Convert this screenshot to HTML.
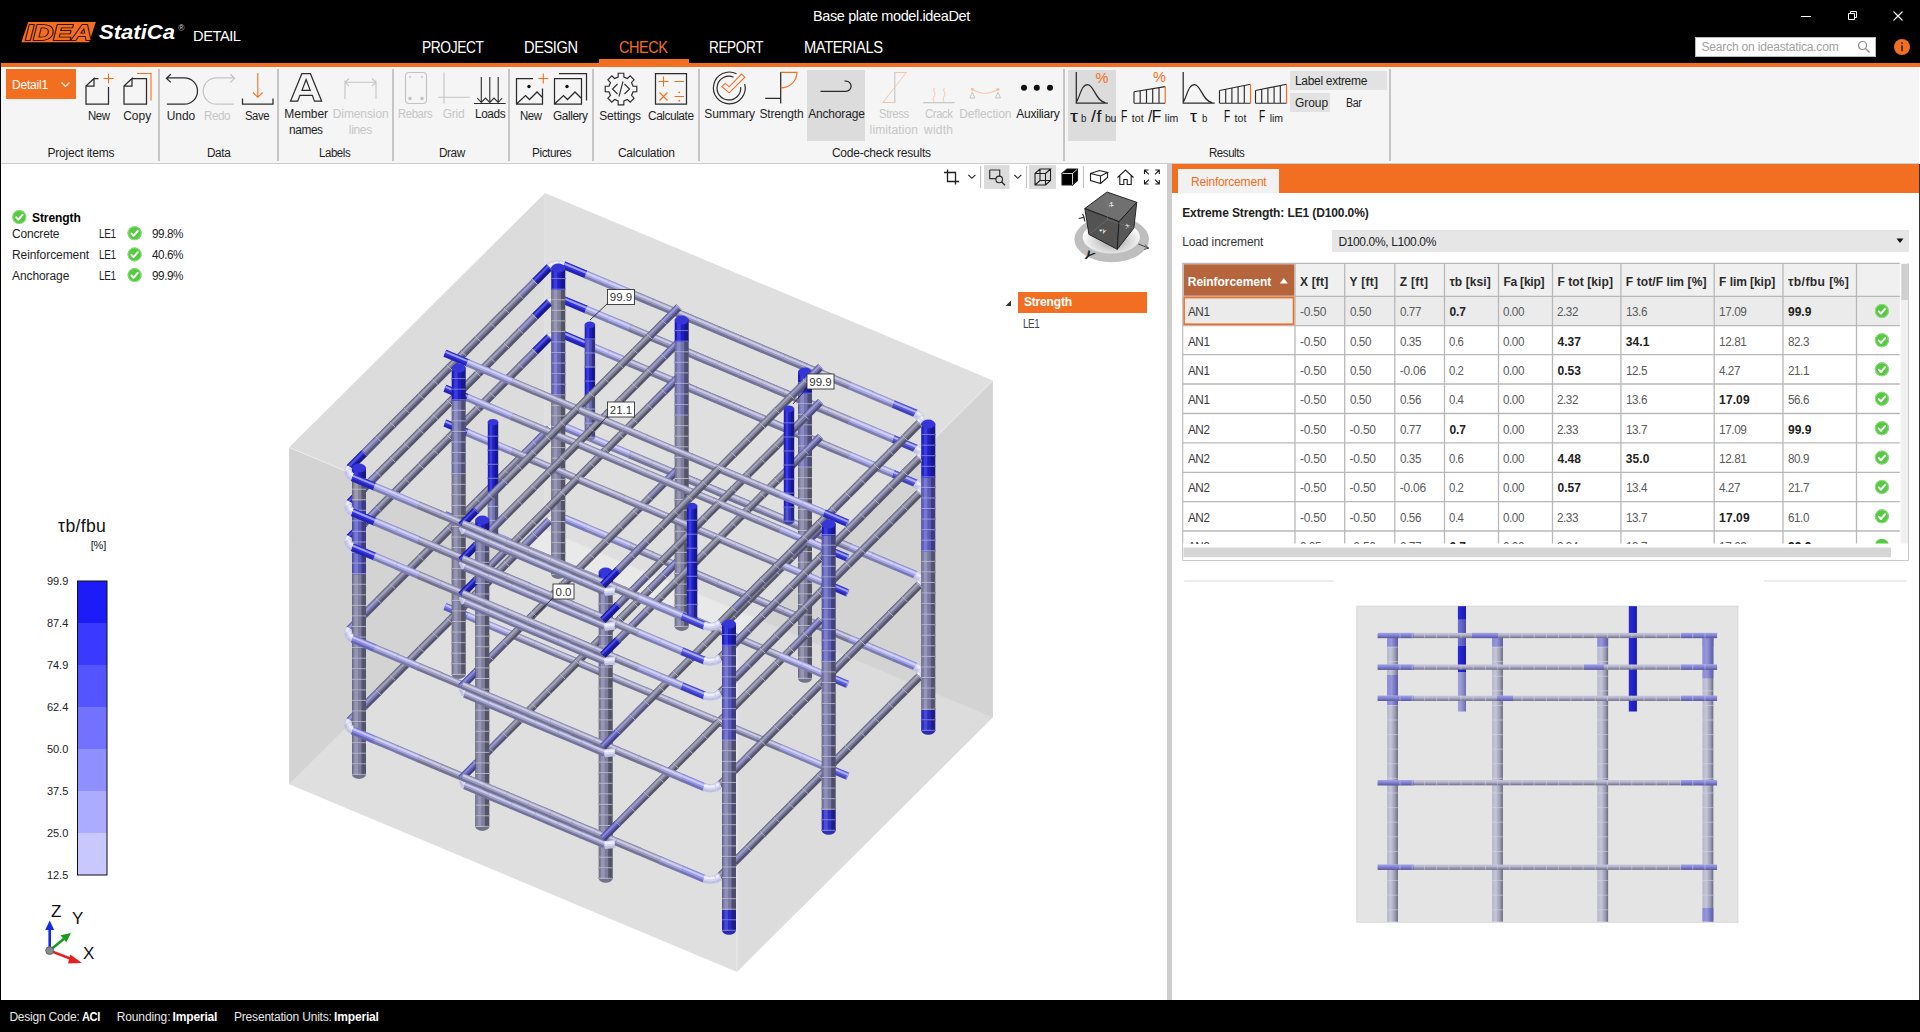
<!DOCTYPE html>
<html lang="en"><head><meta charset="utf-8"><title>Base plate model.ideaDet</title>
<style>
*{box-sizing:border-box;margin:0;padding:0}
html,body{width:1920px;height:1032px;overflow:hidden;background:#fff}
body{font-family:"Liberation Sans",sans-serif;font-size:13px;color:#1e1e1e;position:relative}
.abs{position:absolute}
#title{position:absolute;left:0;top:0;width:1920px;height:63px;background:#000}
#oline{position:absolute;left:0;top:63px;width:1920px;height:4px;background:#f26f21}
#ribbon{position:absolute;left:1px;top:67px;width:1918px;height:96px;background:#f5f5f5}
#ribline{position:absolute;left:1px;top:163px;width:1918px;height:1px;background:#cdcdcd}
#status{position:absolute;left:0;top:1000px;width:1920px;height:32px;background:#000;color:#fff}
.t{position:absolute;white-space:nowrap;line-height:1}
.c{transform:translateX(-50%);text-align:center}
.menu{position:absolute;top:39px;color:#fff;font-size:16px;white-space:nowrap;line-height:1;transform:translateX(-50%);letter-spacing:-0.3px}
.sep{position:absolute;top:69px;width:2px;height:92px;background:#c6c6c6}
.lbl{position:absolute;font-size:12.6px;color:#1e1e1e;white-space:nowrap;line-height:1;transform:translateX(-50%);text-align:center;letter-spacing:-0.2px}
.lbl.dis{color:#c9c9c9}
.grp{position:absolute;top:146px;font-size:12.6px;color:#1e1e1e;white-space:nowrap;line-height:1;transform:translateX(-50%);letter-spacing:-0.15px}
svg{position:absolute;overflow:visible}
</style></head><body>
<div id="title"></div>
<div id="oline"></div>
<div id="ribbon"></div>
<div id="ribline"></div>
<svg style="left:0;top:0" width="260" height="63" viewBox="0 0 260 63">
 <polygon points="28.2,21.9 95.8,21.9 89.2,42.3 21.4,42.3" fill="#f26f21"/>
 <text x="25.3" y="40" font-family="Liberation Sans,sans-serif" font-weight="bold" font-style="italic" font-size="22" fill="#f26f21" stroke="#000" stroke-width="1.5" paint-order="stroke" stroke-linejoin="miter" textLength="67" lengthAdjust="spacingAndGlyphs">IDEA</text>
 <text x="99" y="39.4" font-family="Liberation Sans,sans-serif" font-weight="bold" font-style="italic" font-size="21" fill="#fff" textLength="76" lengthAdjust="spacingAndGlyphs">StatiCa</text>
 <text x="178.2" y="31" font-family="Liberation Sans,sans-serif" font-size="8.5" fill="#ccc">®</text>
</svg>
<div class="abs" style="left:1695px;top:37px;width:181px;height:20px;background:#fff;border:1px solid #bbb"></div>
<!--TT0--><div class="t" style="left:193.00px;top:28.45px;font-size:15.30px;color:#fff;letter-spacing:-0.450px;transform:scaleX(0.9566);transform-origin:0 0;">DETAIL</div>
<div class="t" style="left:813.00px;top:8.95px;font-size:14.50px;color:#fff;letter-spacing:-0.385px;">Base plate model.ideaDet</div>
<div class="t" style="left:421.50px;top:39.60px;font-size:15.60px;color:#fff;letter-spacing:-0.450px;transform:scaleX(0.8844);transform-origin:0 0;">PROJECT</div>
<div class="t" style="left:524.00px;top:39.60px;font-size:15.60px;color:#fff;letter-spacing:-0.450px;transform:scaleX(0.9381);transform-origin:0 0;">DESIGN</div>
<div class="t" style="left:619.00px;top:39.60px;font-size:15.60px;color:#f26f21;letter-spacing:-0.450px;transform:scaleX(0.9279);transform-origin:0 0;">CHECK</div>
<div class="t" style="left:709.00px;top:39.60px;font-size:15.60px;color:#fff;letter-spacing:-0.450px;transform:scaleX(0.8724);transform-origin:0 0;">REPORT</div>
<div class="t" style="left:804.00px;top:39.60px;font-size:15.60px;color:#fff;letter-spacing:-0.450px;transform:scaleX(0.9443);transform-origin:0 0;">MATERIALS</div>
<div class="t" style="left:1701.50px;top:41.30px;font-size:12.00px;color:#a0a0a0;letter-spacing:-0.176px;">Search on ideastatica.com</div><!--TT1-->
<div class="abs" style="left:598.5px;top:59px;width:90px;height:4px;background:#f26f21"></div>
<svg style="left:1780px;top:0" width="140" height="32" viewBox="0 0 140 32">
 <path d="M21 16.500h10" stroke="#fff" stroke-width="1" fill="none"/>
 <path d="M68.500 13.500h6v6h-6z M70.500 13.500v-2h6v6h-2" stroke="#fff" stroke-width="1" fill="none"/>
 <path d="M113.500 11.500l9 9M122.500 11.500l-9 9" stroke="#fff" stroke-width="1.100" fill="none"/>
</svg>
<svg style="left:1856px;top:39px" width="16" height="16" viewBox="0 0 16 16"><circle cx="6.500" cy="6.500" r="4" fill="none" stroke="#8a8a8a" stroke-width="1.200"/><path d="M9.500 9.500l4 4" stroke="#8a8a8a" stroke-width="1.300"/></svg>
<svg style="left:1893px;top:38px" width="18" height="18" viewBox="0 0 18 18"><circle cx="9" cy="9" r="8" fill="#f26f21"/><rect x="8.300" y="7.300" width="1.500" height="6" fill="#222"/><rect x="8.300" y="4.300" width="1.500" height="1.600" fill="#222"/></svg>

<div class="abs" style="left:6px;top:69px;width:70px;height:30px;background:#f26f21"></div>
<div class="t" style="left:12.00px;top:78.50px;font-size:12.00px;color:#fff;letter-spacing:-0.193px;">Detail1</div>
<div class="abs" style="left:807px;top:70px;width:58px;height:71px;background:#dcdcdc"></div>
<div class="abs" style="left:1068px;top:70px;width:48px;height:71px;background:#dcdcdc"></div>
<div class="abs" style="left:1290px;top:71px;width:97px;height:19px;background:#e2e2e2"></div>
<div class="abs" style="left:1290px;top:93px;width:40px;height:19px;background:#e2e2e2"></div>
<div class="sep" style="left:158px"></div>
<div class="sep" style="left:277px"></div>
<div class="sep" style="left:392px"></div>
<div class="sep" style="left:508px"></div>
<div class="sep" style="left:592px"></div>
<div class="sep" style="left:698px"></div>
<div class="sep" style="left:1063px"></div>
<div class="sep" style="left:1389px"></div>
<div class="t" style="left:88.49px;top:109.50px;font-size:12.00px;color:#1e1e1e;letter-spacing:-0.450px;transform:scaleX(0.9521);transform-origin:0 0;">New</div>
<div class="t" style="left:123.20px;top:109.50px;font-size:12.00px;color:#1e1e1e;letter-spacing:-0.003px;">Copy</div>
<div class="t" style="left:166.76px;top:109.50px;font-size:12.00px;color:#1e1e1e;letter-spacing:-0.071px;">Undo</div>
<div class="t" style="left:204.49px;top:109.50px;font-size:12.00px;color:#c6c6c6;letter-spacing:-0.450px;transform:scaleX(0.9731);transform-origin:0 0;">Redo</div>
<div class="t" style="left:244.59px;top:109.50px;font-size:12.00px;color:#1e1e1e;letter-spacing:-0.450px;transform:scaleX(0.9384);transform-origin:0 0;">Save</div>
<div class="t" style="left:284.32px;top:107.60px;font-size:12.00px;color:#1e1e1e;letter-spacing:-0.051px;">Member</div>
<div class="t" style="left:289.00px;top:124.00px;font-size:12.00px;color:#1e1e1e;letter-spacing:-0.403px;transform:scaleX(0.9883);transform-origin:0 0;">names</div>
<div class="t" style="left:332.75px;top:107.60px;font-size:12.00px;color:#c6c6c6;letter-spacing:-0.099px;">Dimension</div>
<div class="t" style="left:348.83px;top:124.00px;font-size:12.00px;color:#c6c6c6;letter-spacing:-0.336px;">lines</div>
<div class="t" style="left:398.49px;top:107.60px;font-size:12.00px;color:#c6c6c6;letter-spacing:-0.450px;transform:scaleX(0.9497);transform-origin:0 0;">Rebars</div>
<div class="t" style="left:442.80px;top:107.60px;font-size:12.00px;color:#c6c6c6;letter-spacing:-0.292px;">Grid</div>
<div class="t" style="left:474.70px;top:107.60px;font-size:12.00px;color:#1e1e1e;letter-spacing:-0.419px;transform:scaleX(0.9865);transform-origin:0 0;">Loads</div>
<div class="t" style="left:520.19px;top:109.50px;font-size:12.00px;color:#1e1e1e;letter-spacing:-0.450px;transform:scaleX(0.9521);transform-origin:0 0;">New</div>
<div class="t" style="left:552.70px;top:109.50px;font-size:12.00px;color:#1e1e1e;letter-spacing:-0.430px;transform:scaleX(0.9879);transform-origin:0 0;">Gallery</div>
<div class="t" style="left:599.29px;top:109.50px;font-size:12.00px;color:#1e1e1e;letter-spacing:-0.220px;">Settings</div>
<div class="t" style="left:647.50px;top:109.50px;font-size:12.00px;color:#1e1e1e;letter-spacing:-0.447px;transform:scaleX(0.9904);transform-origin:0 0;">Calculate</div>
<div class="t" style="left:704.30px;top:107.60px;font-size:12.00px;color:#1e1e1e;letter-spacing:-0.091px;">Summary</div>
<div class="t" style="left:759.41px;top:107.60px;font-size:12.00px;color:#1e1e1e;letter-spacing:-0.170px;">Strength</div>
<div class="t" style="left:808.16px;top:107.60px;font-size:12.00px;color:#1e1e1e;letter-spacing:-0.171px;">Anchorage</div>
<div class="t" style="left:878.64px;top:107.60px;font-size:12.00px;color:#c6c6c6;letter-spacing:-0.450px;transform:scaleX(0.9541);transform-origin:0 0;">Stress</div>
<div class="t" style="left:869.61px;top:124.00px;font-size:12.00px;color:#c6c6c6;letter-spacing:0.115px;">limitation</div>
<div class="t" style="left:924.99px;top:107.60px;font-size:12.00px;color:#c6c6c6;letter-spacing:-0.450px;transform:scaleX(0.9480);transform-origin:0 0;">Crack</div>
<div class="t" style="left:924.02px;top:124.00px;font-size:12.00px;color:#c6c6c6;letter-spacing:0.237px;">width</div>
<div class="t" style="left:959.23px;top:107.60px;font-size:12.00px;color:#c6c6c6;letter-spacing:-0.136px;">Deflection</div>
<div class="t" style="left:1016.19px;top:107.60px;font-size:12.00px;color:#1e1e1e;letter-spacing:-0.216px;">Auxiliary</div>
<div class="t" style="left:47.41px;top:146.60px;font-size:12.00px;color:#1e1e1e;letter-spacing:-0.181px;">Project items</div>
<div class="t" style="left:206.65px;top:146.60px;font-size:12.00px;color:#1e1e1e;letter-spacing:-0.412px;transform:scaleX(0.9829);transform-origin:0 0;">Data</div>
<div class="t" style="left:319.19px;top:146.60px;font-size:12.00px;color:#1e1e1e;letter-spacing:-0.450px;transform:scaleX(0.9544);transform-origin:0 0;">Labels</div>
<div class="t" style="left:438.60px;top:146.60px;font-size:12.00px;color:#1e1e1e;letter-spacing:-0.450px;transform:scaleX(0.9831);transform-origin:0 0;">Draw</div>
<div class="t" style="left:532.20px;top:146.60px;font-size:12.00px;color:#1e1e1e;letter-spacing:-0.450px;transform:scaleX(0.9852);transform-origin:0 0;">Pictures</div>
<div class="t" style="left:617.88px;top:146.60px;font-size:12.00px;color:#1e1e1e;letter-spacing:-0.233px;">Calculation</div>
<div class="t" style="left:831.90px;top:146.60px;font-size:12.00px;color:#1e1e1e;letter-spacing:-0.206px;">Code-check results</div>
<div class="t" style="left:1209.14px;top:146.60px;font-size:12.00px;color:#1e1e1e;letter-spacing:-0.450px;transform:scaleX(0.9568);transform-origin:0 0;">Results</div>
<div class="t" style="left:1295.00px;top:74.80px;font-size:12.00px;color:#1e1e1e;letter-spacing:-0.311px;">Label extreme</div>
<div class="t" style="left:1295.00px;top:96.80px;font-size:12.00px;color:#1e1e1e;letter-spacing:-0.070px;">Group</div>
<div class="t" style="left:1346.40px;top:96.80px;font-size:12.00px;color:#1e1e1e;letter-spacing:-0.450px;transform:scaleX(0.8834);transform-origin:0 0;">Bar</div>
<div class="t" style="left:1069.70px;top:108.60px;font-size:16.00px;color:#111;letter-spacing:0.500px;transform:scaleX(1.2658);transform-origin:0 0;">τ</div>
<div class="t" style="left:1081.00px;top:113.05px;font-size:10.50px;color:#222;letter-spacing:-0.439px;transform:scaleX(0.9248);transform-origin:0 0;">b</div>
<div class="t" style="left:1090.50px;top:108.60px;font-size:16.00px;color:#111;letter-spacing:0.500px;transform:scaleX(1.1182);transform-origin:0 0;">/f</div>
<div class="t" style="left:1105.00px;top:113.05px;font-size:10.50px;color:#222;letter-spacing:-0.339px;">bu</div>
<div class="t" style="left:1121.00px;top:108.60px;font-size:16.00px;color:#111;letter-spacing:-0.450px;transform:scaleX(0.6447);transform-origin:0 0;">F</div>
<div class="t" style="left:1131.70px;top:113.05px;font-size:10.50px;color:#222;letter-spacing:0.142px;">tot</div>
<div class="t" style="left:1147.70px;top:108.60px;font-size:16.00px;color:#111;letter-spacing:-0.450px;transform:scaleX(0.9660);transform-origin:0 0;">/F</div>
<div class="t" style="left:1164.80px;top:113.05px;font-size:10.50px;color:#222;letter-spacing:0.029px;">lim</div>
<div class="t" style="left:1190.00px;top:108.60px;font-size:16.00px;color:#111;letter-spacing:0.500px;transform:scaleX(1.1076);transform-origin:0 0;">τ</div>
<div class="t" style="left:1201.70px;top:113.05px;font-size:10.50px;color:#222;letter-spacing:-0.450px;transform:scaleX(0.9077);transform-origin:0 0;">b</div>
<div class="t" style="left:1223.80px;top:108.60px;font-size:16.00px;color:#111;letter-spacing:-0.450px;transform:scaleX(0.6344);transform-origin:0 0;">F</div>
<div class="t" style="left:1234.40px;top:113.05px;font-size:10.50px;color:#222;letter-spacing:0.176px;">tot</div>
<div class="t" style="left:1259.20px;top:108.60px;font-size:16.00px;color:#111;letter-spacing:-0.450px;transform:scaleX(0.6344);transform-origin:0 0;">F</div>
<div class="t" style="left:1269.80px;top:113.05px;font-size:10.50px;color:#222;letter-spacing:-0.071px;">lim</div>
<svg style="left:0;top:0" width="1920" height="170" viewBox="0 0 1920 170"><path d="M61.5 82.5l4 4l4-4" stroke="#fff" stroke-width="1.1" fill="none" stroke-linejoin="miter" /><path d="M94 78.5h4.5M108.5 87v17h-22.5v-18l8-7.5v7.5h-8" stroke="#2b2b2b" stroke-width="1.25" fill="none" stroke-linejoin="miter" /><path d="M108.5 73.5v10M103.5 78.5h10" stroke="#f26f21" stroke-width="1.1" fill="none" stroke-linejoin="miter" /><path d="M132 78.5h14.5v25.5h-22.5v-18l8-7.5v7.5h-8" stroke="#2b2b2b" stroke-width="1.25" fill="none" stroke-linejoin="miter" /><path d="M137 73.5h14v27" stroke="#f26f21" stroke-width="1.1" fill="none" stroke-linejoin="miter" /><path d="M166.9 104.2h17.4a13.2 13.2 0 0 0 0-26.4h-17M170.8 74.2l-4.4 4.1l4.4 4.1" stroke="#2b2b2b" stroke-width="1.25" fill="none" stroke-linejoin="miter" /><path d="M233.8 104.2h-17.4a13.2 13.2 0 0 1 0-26.4h17M230.3 74.2l4.4 4.1l-4.4 4.1" stroke="#c4c4c4" stroke-width="1.25" fill="none" stroke-linejoin="miter" /><path d="M242.5 98.5v5.5h30.5v-5.5" stroke="#2b2b2b" stroke-width="1.25" fill="none" stroke-linejoin="miter" /><path d="M257.8 73v24M253 92.5l4.8 4.8l4.8-4.8" stroke="#f26f21" stroke-width="1.1" fill="none" stroke-linejoin="miter" /><path d="M290.5 101.2l11.3-27.5h8.6l11.3 27.5h-7.2l-2.2-5.8h-12.4l-2.2 5.8zM302 90.3h8.2l-4.1-10.8z" stroke="#2b2b2b" stroke-width="1.2" fill="none" stroke-linejoin="miter" /><path d="M345 80.5v18.5M376 80.5v18.5M345.5 82.3h30M349 78.5l-3.8 3.8l3.8 3.8M372 78.5l3.8 3.8l-3.8 3.8" stroke="#c4c4c4" stroke-width="1.1" fill="none" stroke-linejoin="miter" /><rect x="405.5" y="72.5" width="21" height="31" rx="3.5" fill="none" stroke="#c4c4c4" stroke-width="1.2"/><circle cx="410" cy="77" r="0.9" fill="#c4c4c4"/><circle cx="422" cy="77" r="0.9" fill="#c4c4c4"/><circle cx="410" cy="98.5" r="1.8" fill="#c4c4c4"/><circle cx="422" cy="98.5" r="1.8" fill="#c4c4c4"/><path d="M444 72.5v31M438 97.3h31.7" stroke="#c4c4c4" stroke-width="1.1" fill="none" stroke-linejoin="miter" /><path d="M474 103.5h31.7M481.3 77v25.5M489.8 77v25.5M498.2 77v25.5M477.3 98l4 4.5l4.2-4.5l4.3 4.5l4.2-4.5l4.2 4.5l4-4.5" stroke="#2b2b2b" stroke-width="1.1" fill="none" stroke-linejoin="miter" /><path d="M533 78.5h-16.5v25.5h26v-15.5M517 103.5l8.5-8l4 4l7.5-7.5l5.5 5.5" stroke="#2b2b2b" stroke-width="1.25" fill="none" stroke-linejoin="miter" /><circle cx="529" cy="86.5" r="1.7" fill="#111"/><path d="M543.3 73.5v10M538.3 78.5h10" stroke="#f26f21" stroke-width="1.1" fill="none" stroke-linejoin="miter" /><path d="M554.5 78.5h27v25.5h-27zM555 103.5l8.5-8l4 4l7.5-7.5l6 6M559 73.5h27.5v27" stroke="#2b2b2b" stroke-width="1.25" fill="none" stroke-linejoin="miter" /><circle cx="567" cy="86.5" r="1.7" fill="#111"/><path d="M618.2 73.2L623.8 73.2L623.9 77.0L627.4 78.5L630.2 75.9L634.1 79.8L631.5 82.6L633.0 86.1L636.8 86.2L636.8 91.8L633.0 91.9L631.5 95.4L634.1 98.2L630.2 102.1L627.4 99.5L623.9 101.0L623.8 104.8L618.2 104.8L618.1 101.0L614.6 99.5L611.8 102.1L607.9 98.2L610.5 95.4L609.0 91.9L605.2 91.8L605.2 86.2L609.0 86.1L610.5 82.6L607.9 79.8L611.8 75.9L614.6 78.5L618.1 77.0z" stroke="#2b2b2b" stroke-width="1.15" fill="none" stroke-linejoin="miter" stroke-linejoin="round"/><path d="M617.5 84l-5 5l5 5M624.5 84l5 5l-5 5M623 81.5l-4 15" stroke="#2b2b2b" stroke-width="1.1" fill="none" stroke-linejoin="miter" /><path d="M655.5 73.5h31v30.5h-31z" stroke="#2b2b2b" stroke-width="1.25" fill="none" stroke-linejoin="miter" /><path d="M658.5 81.5h10M663.5 76.5v10M674.5 81.5h9.5M659.5 92.5l8 8M667.5 92.5l-8 8M674.5 96.5h9.5" stroke="#f26f21" stroke-width="1.1" fill="none" stroke-linejoin="miter" /><circle cx="679.3" cy="92.3" r="0.9" fill="#f26f21"/><circle cx="679.3" cy="100.7" r="0.9" fill="#f26f21"/><path d="M736.5 73.8A15.9 15.9 0 1 0 744.7 84" stroke="#2b2b2b" stroke-width="1.2" fill="none" stroke-linejoin="miter" /><path d="M733.5 77.2A11.85 11.85 0 1 0 740.7 87.1" stroke="#2b2b2b" stroke-width="1.2" fill="none" stroke-linejoin="miter" /><path d="M721.9 86.6L725.1 83.4L729.2 86.8L741.5 74.1L744.8 77.2L729.2 92.8z" stroke="#f26f21" stroke-width="1.1" fill="none" stroke-linejoin="miter" /><path d="M780.7 72v31.5M765.2 98.3h15.5" stroke="#2b2b2b" stroke-width="1.25" fill="none" stroke-linejoin="miter" /><path d="M780.7 72.4h16.2A16.2 15.5 0 0 1 780.7 87.9" stroke="#f26f21" stroke-width="1.1" fill="none" stroke-linejoin="miter" /><path d="M820.5 91.3h25.5a5.1 5.1 0 0 0 0-10.2h-1.5" stroke="#2b2b2b" stroke-width="1.25" fill="none" stroke-linejoin="miter" /><path d="M894.8 72v31" stroke="#c4c4c4" stroke-width="1.1" fill="none" stroke-linejoin="miter" /><path d="M894.8 72.5h11.5l-23.5 30h12" stroke="#f8c4a6" stroke-width="1" fill="none" stroke-linejoin="miter" /><path d="M923 102.7h31.5" stroke="#c4c4c4" stroke-width="1.2" fill="none" stroke-linejoin="miter" /><path d="M934.5 88c-2.5 3 2 4.5 0 7.5s-1.5 4-0.5 6.5M944.5 88c-2.5 3 2 4.5 0 7.5s-1.5 4-0.5 6.5" stroke="#f8c4a6" stroke-width="1" fill="none" stroke-linejoin="miter" /><path d="M972.3 89.3q13 8 25.7 0" stroke="#f8c4a6" stroke-width="1.1" fill="none" stroke-linejoin="miter" /><circle cx="972.3" cy="89.3" r="1.6" fill="#f8c4a6"/><circle cx="998" cy="89.3" r="1.6" fill="#f8c4a6"/><path d="M972.3 92.5l-2.6 5.5h5.2zM998 92.5l-2.6 5.5h5.2z" stroke="#c4c4c4" stroke-width="1" fill="none" stroke-linejoin="miter" /><circle cx="1024" cy="87.8" r="3" fill="#111"/><circle cx="1036.8" cy="87.8" r="3" fill="#111"/><circle cx="1050" cy="87.8" r="3" fill="#111"/><path d="M1076.3 72v31h31.5M1076.8 101.5c4-8 5-17 11-17s8 17 17.5 18" stroke="#2b2b2b" stroke-width="1.25" fill="none" stroke-linejoin="miter" /><path d="M1183.2 72v31h31.5M1183.7 101.5c4-8 5-17 11-17s8 17 17.5 18" stroke="#2b2b2b" stroke-width="1.25" fill="none" stroke-linejoin="miter" /><path d="M1134.0 103.2h31.2M1134.0 91.8L1165.2 86.6M1134.0 91.8V103.2M1140.2 90.8V103.2M1146.5 89.7V103.2M1152.7 88.7V103.2M1159.0 87.6V103.2" stroke="#2b2b2b" stroke-width="1.15" fill="none" stroke-linejoin="miter" /><path d="M1165.2 86.6V103.2" stroke="#f26f21" stroke-width="1.2" fill="none" stroke-linejoin="miter" /><path d="M1219.5 103.2h31.0M1219.5 90.5L1250.5 84.3M1219.5 90.5V103.2M1225.7 89.3V103.2M1231.9 88.0V103.2M1238.1 86.8V103.2M1244.3 85.5V103.2" stroke="#2b2b2b" stroke-width="1.15" fill="none" stroke-linejoin="miter" /><path d="M1250.5 84.3V103.2" stroke="#f26f21" stroke-width="1.2" fill="none" stroke-linejoin="miter" /><path d="M1255.5 103.2h31.0M1255.5 90.5L1286.5 84.3M1255.5 90.5V103.2M1261.7 89.3V103.2M1267.9 88.0V103.2M1274.1 86.8V103.2M1280.3 85.5V103.2" stroke="#2b2b2b" stroke-width="1.15" fill="none" stroke-linejoin="miter" /><path d="M1286.5 84.3V103.2" stroke="#f26f21" stroke-width="1.2" fill="none" stroke-linejoin="miter" /><text x="1102" y="82.6" font-family="Liberation Sans,sans-serif" font-size="14.5" fill="#f26f21" text-anchor="middle">%</text><text x="1159.5" y="82.2" font-family="Liberation Sans,sans-serif" font-size="14.5" fill="#f26f21" text-anchor="middle">%</text></svg>
<div class="abs" style="left:1167px;top:164px;width:5px;height:836px;background:#cdcdcd"></div>
<div class="t" style="left:32.00px;top:211.70px;font-size:12.00px;color:#000;letter-spacing:-0.078px;font-weight:bold;">Strength</div>
<div class="t" style="left:12.00px;top:227.70px;font-size:12.00px;color:#1e1e1e;letter-spacing:-0.174px;">Concrete</div>
<div class="t" style="left:99.30px;top:227.70px;font-size:12.00px;color:#1e1e1e;letter-spacing:-0.450px;transform:scaleX(0.8313);transform-origin:0 0;">LE1</div>
<div class="t" style="left:152.30px;top:227.70px;font-size:12.00px;color:#1e1e1e;letter-spacing:-0.450px;transform:scaleX(0.9744);transform-origin:0 0;">99.8%</div>
<div class="t" style="left:12.00px;top:248.90px;font-size:12.00px;color:#1e1e1e;letter-spacing:-0.079px;">Reinforcement</div>
<div class="t" style="left:99.30px;top:248.90px;font-size:12.00px;color:#1e1e1e;letter-spacing:-0.450px;transform:scaleX(0.8313);transform-origin:0 0;">LE1</div>
<div class="t" style="left:152.30px;top:248.90px;font-size:12.00px;color:#1e1e1e;letter-spacing:-0.450px;transform:scaleX(0.9744);transform-origin:0 0;">40.6%</div>
<div class="t" style="left:12.00px;top:269.60px;font-size:12.00px;color:#1e1e1e;letter-spacing:-0.082px;">Anchorage</div>
<div class="t" style="left:99.30px;top:269.60px;font-size:12.00px;color:#1e1e1e;letter-spacing:-0.450px;transform:scaleX(0.8313);transform-origin:0 0;">LE1</div>
<div class="t" style="left:152.30px;top:269.60px;font-size:12.00px;color:#1e1e1e;letter-spacing:-0.450px;transform:scaleX(0.9744);transform-origin:0 0;">99.9%</div>
<div class="t" style="left:58.10px;top:518.20px;font-size:17.60px;color:#111;letter-spacing:0.335px;">τb/fbu</div>
<div class="t" style="left:90.70px;top:540.00px;font-size:11.00px;color:#111;letter-spacing:-0.131px;">[%]</div>
<div class="t" style="left:46.90px;top:575.80px;font-size:11.00px;color:#222;letter-spacing:-0.002px;">99.9</div>
<div class="t" style="left:46.90px;top:617.80px;font-size:11.00px;color:#222;letter-spacing:-0.002px;">87.4</div>
<div class="t" style="left:46.90px;top:659.80px;font-size:11.00px;color:#222;letter-spacing:-0.002px;">74.9</div>
<div class="t" style="left:46.90px;top:701.80px;font-size:11.00px;color:#222;letter-spacing:-0.002px;">62.4</div>
<div class="t" style="left:46.90px;top:743.80px;font-size:11.00px;color:#222;letter-spacing:-0.002px;">50.0</div>
<div class="t" style="left:46.90px;top:785.80px;font-size:11.00px;color:#222;letter-spacing:-0.002px;">37.5</div>
<div class="t" style="left:46.90px;top:827.80px;font-size:11.00px;color:#222;letter-spacing:-0.002px;">25.0</div>
<div class="t" style="left:46.90px;top:869.80px;font-size:11.00px;color:#222;letter-spacing:-0.002px;">12.5</div>
<div class="t" style="left:51.00px;top:902.50px;font-size:17.00px;color:#111;">Z</div>
<div class="t" style="left:72.00px;top:910.00px;font-size:17.00px;color:#111;">Y</div>
<div class="t" style="left:83.00px;top:944.50px;font-size:17.00px;color:#111;">X</div>
<div class="abs" style="left:1018px;top:292px;width:129px;height:21px;background:#f26f21"></div>
<div class="t" style="left:1023.90px;top:296.30px;font-size:12.00px;color:#fff;letter-spacing:-0.153px;font-weight:bold;">Strength</div>
<div class="t" style="left:1022.80px;top:318.00px;font-size:12.00px;color:#444;letter-spacing:-0.450px;transform:scaleX(0.8166);transform-origin:0 0;">LE1</div>
<svg style="left:0;top:0" width="1920" height="1032" viewBox="0 0 1920 1032"><circle cx="19.3" cy="217" r="7" fill="#56c943"/><circle cx="19.3" cy="217" r="6.5" fill="none" stroke="#8fe07f" stroke-width="1"/><path d="M16.2 217.3l2.1 2.3l4.2 -4.8" stroke="#fff" stroke-width="2" fill="none" stroke-linecap="round" stroke-linejoin="round"/><circle cx="134.6" cy="233.2" r="7" fill="#56c943"/><circle cx="134.6" cy="233.2" r="6.5" fill="none" stroke="#8fe07f" stroke-width="1"/><path d="M131.4 233.5l2.1 2.3l4.2 -4.8" stroke="#fff" stroke-width="2" fill="none" stroke-linecap="round" stroke-linejoin="round"/><circle cx="134.6" cy="254.4" r="7" fill="#56c943"/><circle cx="134.6" cy="254.4" r="6.5" fill="none" stroke="#8fe07f" stroke-width="1"/><path d="M131.4 254.8l2.1 2.3l4.2 -4.8" stroke="#fff" stroke-width="2" fill="none" stroke-linecap="round" stroke-linejoin="round"/><circle cx="134.6" cy="275.1" r="7" fill="#56c943"/><circle cx="134.6" cy="275.1" r="6.5" fill="none" stroke="#8fe07f" stroke-width="1"/><path d="M131.4 275.5l2.1 2.3l4.2 -4.8" stroke="#fff" stroke-width="2" fill="none" stroke-linecap="round" stroke-linejoin="round"/><rect x="77.5" y="581.0" width="29.5" height="42.2" fill="rgb(28,28,248)"/><rect x="77.5" y="623.0" width="29.5" height="42.2" fill="rgb(57,57,255)"/><rect x="77.5" y="665.0" width="29.5" height="42.2" fill="rgb(85,85,255)"/><rect x="77.5" y="707.0" width="29.5" height="42.2" fill="rgb(114,114,255)"/><rect x="77.5" y="749.0" width="29.5" height="42.2" fill="rgb(143,143,255)"/><rect x="77.5" y="791.0" width="29.5" height="42.2" fill="rgb(171,171,255)"/><rect x="77.5" y="833.0" width="29.5" height="42.2" fill="rgb(200,200,255)"/><rect x="77.5" y="581" width="29.5" height="294" fill="none" stroke="#111" stroke-width="1"/><path d="M49.7 950.6L49.7 928" stroke="#1428e6" stroke-width="2.6" fill="none" /><path d="M45.2 930L49.7 920.5L54.2 930z" stroke="#1428e6" stroke-width="0" fill="#1428e6" /><path d="M49.7 950.6L64 938.8" stroke="#1a9a1a" stroke-width="2.6" fill="none" /><path d="M60.5 935.3L71 933L66.3 942.2z" stroke="#1a9a1a" stroke-width="0" fill="#1a9a1a" /><path d="M49.7 950.6L72 959.3" stroke="#e62020" stroke-width="2.6" fill="none" /><path d="M70.3 954.6L82 963L68 963.6z" stroke="#e62020" stroke-width="0" fill="#e62020" /><circle cx="49.7" cy="950.6" r="4" fill="#8a8a8a" stroke="#555" stroke-width="0.8"/><rect x="984" y="165" width="25.5" height="24" fill="#dcdcdc"/><rect x="1029" y="165" width="27" height="24" fill="#dcdcdc"/><path d="M980.6 166v22" stroke="#c4c4c4" stroke-width="1.2" fill="none" /><path d="M1026.5 166v22" stroke="#c4c4c4" stroke-width="1.2" fill="none" /><path d="M1083.5 166v22" stroke="#c4c4c4" stroke-width="1.2" fill="none" /><path d="M947.5 169.5v12h11.5M944 172.5h11.5v12" stroke="#1e1e1e" stroke-width="1.3" fill="none" /><path d="M968.4 174.8l3.5 3.5l3.5-3.5" stroke="#1e1e1e" stroke-width="1.1" fill="none" /><path d="M989.7 170h10v8.6h-5.5M989.7 170v8.6h4.5" stroke="#333" stroke-width="1.2" fill="none" /><circle cx="999.2" cy="179.4" r="3.3" fill="#dcdcdc" stroke="#222" stroke-width="1.1"/><path d="M1001.7 181.9l3.3 3.3" stroke="#1e1e1e" stroke-width="1.3" fill="none" /><path d="M1014.3 174.8l3.5 3.5l3.5-3.5" stroke="#1e1e1e" stroke-width="1.1" fill="none" /><path d="M1035 173.5h10.5v11.5h-10.5zM1035 173.5l5-4.5h10.5l-5 4.5M1050.5 169v11.5l-5 4.5M1040 169v11.5h10.5M1040 180.5l-5 4.5" stroke="#1e1e1e" stroke-width="1.1" fill="none" /><path d="M1062 173.5h10.5v11.5h-10.5zM1062 173.5l5-4.5h10.5v11.5l-5 4.5v-11.5z" stroke="#1e1e1e" stroke-width="1.1" fill="#000" /><path d="M1062.5 173.5h10l4.5-4" stroke="#fff" stroke-width="0.8" fill="none" /><path d="M1072.5 173.5v11" stroke="#fff" stroke-width="0.8" fill="none" /><path d="M1090.5 173.5l10 2.5v7.5l-10-3zM1090.5 173.5l9-3l8 2l-7 3.5M1107.500 172.500v5l-7 6" stroke="#1e1e1e" stroke-width="1.1" fill="none" /><path d="M1117.5 177.5l8-7.5l8 7.5M1119.8 176v8.5h4v-5h3.400v5h4v-8.500" stroke="#1e1e1e" stroke-width="1.1" fill="none" /><path d="M1144.5 174v-4h4M1144.5 170l4.300 4.300M1159.300 174v-4h-4M1159.300 170l-4.300 4.300M1144.5 180v4h4M1144.5 184l4.300-4.300M1159.300 180v4h-4M1159.300 184l-4.300-4.300" stroke="#1e1e1e" stroke-width="1.1" fill="none" /><defs><radialGradient id="ncs" cx="0.52" cy="0.62" r="0.55"><stop offset="0" stop-color="#9a9a9a"/><stop offset="0.55" stop-color="#d8d8d8"/><stop offset="1" stop-color="#ffffff"/></radialGradient></defs><ellipse cx="1111.700" cy="239.300" rx="37.300" ry="23" fill="#bebebe"/><ellipse cx="1111.300" cy="237.200" rx="28.600" ry="16.300" fill="url(#ncs)"/><polygon points="1107,192 1136.800,202.300 1119,221.700 1084.800,208.500" fill="#707070" stroke="#1a1a1a" stroke-width="0.9" stroke-linejoin="round"/><polygon points="1084.800,208.500 1119,221.700 1117.300,249.300 1088.900,234.400" fill="#535353" stroke="#1a1a1a" stroke-width="0.9" stroke-linejoin="round"/><polygon points="1119,221.700 1136.800,202.300 1133.800,228.200 1117.300,249.300" fill="#585858" stroke="#1a1a1a" stroke-width="0.9" stroke-linejoin="round"/><path d="M1107 192l0.500 27.500l-18.600 15M1107.500 219.500l26.300 8.700" stroke="#7c7c7c" stroke-width="0.5" fill="none" /><text x="1098.500" y="231.500" font-family="Liberation Sans,sans-serif" font-size="5.500" font-weight="bold" fill="#fff" transform="rotate(22 1098.500 231.500)">+Y</text><text x="1109.500" y="207.500" font-family="Liberation Sans,sans-serif" font-size="5.500" font-weight="bold" fill="#fff" transform="rotate(-28 1109.500 207.500)">-Z</text><text x="1127" y="229.500" font-family="Liberation Sans,sans-serif" font-size="5" font-weight="bold" fill="#e8e8e8" transform="rotate(-58 1127 229.500)">-X</text><text x="0" y="0" font-family="Liberation Sans,sans-serif" font-size="13" font-weight="bold" fill="#222" transform="translate(1081.500 257) rotate(24) skewX(-20)">Y</text><path d="M1138.300 243.900l10.400 4.300M1148.700 248.200l-3.400-3.300M1148.700 248.200l-4.600 1.200" stroke="#333" stroke-width="0.9" fill="none" /><path d="M1078.600 218.500l5.500-1.200M1084.100 217.300l0.700 4.200M1084.100 217.300l-1.500-3.200" stroke="#333" stroke-width="1.2" fill="none" /><path d="M1011 300.500v5.500h-5.500z" stroke="#333" stroke-width="0" fill="#333" /></svg><svg style="left:0;top:0" width="1167" height="1000" viewBox="0 0 1167 1000"><polygon points="289.1,447.4 545.0,192.9 545.0,529.8 289.1,784.2" fill="#ebebeb" fill-opacity="1" /><polygon points="545.0,192.9 992.9,380.6 992.9,717.5 545.0,529.8" fill="#eeeeee" fill-opacity="1" /><polygon points="289.1,784.2 545.0,529.8 992.9,717.5 737.0,971.9" fill="#f9f9f9" fill-opacity="1" /><path d="M545.0 192.9L545.0 529.8M289.1 784.2L545.0 529.8M545.0 529.8L992.9 717.5" stroke="#f4f4f4" stroke-width="1" fill="none"/><polygon points="289.1,447.4 545.0,192.9 992.9,380.6 737.0,635.1" fill="#000" fill-opacity="0.064" /><polygon points="289.1,447.4 737.0,635.1 737.0,971.9 289.1,784.2" fill="#000" fill-opacity="0.1" /><polygon points="737.0,635.1 992.9,380.6 992.9,717.5 737.0,971.9" fill="#000" fill-opacity="0.115" /><path d="M289.1 447.4L737.0 635.1M737.0 635.1L992.9 380.6M737.0 635.1L737.0 971.9" stroke="#ececec" stroke-width="1" fill="none"/><style>.ka{stroke:#181884;stroke-width:14.0}.kb{stroke:#1e1ec6;stroke-width:9.0}.kc{stroke:#3c3cde;stroke-width:3.6}.kd{stroke:#9090ea;stroke-width:0.8}.ke{stroke:#545466;stroke-width:14.0}.kf{stroke:#7e7e96;stroke-width:9.0}.kg{stroke:#9c9cae;stroke-width:3.6}.kh{stroke:#c6c6d2;stroke-width:0.8}.ki{stroke:#3c3c7e;stroke-width:14.0}.kj{stroke:#5a5aba;stroke-width:9.0}.kk{stroke:#7878d2;stroke-width:3.6}.kl{stroke:#aeaee4;stroke-width:0.8}.km{stroke:#54546c;stroke-width:14.0}.kn{stroke:#7e7e9c;stroke-width:9.0}.ko{stroke:#9696b4;stroke-width:3.6}.kp{stroke:#c0c0d2;stroke-width:0.8}.kq{stroke:#4e4e72;stroke-width:14.0}.kr{stroke:#7272a8;stroke-width:9.0}.ks{stroke:#9090c0;stroke-width:3.6}.kt{stroke:#c0c0de;stroke-width:0.8}.ku{stroke:#424278;stroke-width:14.0}.kv{stroke:#6060b4;stroke-width:9.0}.kw{stroke:#7e7ecc;stroke-width:3.6}.kx{stroke:#b4b4e4;stroke-width:0.8}.ky{stroke:#4e4e6c;stroke-width:14.0}.kz{stroke:#7878a2;stroke-width:9.0}.kaa{stroke:#9090ba;stroke-width:3.6}.kab{stroke:#c0c0d8;stroke-width:0.8}.kac{stroke:#7272ae;stroke-width:9.0}.kad{stroke:#8a8ac6;stroke-width:3.6}.kae{stroke:#babade;stroke-width:0.8}.kaf{stroke:#9696ba;stroke-width:3.6}.kag{stroke:#1e1e84;stroke-width:14.0}.kah{stroke:#2a2ac0;stroke-width:9.0}.kai{stroke:#4848d8;stroke-width:3.6}.kaj{stroke:#9696ea;stroke-width:0.8}.kak{stroke:#3030c0;stroke-width:9.0}.kal{stroke:#4e4ed8;stroke-width:3.6}.kam{stroke:#9c9cea;stroke-width:0.8}.kan{stroke:#181884;stroke-width:10.4}.kao{stroke:#1e1ec6;stroke-width:6.7}.kap{stroke:#3c3cde;stroke-width:2.7}.kaq{stroke:#30307e;stroke-width:10.4}.kar{stroke:#4e4eba;stroke-width:6.7}.kas{stroke:#6666d2;stroke-width:2.7}.kat{stroke:#a8a8e4;stroke-width:0.8}.kau{stroke:#484878;stroke-width:10.4}.kav{stroke:#6c6cae;stroke-width:6.7}.kaw{stroke:#8a8ac6;stroke-width:2.7}.kax{stroke:#4e4e72;stroke-width:10.4}.kay{stroke:#7272ae;stroke-width:6.7}.kaz{stroke:#242484;stroke-width:10.4}.kba{stroke:#3636c0;stroke-width:6.7}.kbb{stroke:#5454d8;stroke-width:2.7}.kbc{stroke:#2424ae;stroke-width:8.0}.kbd{stroke:#3030ea;stroke-width:5.1}.kbe{stroke:#a2a2ea;stroke-width:2.1}.kbf{stroke:#7e7eae;stroke-width:8.0}.kbg{stroke:#a8a8ea;stroke-width:5.1}.kbh{stroke:#d2d2f0;stroke-width:2.1}.kbi{stroke:#ccccea;stroke-width:0.8}.kbj{stroke:#727290;stroke-width:8.0}.kbk{stroke:#9c9cc6;stroke-width:5.1}.kbl{stroke:#ccccde;stroke-width:2.1}.kbm{stroke:#c6c6d8;stroke-width:0.8}.kbn{stroke:#3c3cae;stroke-width:8.0}.kbo{stroke:#4e4eea;stroke-width:5.1}.kbp{stroke:#aeaef0;stroke-width:2.1}.kbq{stroke:#a2a2ea;stroke-width:0.8}.kbr{stroke:#727296;stroke-width:7.6}.kbs{stroke:#9c9ccc;stroke-width:4.9}.kbt{stroke:#cccce4;stroke-width:2.0}.kbu{stroke:#c6c6de;stroke-width:0.8}.kbv{stroke:#c0c0e4;stroke-width:8.0}.kbw{stroke:#d8d8f0;stroke-width:5.1}.kbx{stroke:#f0f0fc;stroke-width:2.1}.kby{stroke:#727296;stroke-width:8.0}.kbz{stroke:#4242ae;stroke-width:8.0}.kca{stroke:#5a5aea;stroke-width:5.1}.kcb{stroke:#b4b4f0;stroke-width:2.1}.kcc{stroke:#a8a8ea;stroke-width:0.8}.kcd{stroke:#181884;stroke-width:8.0}.kce{stroke:#2424c0;stroke-width:5.1}.kcf{stroke:#5454de;stroke-width:2.1}.kcg{stroke:#545478;stroke-width:8.0}.kch{stroke:#7878ae;stroke-width:5.1}.kci{stroke:#9c9ccc;stroke-width:2.1}.kcj{stroke:#54546c;stroke-width:8.0}.kck{stroke:#787896;stroke-width:5.1}.kcl{stroke:#a2a2ba;stroke-width:2.1}.kcm{stroke:#545466;stroke-width:8.0}.kcn{stroke:#7e7e96;stroke-width:5.1}.kco{stroke:#a2a2b4;stroke-width:2.1}.kcp{stroke:#545472;stroke-width:8.0}.kcq{stroke:#7878a8;stroke-width:5.1}.kcr{stroke:#9c9cc6;stroke-width:2.1}.kcs{stroke:#78789c;stroke-width:5.1}.kct{stroke:#181884;stroke-width:7.6}.kcu{stroke:#1e1ec0;stroke-width:4.9}.kcv{stroke:#4e4ede;stroke-width:2.0}.kcw{stroke:#545472;stroke-width:7.6}.kcx{stroke:#7878a8;stroke-width:4.9}.kcy{stroke:#9c9cc6;stroke-width:2.0}.kcz{stroke:#545466;stroke-width:7.6}.kda{stroke:#7e7e96;stroke-width:4.9}.kdb{stroke:#a2a2ba;stroke-width:2.0}.kdc{stroke:#7878a2;stroke-width:4.9}.kdd{stroke:#4e4e78;stroke-width:7.6}.kde{stroke:#7272b4;stroke-width:4.9}.kdf{stroke:#9c9cd2;stroke-width:2.0}.kdg{stroke:#c0c0e4;stroke-width:0.8}.kdh{stroke:#2424ae;stroke-width:7.6}.kdi{stroke:#3030ea;stroke-width:4.9}.kdj{stroke:#a2a2ea;stroke-width:2.0}.kdk{stroke:#7e7eae;stroke-width:7.6}.kdl{stroke:#a8a8ea;stroke-width:4.9}.kdm{stroke:#d2d2f0;stroke-width:2.0}.kdn{stroke:#727290;stroke-width:7.6}.kdo{stroke:#9c9cc6;stroke-width:4.9}.kdp{stroke:#ccccde;stroke-width:2.0}.kdq{stroke:#2a2aae;stroke-width:7.6}.kdr{stroke:#3c3cea;stroke-width:4.9}.kds{stroke:#a2a2f0;stroke-width:2.0}.kdt{stroke:#6666b4;stroke-width:8.0}.kdu{stroke:#8a8af0;stroke-width:5.1}.kdv{stroke:#c6c6f0;stroke-width:2.1}.kdw{stroke:#c0c0f0;stroke-width:0.8}.kdx{stroke:#7878a8;stroke-width:8.0}.kdy{stroke:#a2a2de;stroke-width:5.1}.kdz{stroke:#d2d2ea;stroke-width:2.1}.kea{stroke:#7272b4;stroke-width:8.0}.keb{stroke:#9696f0;stroke-width:5.1}.kec{stroke:#ccccf0;stroke-width:2.1}.ked{stroke:#c6c6f0;stroke-width:0.8}.kee{stroke:#7878b4;stroke-width:8.0}.kef{stroke:#a2a2f6;stroke-width:5.1}.keg{stroke:#ccccf0;stroke-width:0.8}.keh{stroke:#4e4e78;stroke-width:8.0}.kei{stroke:#7272b4;stroke-width:5.1}.kej{stroke:#9c9cd2;stroke-width:2.1}.kek{stroke:#42427e;stroke-width:7.6}.kel{stroke:#6060ba;stroke-width:4.9}.kem{stroke:#8a8ad8;stroke-width:2.0}.ken{stroke:#5a5ab4;stroke-width:7.6}.keo{stroke:#7878f0;stroke-width:4.9}.kep{stroke:#c0c0f0;stroke-width:2.0}.keq{stroke:#b4b4f0;stroke-width:0.8}.ker{stroke:#4848ae;stroke-width:7.6}.kes{stroke:#6060f0;stroke-width:4.9}.ket{stroke:#b4b4f0;stroke-width:2.0}.keu{stroke:#aeaef0;stroke-width:0.8}</style><g fill="none" stroke-linecap="butt"><ellipse cx="558.3" cy="574.4" rx="7.0" ry="4.5" fill="#72728a"/><path class="ke" d="M558.3 563.2l0 11.8"/><path class="kn" d="M556.4 563.2l0 11.8"/><path class="ko" d="M555.5 563.2l0 11.8"/><path class="kh" d="M565.3 574.4l-14 0"/><path class="ke" d="M558.3 552.6l0 11.8"/><path class="kn" d="M556.4 552.6l0 11.8"/><path class="ko" d="M555.5 552.6l0 11.8"/><path class="kh" d="M565.3 563.8l-14 0"/><path class="ke" d="M558.3 542.1l0 11.8"/><path class="kn" d="M556.4 542.1l0 11.8"/><path class="ko" d="M555.5 542.1l0 11.8"/><path class="kh" d="M565.3 553.2l-14 0"/><ellipse cx="681.7" cy="626.4" rx="7.0" ry="4.5" fill="#72728a"/><path class="ke" d="M558.3 531.5l0 11.8"/><path class="kn" d="M556.4 531.5l0 11.8"/><path class="ko" d="M555.5 531.5l0 11.8"/><path class="kh" d="M565.3 542.7l-14 0"/><path class="kbv" d="M559.5 517.3l-6.8 1"/><path class="kbw" d="M559.4 516.2l-6.8 1"/><path class="kbx" d="M559.3 515.8l-6.8 1"/><path class="kbi" d="M553.9 522.2l-1.1 -7.9"/><path class="kbv" d="M565 518.7l-6.6 -1.4"/><path class="kbw" d="M565.2 517.6l-6.6 -1.4"/><path class="kbx" d="M565.3 517.1l-6.6 -1.4"/><path class="kbi" d="M558.1 521.3l1.6 -7.8"/><path class="kbv" d="M553.9 517.9l-5.3 3.1"/><path class="kbw" d="M553.3 517l-5.3 3.1"/><path class="kbx" d="M553.1 516.5l-5.3 3.1"/><path class="kbi" d="M551.1 524.2l-4.1 -6.9"/><path class="ke" d="M558.3 520.9l0 11.8"/><path class="kn" d="M556.4 520.9l0 11.8"/><path class="ko" d="M555.5 520.9l0 11.8"/><path class="kh" d="M565.3 532.1l-14 0"/><path class="kee" d="M563.8 518.3l23.1 9.7"/><path class="kef" d="M564.3 517.3l23.1 9.7"/><path class="kbh" d="M564.4 516.8l23.1 9.7"/><path class="keg" d="M587.9 524.1l-3.1 7.4"/><path class="keh" d="M534.4 535.5l15.1 -15.1"/><path class="kei" d="M533.6 534.7l15.1 -15.1"/><path class="kej" d="M533.3 534.3l15.1 -15.1"/><path class="kdg" d="M546.3 517.9l5.7 5.6"/><path class="ke" d="M558.3 510.4l0 11.8"/><path class="kn" d="M556.4 510.4l0 11.8"/><path class="ko" d="M555.5 510.4l0 11.8"/><path class="kh" d="M565.3 521.5l-14 0"/><path class="kbf" d="M585.8 527.6l23.1 9.7"/><path class="kbg" d="M586.2 526.6l23.1 9.7"/><path class="kbh" d="M586.4 526.1l23.1 9.7"/><path class="kbi" d="M609.9 533.4l-3.1 7.4"/><path class="ke" d="M558.3 499.8l0 11.8"/><path class="kn" d="M556.4 499.8l0 11.8"/><path class="ko" d="M555.5 499.8l0 11.8"/><path class="kh" d="M565.3 511l-14 0"/><path class="kbf" d="M607.8 536.8l23.1 9.7"/><path class="kbg" d="M608.2 535.8l23.1 9.7"/><path class="kbh" d="M608.4 535.4l23.1 9.7"/><path class="kbi" d="M631.8 542.7l-3.1 7.4"/><path class="kcg" d="M520.2 549.7l15.1 -15.1"/><path class="kch" d="M519.4 548.9l15.1 -15.1"/><path class="kci" d="M519.1 548.6l15.1 -15.1"/><path class="kt" d="M532 532.2l5.7 5.6"/><path class="ke" d="M681.7 615.2l0 11.8"/><path class="kn" d="M679.7 615.2l0 11.8"/><path class="ko" d="M678.9 615.2l0 11.8"/><path class="kh" d="M688.7 626.4l-14 0"/><path class="ke" d="M558.3 489.3l0 11.8"/><path class="kn" d="M556.4 489.3l0 11.8"/><path class="ko" d="M555.5 489.3l0 11.8"/><path class="kh" d="M565.3 500.4l-14 0"/><path class="kby" d="M629.7 546.1l23.1 9.7"/><path class="kbk" d="M630.2 545.1l23.1 9.7"/><path class="kbl" d="M630.4 544.6l23.1 9.7"/><path class="kbu" d="M653.8 551.9l-3.1 7.4"/><path class="ke" d="M681.7 604.6l0 11.8"/><path class="kn" d="M679.7 604.6l0 11.8"/><path class="ko" d="M678.9 604.6l0 11.8"/><path class="kh" d="M688.7 615.8l-14 0"/><path class="ke" d="M558.3 478.7l0 11.8"/><path class="kn" d="M556.4 478.7l0 11.8"/><path class="ko" d="M555.5 478.7l0 11.8"/><path class="kh" d="M565.3 489.9l-14 0"/><path class="kcj" d="M506 564l15.1 -15.1"/><path class="kck" d="M505.2 563.2l15.1 -15.1"/><path class="kcl" d="M504.8 562.9l15.1 -15.1"/><path class="kh" d="M517.8 546.5l5.7 5.6"/><path class="ke" d="M681.7 594.1l0 11.8"/><path class="kn" d="M679.7 594.1l0 11.8"/><path class="ko" d="M678.9 594.1l0 11.8"/><path class="kh" d="M688.7 605.2l-14 0"/><path class="kby" d="M651.7 555.4l23.1 9.7"/><path class="kbk" d="M652.1 554.3l23.1 9.7"/><path class="kbl" d="M652.3 553.9l23.1 9.7"/><path class="kbu" d="M675.8 561.2l-3.1 7.4"/><path class="ke" d="M558.3 468.1l0 11.8"/><path class="kn" d="M556.4 468.1l0 11.8"/><path class="ko" d="M555.5 468.1l0 11.8"/><path class="kh" d="M565.3 479.3l-14 0"/><ellipse cx="458.7" cy="674.4" rx="7.0" ry="4.5" fill="#72728a"/><path class="kbr" d="M681.5 567.8l24.5 10.3"/><path class="kbs" d="M681.9 566.9l24.5 10.3"/><path class="kbt" d="M682.1 566.4l24.5 10.3"/><path class="kbu" d="M706.9 574.4l-3 7"/><ellipse cx="805.0" cy="678.3" rx="7.0" ry="4.5" fill="#72728a"/><path class="ke" d="M681.7 583.5l0 11.8"/><path class="kn" d="M679.7 583.5l0 11.8"/><path class="ko" d="M678.9 583.5l0 11.8"/><path class="kh" d="M688.7 594.7l-14 0"/><path class="ke" d="M558.3 457.6l0 11.8"/><path class="kn" d="M556.4 457.6l0 11.8"/><path class="ko" d="M555.5 457.6l0 11.8"/><path class="kh" d="M565.3 468.7l-14 0"/><path class="kby" d="M673.7 564.6l23.1 9.7"/><path class="kbk" d="M674.1 563.6l23.1 9.7"/><path class="kbl" d="M674.3 563.2l23.1 9.7"/><path class="kbu" d="M697.8 570.4l-3.1 7.4"/><path class="kcj" d="M491.7 578.3l15.1 -15.1"/><path class="kck" d="M490.9 577.5l15.1 -15.1"/><path class="kcl" d="M490.6 577.2l15.1 -15.1"/><path class="kh" d="M503.5 560.8l5.7 5.6"/><path class="ke" d="M681.7 572.9l0 11.8"/><path class="kn" d="M679.7 572.9l0 11.8"/><path class="ko" d="M678.9 572.9l0 11.8"/><path class="kh" d="M688.7 584.1l-14 0"/><path class="ke" d="M558.3 447l0 11.8"/><path class="kn" d="M556.4 447l0 11.8"/><path class="ko" d="M555.5 447l0 11.8"/><path class="kh" d="M565.3 458.2l-14 0"/><path class="kbr" d="M704.9 577.7l24.5 10.3"/><path class="kbs" d="M705.3 576.7l24.5 10.3"/><path class="kbt" d="M705.5 576.3l24.5 10.3"/><path class="kbu" d="M730.3 584.3l-3 7"/><path class="kdd" d="M663.6 575.5l15.3 -15.4"/><path class="kde" d="M662.8 574.7l15.3 -15.4"/><path class="kdf" d="M662.5 574.4l15.3 -15.4"/><path class="kdg" d="M675.8 557.9l5.4 5.4"/><path class="kby" d="M695.7 573.9l23.1 9.7"/><path class="kbk" d="M696.1 572.9l23.1 9.7"/><path class="kbl" d="M696.3 572.4l23.1 9.7"/><path class="kbu" d="M719.7 579.7l-3.1 7.4"/><path class="ke" d="M681.7 562.4l0 11.8"/><path class="kn" d="M679.7 562.4l0 11.8"/><path class="ko" d="M678.9 562.4l0 11.8"/><path class="kh" d="M688.7 573.5l-14 0"/><path class="kbv" d="M559.5 425.7l-6.8 1"/><path class="kbw" d="M559.4 424.6l-6.8 1"/><path class="kbx" d="M559.3 424.1l-6.8 1"/><path class="kbi" d="M553.9 430.5l-1.1 -7.9"/><path class="ke" d="M558.3 436.5l0 11.8"/><path class="kn" d="M556.4 436.5l0 11.8"/><path class="ko" d="M555.5 436.5l0 11.8"/><path class="kh" d="M565.3 447.6l-14 0"/><path class="kbv" d="M565 427l-6.6 -1.4"/><path class="kbw" d="M565.2 425.9l-6.6 -1.4"/><path class="kbx" d="M565.3 425.5l-6.6 -1.4"/><path class="kbi" d="M558.1 429.7l1.6 -7.8"/><path class="kcj" d="M477.5 592.6l15.1 -15.1"/><path class="kck" d="M476.7 591.8l15.1 -15.1"/><path class="kcl" d="M476.3 591.5l15.1 -15.1"/><path class="kh" d="M489.3 575.1l5.7 5.6"/><path class="kbv" d="M553.9 426.3l-5.3 3.1"/><path class="kbw" d="M553.3 425.3l-5.3 3.1"/><path class="kbx" d="M553.1 424.9l-5.3 3.1"/><path class="kbi" d="M551.1 432.5l-4.1 -6.9"/><path class="kbr" d="M728.2 587.5l24.5 10.3"/><path class="kbs" d="M728.6 586.5l24.5 10.3"/><path class="kbt" d="M728.8 586.1l24.5 10.3"/><path class="kbu" d="M753.6 594.1l-3 7"/><path class="kby" d="M717.6 583.2l23.1 9.7"/><path class="kbk" d="M718.1 582.1l23.1 9.7"/><path class="kbl" d="M718.2 581.7l23.1 9.7"/><path class="kbu" d="M741.7 589l-3.1 7.4"/><path class="kee" d="M563.8 426.7l23.1 9.7"/><path class="kef" d="M564.3 425.6l23.1 9.7"/><path class="kbh" d="M564.4 425.2l23.1 9.7"/><path class="keg" d="M587.9 432.5l-3.1 7.4"/><path class="ke" d="M681.7 551.8l0 11.8"/><path class="kn" d="M679.7 551.8l0 11.8"/><path class="ko" d="M678.9 551.8l0 11.8"/><path class="kh" d="M688.7 563l-14 0"/><path class="ke" d="M458.7 663.2l0 11.8"/><path class="kn" d="M456.7 663.2l0 11.8"/><path class="ko" d="M455.9 663.2l0 11.8"/><path class="kh" d="M465.7 674.4l-14 0"/><path class="ke" d="M558.3 425.9l0 11.8"/><path class="kn" d="M556.4 425.9l0 11.8"/><path class="ko" d="M555.5 425.9l0 11.8"/><path class="kh" d="M565.3 437.1l-14 0"/><path class="kcw" d="M649.1 590l15.3 -15.4"/><path class="kdc" d="M648.4 589.2l15.3 -15.4"/><path class="kcy" d="M648.1 588.9l15.3 -15.4"/><path class="kab" d="M661.3 572.4l5.4 5.4"/><path class="keh" d="M534.4 443.8l15.1 -15.1"/><path class="kei" d="M533.6 443l15.1 -15.1"/><path class="kej" d="M533.3 442.7l15.1 -15.1"/><path class="kdg" d="M546.3 426.3l5.7 5.6"/><path class="kbr" d="M751.6 597.4l24.5 10.3"/><path class="kbs" d="M752 596.4l24.5 10.3"/><path class="kbt" d="M752.2 596l24.5 10.3"/><path class="kbu" d="M777 603.9l-3 7"/><path class="ke" d="M805 667.2l0 11.8"/><path class="kn" d="M803 667.2l0 11.8"/><path class="ko" d="M802.2 667.2l0 11.8"/><path class="kh" d="M812 678.3l-14 0"/><path class="kby" d="M739.6 592.4l23.1 9.7"/><path class="kbk" d="M740 591.4l23.1 9.7"/><path class="kbl" d="M740.2 590.9l23.1 9.7"/><path class="kbu" d="M763.7 598.2l-3.1 7.4"/><path class="ke" d="M681.7 541.3l0 11.8"/><path class="kn" d="M679.7 541.3l0 11.8"/><path class="ko" d="M678.9 541.3l0 11.8"/><path class="kh" d="M688.7 552.4l-14 0"/><path class="kcj" d="M463.2 606.9l15.1 -15.1"/><path class="kck" d="M462.5 606.1l15.1 -15.1"/><path class="kcl" d="M462.1 605.8l15.1 -15.1"/><path class="kh" d="M475.1 589.3l5.7 5.6"/><path class="kbf" d="M585.8 435.9l23.1 9.7"/><path class="kbg" d="M586.2 434.9l23.1 9.7"/><path class="kbh" d="M586.4 434.5l23.1 9.7"/><path class="kbi" d="M609.9 441.7l-3.1 7.4"/><path class="ke" d="M458.7 652.6l0 11.8"/><path class="kn" d="M456.7 652.6l0 11.8"/><path class="ko" d="M455.9 652.6l0 11.8"/><path class="kh" d="M465.7 663.8l-14 0"/><path class="ke" d="M558.3 415.3l0 11.8"/><path class="kn" d="M556.4 415.3l0 11.8"/><path class="ko" d="M555.5 415.3l0 11.8"/><path class="kh" d="M565.3 426.5l-14 0"/><path class="ke" d="M805 656.6l0 11.8"/><path class="kn" d="M803 656.6l0 11.8"/><path class="ko" d="M802.2 656.6l0 11.8"/><path class="kh" d="M812 667.8l-14 0"/><path class="ke" d="M681.7 530.7l0 11.8"/><path class="kn" d="M679.7 530.7l0 11.8"/><path class="ko" d="M678.9 530.7l0 11.8"/><path class="kh" d="M688.7 541.9l-14 0"/><path class="kbr" d="M774.9 607.2l24.5 10.3"/><path class="kbs" d="M775.3 606.2l24.5 10.3"/><path class="kbt" d="M775.5 605.8l24.5 10.3"/><path class="kbu" d="M800.3 613.8l-3 7"/><path class="ke" d="M458.7 642.1l0 11.8"/><path class="kn" d="M456.7 642.1l0 11.8"/><path class="ko" d="M455.9 642.1l0 11.8"/><path class="kh" d="M465.7 653.2l-14 0"/><path class="ke" d="M558.3 404.8l0 11.8"/><path class="kn" d="M556.4 404.8l0 11.8"/><path class="ko" d="M555.5 404.8l0 11.8"/><path class="kh" d="M565.3 415.9l-14 0"/><path class="kby" d="M761.6 601.7l23.1 9.7"/><path class="kbk" d="M762 600.7l23.1 9.7"/><path class="kbl" d="M762.2 600.2l23.1 9.7"/><path class="kbu" d="M785.6 607.5l-3.1 7.4"/><path class="kcz" d="M634.7 604.5l15.3 -15.4"/><path class="kda" d="M633.9 603.8l15.3 -15.4"/><path class="kdb" d="M633.6 603.4l15.3 -15.4"/><path class="kh" d="M646.9 586.9l5.4 5.4"/><path class="kbf" d="M607.8 445.2l23.1 9.7"/><path class="kbg" d="M608.2 444.2l23.1 9.7"/><path class="kbh" d="M608.4 443.7l23.1 9.7"/><path class="kbi" d="M631.8 451l-3.1 7.4"/><path class="kcg" d="M520.2 458.1l15.1 -15.1"/><path class="kch" d="M519.4 457.3l15.1 -15.1"/><path class="kci" d="M519.1 457l15.1 -15.1"/><path class="kt" d="M532 440.5l5.7 5.6"/><path class="ke" d="M805 646.1l0 11.8"/><path class="kn" d="M803 646.1l0 11.8"/><path class="ko" d="M802.2 646.1l0 11.8"/><path class="kh" d="M812 657.2l-14 0"/><path class="kcj" d="M449 621.2l15.1 -15.1"/><path class="kck" d="M448.2 620.4l15.1 -15.1"/><path class="kcl" d="M447.9 620l15.1 -15.1"/><path class="kh" d="M460.8 603.6l5.7 5.6"/><path class="ke" d="M681.7 520.1l0 11.8"/><path class="kn" d="M679.7 520.1l0 11.8"/><path class="ko" d="M678.9 520.1l0 11.8"/><path class="kh" d="M688.7 531.3l-14 0"/><path class="ke" d="M458.7 631.5l0 11.8"/><path class="kn" d="M456.7 631.5l0 11.8"/><path class="ko" d="M455.9 631.5l0 11.8"/><path class="kh" d="M465.7 642.7l-14 0"/><path class="ke" d="M558.3 394.2l0 11.8"/><path class="kn" d="M556.4 394.2l0 11.8"/><path class="ko" d="M555.5 394.2l0 11.8"/><path class="kh" d="M565.3 405.4l-14 0"/><path class="kbr" d="M798.3 617.1l24.5 10.3"/><path class="kbs" d="M798.7 616.1l24.5 10.3"/><path class="kbt" d="M798.9 615.7l24.5 10.3"/><path class="kbu" d="M823.7 623.6l-3 7"/><path class="kby" d="M783.5 610.9l23.1 9.7"/><path class="kbk" d="M784 609.9l23.1 9.7"/><path class="kbl" d="M784.2 609.5l23.1 9.7"/><path class="kbu" d="M807.6 616.8l-3.1 7.4"/><path class="ken" d="M444.9 606.4l23.4 9.9"/><path class="keo" d="M445.3 605.4l23.4 9.9"/><path class="kep" d="M445.5 605l23.4 9.9"/><path class="keq" d="M469.2 612.5l-3 7"/><path class="kby" d="M629.7 454.5l23.1 9.7"/><path class="kbk" d="M630.2 453.4l23.1 9.7"/><path class="kbl" d="M630.4 453l23.1 9.7"/><path class="kbu" d="M653.8 460.3l-3.1 7.4"/><ellipse cx="928.3" cy="730.3" rx="7.0" ry="4.5" fill="#2a2aae"/><path class="ke" d="M805 635.5l0 11.8"/><path class="kn" d="M803 635.5l0 11.8"/><path class="ko" d="M802.2 635.5l0 11.8"/><path class="kh" d="M812 646.7l-14 0"/><path class="ke" d="M681.7 509.6l0 11.8"/><path class="kn" d="M679.7 509.6l0 11.8"/><path class="ko" d="M678.9 509.6l0 11.8"/><path class="kh" d="M688.7 520.7l-14 0"/><path class="kcz" d="M620.2 619l15.3 -15.4"/><path class="kda" d="M619.5 618.3l15.3 -15.4"/><path class="kdb" d="M619.1 617.9l15.3 -15.4"/><path class="kh" d="M632.4 601.4l5.4 5.4"/><path class="ke" d="M458.7 621l0 11.8"/><path class="kn" d="M456.7 621l0 11.8"/><path class="ko" d="M455.9 621l0 11.8"/><path class="kh" d="M465.7 632.1l-14 0"/><path class="ku" d="M558.3 383.6l0 11.8"/><path class="kv" d="M556.4 383.6l0 11.8"/><path class="kw" d="M555.5 383.6l0 11.8"/><path class="kx" d="M565.3 394.8l-14 0"/><path class="kcj" d="M506 472.4l15.1 -15.1"/><path class="kck" d="M505.2 471.6l15.1 -15.1"/><path class="kcl" d="M504.8 471.2l15.1 -15.1"/><path class="kh" d="M517.8 454.8l5.7 5.6"/><path class="kby" d="M805.5 620.2l23.1 9.7"/><path class="kbk" d="M805.9 619.2l23.1 9.7"/><path class="kbl" d="M806.1 618.7l23.1 9.7"/><path class="kbu" d="M829.6 626l-3.1 7.4"/><path class="kdk" d="M467.2 615.8l23.4 9.9"/><path class="kdl" d="M467.6 614.8l23.4 9.9"/><path class="kdm" d="M467.8 614.4l23.4 9.9"/><path class="kbi" d="M491.6 621.9l-3 7"/><path class="kby" d="M651.7 463.7l23.1 9.7"/><path class="kbk" d="M652.1 462.7l23.1 9.7"/><path class="kbl" d="M652.3 462.2l23.1 9.7"/><path class="kbu" d="M675.8 469.5l-3.1 7.4"/><path class="kcj" d="M434.8 635.5l15.1 -15.1"/><path class="kck" d="M434 634.7l15.1 -15.1"/><path class="kcl" d="M433.6 634.3l15.1 -15.1"/><path class="kh" d="M446.6 617.9l5.7 5.6"/><path class="ke" d="M805 624.9l0 11.8"/><path class="kn" d="M803 624.9l0 11.8"/><path class="ko" d="M802.2 624.9l0 11.8"/><path class="kh" d="M812 636.1l-14 0"/><path class="ke" d="M681.7 499l0 11.8"/><path class="kn" d="M679.7 499l0 11.8"/><path class="ko" d="M678.9 499l0 11.8"/><path class="kh" d="M688.7 510.2l-14 0"/><path class="ke" d="M458.7 610.4l0 11.8"/><path class="kn" d="M456.7 610.4l0 11.8"/><path class="ko" d="M455.9 610.4l0 11.8"/><path class="kh" d="M465.7 621.6l-14 0"/><path class="ku" d="M558.3 373.1l0 11.8"/><path class="kv" d="M556.4 373.1l0 11.8"/><path class="kw" d="M555.5 373.1l0 11.8"/><path class="kx" d="M565.3 384.2l-14 0"/><path class="kbr" d="M681.5 476.2l24.5 10.3"/><path class="kbs" d="M681.9 475.2l24.5 10.3"/><path class="kbt" d="M682.1 474.8l24.5 10.3"/><path class="kbu" d="M706.9 482.8l-3 7"/><path class="kby" d="M827.5 629.5l23.1 9.7"/><path class="kbk" d="M827.9 628.4l23.1 9.7"/><path class="kbl" d="M828.1 628l23.1 9.7"/><path class="kbu" d="M851.6 635.3l-3.1 7.4"/><path class="ke" d="M805 614.4l0 11.8"/><path class="kn" d="M803 614.4l0 11.8"/><path class="ko" d="M802.2 614.4l0 11.8"/><path class="kh" d="M812 625.5l-14 0"/><path class="kdk" d="M489.5 625.2l23.4 9.9"/><path class="kdl" d="M489.9 624.2l23.4 9.9"/><path class="kdm" d="M490.1 623.8l23.4 9.9"/><path class="kbi" d="M513.9 631.3l-3 7"/><path class="kby" d="M673.7 473l23.1 9.7"/><path class="kbk" d="M674.1 471.9l23.1 9.7"/><path class="kbl" d="M674.3 471.5l23.1 9.7"/><path class="kbu" d="M697.8 478.8l-3.1 7.4"/><path class="kcz" d="M605.7 633.5l15.3 -15.4"/><path class="kda" d="M605 632.8l15.3 -15.4"/><path class="kdb" d="M604.7 632.5l15.3 -15.4"/><path class="kh" d="M617.9 615.9l5.4 5.4"/><path class="ke" d="M681.7 488.5l0 11.8"/><path class="kn" d="M679.7 488.5l0 11.8"/><path class="ko" d="M678.9 488.5l0 11.8"/><path class="kh" d="M688.7 499.6l-14 0"/><path class="kcj" d="M491.7 486.7l15.1 -15.1"/><path class="kck" d="M490.9 485.9l15.1 -15.1"/><path class="kcl" d="M490.6 485.5l15.1 -15.1"/><path class="kh" d="M503.5 469.1l5.7 5.6"/><path class="ke" d="M458.7 599.8l0 11.8"/><path class="kn" d="M456.7 599.8l0 11.8"/><path class="ko" d="M455.9 599.8l0 11.8"/><path class="kh" d="M465.7 611l-14 0"/><path class="ku" d="M558.3 362.5l0 11.8"/><path class="kv" d="M556.4 362.5l0 11.8"/><path class="kw" d="M555.5 362.5l0 11.8"/><path class="kx" d="M565.3 373.7l-14 0"/><path class="kdd" d="M805.4 635.3l15.3 -15.4"/><path class="kde" d="M804.6 634.5l15.3 -15.4"/><path class="kdf" d="M804.3 634.2l15.3 -15.4"/><path class="kdg" d="M817.6 617.6l5.4 5.4"/><path class="kcj" d="M420.5 649.7l15.1 -15.1"/><path class="kck" d="M419.7 649l15.1 -15.1"/><path class="kcl" d="M419.4 648.6l15.1 -15.1"/><path class="kh" d="M432.4 632.2l5.7 5.6"/><path class="ke" d="M805 603.8l0 11.8"/><path class="kn" d="M803 603.8l0 11.8"/><path class="ko" d="M802.2 603.8l0 11.8"/><path class="kh" d="M812 615l-14 0"/><path class="kbr" d="M704.9 486l24.5 10.3"/><path class="kbs" d="M705.3 485l24.5 10.3"/><path class="kbt" d="M705.5 484.6l24.5 10.3"/><path class="kbu" d="M730.3 492.6l-3 7"/><path class="ke" d="M681.7 477.9l0 11.8"/><path class="kn" d="M679.7 477.9l0 11.8"/><path class="ko" d="M678.9 477.9l0 11.8"/><path class="kh" d="M688.7 489.1l-14 0"/><path class="kbf" d="M849.5 638.7l23.1 9.7"/><path class="kbg" d="M849.9 637.7l23.1 9.7"/><path class="kbh" d="M850.1 637.3l23.1 9.7"/><path class="kbi" d="M873.5 644.5l-3.1 7.4"/><path class="kdd" d="M663.6 483.8l15.3 -15.4"/><path class="kde" d="M662.8 483.1l15.3 -15.4"/><path class="kdf" d="M662.5 482.8l15.3 -15.4"/><path class="kdg" d="M675.8 466.2l5.4 5.4"/><path class="ke" d="M458.7 589.3l0 11.8"/><path class="kn" d="M456.7 589.3l0 11.8"/><path class="ko" d="M455.9 589.3l0 11.8"/><path class="kh" d="M465.7 600.4l-14 0"/><path class="ku" d="M558.3 352l0 11.8"/><path class="kv" d="M556.4 352l0 11.8"/><path class="kw" d="M555.5 352l0 11.8"/><path class="kx" d="M565.3 363.1l-14 0"/><path class="kby" d="M695.7 482.2l23.1 9.7"/><path class="kbk" d="M696.1 481.2l23.1 9.7"/><path class="kbl" d="M696.3 480.8l23.1 9.7"/><path class="kbu" d="M719.7 488.1l-3.1 7.4"/><path class="kdn" d="M511.8 634.6l23.4 9.9"/><path class="kdo" d="M512.3 633.6l23.4 9.9"/><path class="kdp" d="M512.4 633.2l23.4 9.9"/><path class="kbm" d="M536.2 640.8l-3 7"/><path class="kag" d="M928.3 719.2l0 11.8"/><path class="kah" d="M926.4 719.2l0 11.8"/><path class="kai" d="M925.5 719.2l0 11.8"/><path class="kaj" d="M935.3 730.3l-14 0"/><path class="kbv" d="M559.5 334l-6.8 1"/><path class="kbw" d="M559.4 332.9l-6.8 1"/><path class="kbx" d="M559.3 332.4l-6.8 1"/><path class="kbi" d="M553.9 338.9l-1.1 -7.9"/><path class="kbv" d="M565 335.4l-6.6 -1.4"/><path class="kbw" d="M565.2 334.3l-6.6 -1.4"/><path class="kbx" d="M565.3 333.8l-6.6 -1.4"/><path class="kbi" d="M558.1 338l1.6 -7.8"/><path class="ke" d="M805 593.3l0 11.8"/><path class="kn" d="M803 593.3l0 11.8"/><path class="ko" d="M802.2 593.3l0 11.8"/><path class="kh" d="M812 604.4l-14 0"/><path class="kcz" d="M591.3 648l15.3 -15.4"/><path class="kda" d="M590.5 647.3l15.3 -15.4"/><path class="kdb" d="M590.2 647l15.3 -15.4"/><path class="kh" d="M603.5 630.4l5.4 5.4"/><path class="kcj" d="M477.5 500.9l15.1 -15.1"/><path class="kck" d="M476.7 500.2l15.1 -15.1"/><path class="kcl" d="M476.3 499.8l15.1 -15.1"/><path class="kh" d="M489.3 483.4l5.7 5.6"/><path class="ke" d="M681.7 467.3l0 11.8"/><path class="kn" d="M679.7 467.3l0 11.8"/><path class="ko" d="M678.9 467.3l0 11.8"/><path class="kh" d="M688.7 478.5l-14 0"/><path class="kbv" d="M553.9 334.6l-5.3 3.1"/><path class="kbw" d="M553.3 333.6l-5.3 3.1"/><path class="kbx" d="M553.1 333.2l-5.3 3.1"/><path class="kbi" d="M551.1 340.9l-4.1 -6.9"/><path class="ke" d="M458.7 578.7l0 11.8"/><path class="kn" d="M456.7 578.7l0 11.8"/><path class="ko" d="M455.9 578.7l0 11.8"/><path class="kh" d="M465.7 589.9l-14 0"/><path class="ku" d="M558.3 341.4l0 11.8"/><path class="kv" d="M556.4 341.4l0 11.8"/><path class="kw" d="M555.5 341.4l0 11.8"/><path class="kx" d="M565.3 352.6l-14 0"/><path class="kbr" d="M728.2 495.9l24.5 10.3"/><path class="kbs" d="M728.6 494.9l24.5 10.3"/><path class="kbt" d="M728.8 494.5l24.5 10.3"/><path class="kbu" d="M753.6 502.4l-3 7"/><path class="kcw" d="M790.9 649.8l15.3 -15.4"/><path class="kdc" d="M790.2 649l15.3 -15.4"/><path class="kcy" d="M789.8 648.7l15.3 -15.4"/><path class="kab" d="M803.1 632.2l5.4 5.4"/><path class="kbf" d="M871.4 648l23.1 9.7"/><path class="kbg" d="M871.9 647l23.1 9.7"/><path class="kbh" d="M872 646.5l23.1 9.7"/><path class="kbi" d="M895.5 653.8l-3.1 7.4"/><path class="kby" d="M717.6 491.5l23.1 9.7"/><path class="kbk" d="M718.1 490.5l23.1 9.7"/><path class="kbl" d="M718.2 490l23.1 9.7"/><path class="kbu" d="M741.7 497.3l-3.1 7.4"/><path class="kdn" d="M534.2 644l23.4 9.9"/><path class="kdo" d="M534.6 643l23.4 9.9"/><path class="kdp" d="M534.8 642.6l23.4 9.9"/><path class="kbm" d="M558.5 650.2l-3 7"/><path class="kcj" d="M406.3 664l15.1 -15.1"/><path class="kck" d="M405.5 663.2l15.1 -15.1"/><path class="kcl" d="M405.2 662.9l15.1 -15.1"/><path class="kh" d="M418.1 646.5l5.7 5.6"/><path class="kbc" d="M563.8 335l23.1 9.7"/><path class="kbd" d="M564.3 334l23.1 9.7"/><path class="kbe" d="M564.4 333.5l23.1 9.7"/><path class="kaj" d="M587.9 340.8l-3.1 7.4"/><path class="kag" d="M928.3 708.6l0 11.8"/><path class="kah" d="M926.4 708.6l0 11.8"/><path class="kai" d="M925.5 708.6l0 11.8"/><path class="kaj" d="M935.3 719.8l-14 0"/><path class="ke" d="M805 582.7l0 11.8"/><path class="kn" d="M803 582.7l0 11.8"/><path class="ko" d="M802.2 582.7l0 11.8"/><path class="kh" d="M812 593.9l-14 0"/><path class="kcw" d="M649.1 498.3l15.3 -15.4"/><path class="kdc" d="M648.4 497.6l15.3 -15.4"/><path class="kcy" d="M648.1 497.3l15.3 -15.4"/><path class="kab" d="M661.3 480.7l5.4 5.4"/><path class="ke" d="M681.7 456.8l0 11.8"/><path class="kn" d="M679.7 456.8l0 11.8"/><path class="ko" d="M678.9 456.8l0 11.8"/><path class="kh" d="M688.7 467.9l-14 0"/><path class="kcd" d="M534.4 352.1l15.1 -15.1"/><path class="kce" d="M533.6 351.4l15.1 -15.1"/><path class="kcf" d="M533.3 351l15.1 -15.1"/><path class="kaj" d="M546.3 334.6l5.7 5.6"/><path class="ke" d="M458.7 568.1l0 11.8"/><path class="kn" d="M456.7 568.1l0 11.8"/><path class="ko" d="M455.9 568.1l0 11.8"/><path class="kh" d="M465.7 579.3l-14 0"/><path class="ku" d="M558.3 330.8l0 11.8"/><path class="kv" d="M556.4 330.8l0 11.8"/><path class="kw" d="M555.5 330.8l0 11.8"/><path class="kx" d="M565.3 342l-14 0"/><ellipse cx="359.0" cy="774.4" rx="7.0" ry="4.5" fill="#72728a"/><path class="kbr" d="M751.6 505.7l24.5 10.3"/><path class="kbs" d="M752 504.7l24.5 10.3"/><path class="kbt" d="M752.2 504.3l24.5 10.3"/><path class="kbu" d="M777 512.3l-3 7"/><path class="kee" d="M893.4 657.3l23.1 9.7"/><path class="kef" d="M893.8 656.2l23.1 9.7"/><path class="kbh" d="M894 655.8l23.1 9.7"/><path class="keg" d="M917.5 663.1l-3.1 7.4"/><path class="kby" d="M739.6 500.8l23.1 9.7"/><path class="kbk" d="M740 499.7l23.1 9.7"/><path class="kbl" d="M740.2 499.3l23.1 9.7"/><path class="kbu" d="M763.7 506.6l-3.1 7.4"/><path class="kdn" d="M556.5 653.4l23.4 9.9"/><path class="kdo" d="M556.9 652.5l23.4 9.9"/><path class="kdp" d="M557.1 652l23.4 9.9"/><path class="kbm" d="M580.9 659.6l-3 7"/><path class="km" d="M928.3 698.1l0 11.8"/><path class="kz" d="M926.4 698.1l0 11.8"/><path class="kaf" d="M925.5 698.1l0 11.8"/><path class="kab" d="M935.3 709.2l-14 0"/><path class="kcj" d="M463.2 515.2l15.1 -15.1"/><path class="kck" d="M462.5 514.4l15.1 -15.1"/><path class="kcl" d="M462.1 514.1l15.1 -15.1"/><path class="kh" d="M475.1 497.7l5.7 5.6"/><path class="kcz" d="M576.8 662.6l15.3 -15.4"/><path class="kda" d="M576.1 661.8l15.3 -15.4"/><path class="kdb" d="M575.7 661.5l15.3 -15.4"/><path class="kh" d="M589 644.9l5.4 5.4"/><path class="kbf" d="M585.8 344.3l23.1 9.7"/><path class="kbg" d="M586.2 343.2l23.1 9.7"/><path class="kbh" d="M586.4 342.8l23.1 9.7"/><path class="kbi" d="M609.9 350.1l-3.1 7.4"/><path class="ke" d="M805 572.1l0 11.8"/><path class="kn" d="M803 572.1l0 11.8"/><path class="ko" d="M802.2 572.1l0 11.8"/><path class="kh" d="M812 583.3l-14 0"/><path class="ke" d="M681.7 446.2l0 11.8"/><path class="kn" d="M679.7 446.2l0 11.8"/><path class="ko" d="M678.9 446.2l0 11.8"/><path class="kh" d="M688.7 457.4l-14 0"/><path class="kcz" d="M776.5 664.3l15.3 -15.4"/><path class="kda" d="M775.7 663.5l15.3 -15.4"/><path class="kdb" d="M775.4 663.2l15.3 -15.4"/><path class="kh" d="M788.7 646.7l5.4 5.4"/><path class="ke" d="M458.7 557.6l0 11.8"/><path class="kn" d="M456.7 557.6l0 11.8"/><path class="ko" d="M455.9 557.6l0 11.8"/><path class="kh" d="M465.7 568.7l-14 0"/><path class="ke" d="M558.3 320.3l0 11.8"/><path class="kf" d="M556.4 320.3l0 11.8"/><path class="ko" d="M555.5 320.3l0 11.8"/><path class="kh" d="M565.3 331.4l-14 0"/><path class="kbv" d="M920.2 669.9l-4.8 -3.5"/><path class="kbw" d="M920.9 669l-4.8 -3.5"/><path class="kbx" d="M921.1 668.6l-4.8 -3.5"/><path class="kbi" d="M913.6 670l4.7 -6.5"/><path class="kcj" d="M392.1 678.3l15.1 -15.1"/><path class="kck" d="M391.3 677.5l15.1 -15.1"/><path class="kcl" d="M390.9 677.2l15.1 -15.1"/><path class="kh" d="M403.9 660.8l5.7 5.6"/><path class="kbv" d="M921.1 673.7l-1.5 -4.8"/><path class="kbw" d="M922.1 673.4l-1.5 -4.8"/><path class="kbx" d="M922.6 673.3l-1.5 -4.8"/><path class="kbi" d="M915.9 670.7l7.6 -2.4"/><path class="km" d="M928.3 687.5l0 11.8"/><path class="kz" d="M926.4 687.5l0 11.8"/><path class="kaf" d="M925.5 687.5l0 11.8"/><path class="kab" d="M935.3 698.7l-14 0"/><path class="kbr" d="M774.9 515.6l24.5 10.3"/><path class="kbs" d="M775.3 514.6l24.5 10.3"/><path class="kbt" d="M775.5 514.2l24.5 10.3"/><path class="kbu" d="M800.3 522.1l-3 7"/><path class="kby" d="M761.6 510l23.1 9.7"/><path class="kbk" d="M762 509l23.1 9.7"/><path class="kbl" d="M762.2 508.6l23.1 9.7"/><path class="kbu" d="M785.6 515.8l-3.1 7.4"/><path class="ke" d="M805 561.6l0 11.8"/><path class="kn" d="M803 561.6l0 11.8"/><path class="ko" d="M802.2 561.6l0 11.8"/><path class="kh" d="M812 572.7l-14 0"/><path class="kcz" d="M634.7 512.9l15.3 -15.4"/><path class="kda" d="M633.9 512.1l15.3 -15.4"/><path class="kdb" d="M633.6 511.8l15.3 -15.4"/><path class="kh" d="M646.9 495.2l5.4 5.4"/><path class="kdn" d="M578.8 662.8l23.4 9.9"/><path class="kdo" d="M579.2 661.9l23.4 9.9"/><path class="kdp" d="M579.4 661.4l23.4 9.9"/><path class="kbm" d="M603.2 669l-3 7"/><path class="kbf" d="M607.8 353.5l23.1 9.7"/><path class="kbg" d="M608.2 352.5l23.1 9.7"/><path class="kbh" d="M608.4 352.1l23.1 9.7"/><path class="kbi" d="M631.8 359.3l-3.1 7.4"/><path class="kcg" d="M520.2 366.4l15.1 -15.1"/><path class="kch" d="M519.4 365.6l15.1 -15.1"/><path class="kci" d="M519.1 365.3l15.1 -15.1"/><path class="kt" d="M532 348.9l5.7 5.6"/><path class="ke" d="M681.7 435.6l0 11.8"/><path class="kn" d="M679.7 435.6l0 11.8"/><path class="ko" d="M678.9 435.6l0 11.8"/><path class="kh" d="M688.7 446.8l-14 0"/><path class="kbv" d="M559.5 299.1l-6.8 1"/><path class="kbw" d="M559.4 298l-6.8 1"/><path class="kbx" d="M559.3 297.5l-6.8 1"/><path class="kbi" d="M553.9 304l-1.1 -7.9"/><path class="ke" d="M458.7 547l0 11.8"/><path class="kn" d="M456.7 547l0 11.8"/><path class="ko" d="M455.9 547l0 11.8"/><path class="kh" d="M465.7 558.2l-14 0"/><path class="ke" d="M558.3 309.7l0 11.8"/><path class="kf" d="M556.4 309.7l0 11.8"/><path class="ko" d="M555.5 309.7l0 11.8"/><path class="kh" d="M565.3 320.9l-14 0"/><path class="kbv" d="M565 300.5l-6.6 -1.4"/><path class="kbw" d="M565.2 299.4l-6.6 -1.4"/><path class="kbx" d="M565.3 298.9l-6.6 -1.4"/><path class="kbi" d="M558.1 303.1l1.6 -7.8"/><path class="kbv" d="M918.8 677.3l2.3 -4.6"/><path class="kbw" d="M917.8 676.8l2.3 -4.6"/><path class="kbx" d="M917.4 676.5l2.3 -4.6"/><path class="kbi" d="M917.3 671.4l7.1 3.6"/><path class="kbv" d="M553.9 299.7l-5.3 3.1"/><path class="kbw" d="M553.3 298.7l-5.3 3.1"/><path class="kbx" d="M553.1 298.3l-5.3 3.1"/><path class="kbi" d="M551.1 306l-4.1 -6.9"/><path class="kcj" d="M449 529.5l15.1 -15.1"/><path class="kck" d="M448.2 528.7l15.1 -15.1"/><path class="kcl" d="M447.9 528.4l15.1 -15.1"/><path class="kh" d="M460.8 512l5.7 5.6"/><path class="kcz" d="M562.4 677.1l15.3 -15.4"/><path class="kda" d="M561.6 676.3l15.3 -15.4"/><path class="kdb" d="M561.3 676l15.3 -15.4"/><path class="kh" d="M574.6 659.5l5.4 5.4"/><path class="km" d="M928.3 676.9l0 11.8"/><path class="kz" d="M926.4 676.9l0 11.8"/><path class="kaf" d="M925.5 676.9l0 11.8"/><path class="kab" d="M935.3 688.1l-14 0"/><path class="kbc" d="M563.8 300.1l23.1 9.7"/><path class="kbd" d="M564.3 299.1l23.1 9.7"/><path class="kbe" d="M564.4 298.6l23.1 9.7"/><path class="kaj" d="M587.9 305.9l-3.1 7.4"/><path class="ke" d="M805 551l0 11.8"/><path class="kn" d="M803 551l0 11.8"/><path class="ko" d="M802.2 551l0 11.8"/><path class="kh" d="M812 562.2l-14 0"/><path class="kcz" d="M762 678.8l15.3 -15.4"/><path class="kda" d="M761.2 678l15.3 -15.4"/><path class="kdb" d="M760.9 677.7l15.3 -15.4"/><path class="kh" d="M774.2 661.2l5.4 5.4"/><path class="ke" d="M681.7 425.1l0 11.8"/><path class="kn" d="M679.7 425.1l0 11.8"/><path class="ko" d="M678.9 425.1l0 11.8"/><path class="kh" d="M688.7 436.2l-14 0"/><path class="kbr" d="M798.3 525.4l24.5 10.3"/><path class="kbs" d="M798.7 524.4l24.5 10.3"/><path class="kbt" d="M798.9 524l24.5 10.3"/><path class="kbu" d="M823.7 532l-3 7"/><path class="kby" d="M783.5 519.3l23.1 9.7"/><path class="kbk" d="M784 518.3l23.1 9.7"/><path class="kbl" d="M784.2 517.8l23.1 9.7"/><path class="kbu" d="M807.6 525.1l-3.1 7.4"/><path class="ke" d="M458.7 536.5l0 11.8"/><path class="kn" d="M456.7 536.5l0 11.8"/><path class="ko" d="M455.9 536.5l0 11.8"/><path class="kh" d="M465.7 547.6l-14 0"/><path class="ken" d="M444.9 514.7l23.4 9.9"/><path class="keo" d="M445.3 513.7l23.4 9.9"/><path class="kep" d="M445.5 513.3l23.4 9.9"/><path class="keq" d="M469.2 520.9l-3 7"/><path class="kdn" d="M601.2 672.3l23.4 9.9"/><path class="kdo" d="M601.6 671.3l23.4 9.9"/><path class="kdp" d="M601.7 670.9l23.4 9.9"/><path class="kbm" d="M625.5 678.4l-3 7"/><path class="ke" d="M558.3 299.2l0 11.8"/><path class="kf" d="M556.4 299.2l0 11.8"/><path class="ko" d="M555.5 299.2l0 11.8"/><path class="kh" d="M565.3 310.3l-14 0"/><path class="kcj" d="M377.8 692.6l15.1 -15.1"/><path class="kck" d="M377 691.8l15.1 -15.1"/><path class="kcl" d="M376.7 691.5l15.1 -15.1"/><path class="kh" d="M389.7 675.1l5.7 5.6"/><path class="kby" d="M629.7 362.8l23.1 9.7"/><path class="kbk" d="M630.2 361.8l23.1 9.7"/><path class="kbl" d="M630.4 361.3l23.1 9.7"/><path class="kbu" d="M653.8 368.6l-3.1 7.4"/><path class="kcm" d="M904.4 691.4l15.1 -15.1"/><path class="kcn" d="M903.6 690.6l15.1 -15.1"/><path class="kco" d="M903.3 690.3l15.1 -15.1"/><path class="kh" d="M916.3 673.9l5.7 5.6"/><path class="kcd" d="M534.4 317.2l15.1 -15.1"/><path class="kce" d="M533.6 316.4l15.1 -15.1"/><path class="kcf" d="M533.3 316.1l15.1 -15.1"/><path class="kaj" d="M546.3 299.7l5.7 5.6"/><path class="km" d="M928.3 666.4l0 11.8"/><path class="kz" d="M926.4 666.4l0 11.8"/><path class="kaf" d="M925.5 666.4l0 11.8"/><path class="kab" d="M935.3 677.5l-14 0"/><path class="kcz" d="M620.2 527.4l15.3 -15.4"/><path class="kda" d="M619.5 526.6l15.3 -15.4"/><path class="kdb" d="M619.1 526.3l15.3 -15.4"/><path class="kh" d="M632.4 509.7l5.4 5.4"/><path class="kcj" d="M506 380.7l15.1 -15.1"/><path class="kck" d="M505.2 379.9l15.1 -15.1"/><path class="kcl" d="M504.8 379.6l15.1 -15.1"/><path class="kh" d="M517.8 363.2l5.7 5.6"/><path class="ke" d="M805 540.4l0 11.8"/><path class="kn" d="M803 540.4l0 11.8"/><path class="ko" d="M802.2 540.4l0 11.8"/><path class="kh" d="M812 551.6l-14 0"/><path class="ke" d="M681.7 414.5l0 11.8"/><path class="kn" d="M679.7 414.5l0 11.8"/><path class="ko" d="M678.9 414.5l0 11.8"/><path class="kh" d="M688.7 425.7l-14 0"/><path class="kbf" d="M585.8 309.4l23.1 9.7"/><path class="kbg" d="M586.2 308.3l23.1 9.7"/><path class="kbh" d="M586.4 307.9l23.1 9.7"/><path class="kbi" d="M609.9 315.2l-3.1 7.4"/><path class="km" d="M359 763.2l0 11.8"/><path class="kn" d="M357 763.2l0 11.8"/><path class="ko" d="M356.2 763.2l0 11.8"/><path class="kp" d="M366 774.4l-14 0"/><path class="ke" d="M458.7 525.9l0 11.8"/><path class="kn" d="M456.7 525.9l0 11.8"/><path class="ko" d="M455.9 525.9l0 11.8"/><path class="kh" d="M465.7 537.1l-14 0"/><path class="ke" d="M558.3 288.6l0 11.8"/><path class="kf" d="M556.4 288.6l0 11.8"/><path class="ko" d="M555.5 288.6l0 11.8"/><path class="kh" d="M565.3 299.8l-14 0"/><path class="kby" d="M805.5 528.6l23.1 9.7"/><path class="kbk" d="M805.9 527.5l23.1 9.7"/><path class="kbl" d="M806.1 527.1l23.1 9.7"/><path class="kbu" d="M829.6 534.4l-3.1 7.4"/><path class="kdk" d="M467.2 524.1l23.4 9.9"/><path class="kdl" d="M467.6 523.1l23.4 9.9"/><path class="kdm" d="M467.8 522.7l23.4 9.9"/><path class="kbi" d="M491.6 530.3l-3 7"/><path class="kdn" d="M623.5 681.7l23.4 9.9"/><path class="kdo" d="M623.9 680.7l23.4 9.9"/><path class="kdp" d="M624.1 680.3l23.4 9.9"/><path class="kbm" d="M647.8 687.8l-3 7"/><path class="kby" d="M651.7 372.1l23.1 9.7"/><path class="kbk" d="M652.1 371l23.1 9.7"/><path class="kbl" d="M652.3 370.6l23.1 9.7"/><path class="kbu" d="M675.8 377.9l-3.1 7.4"/><path class="kcj" d="M434.8 543.8l15.1 -15.1"/><path class="kck" d="M434 543l15.1 -15.1"/><path class="kcl" d="M433.6 542.7l15.1 -15.1"/><path class="kh" d="M446.6 526.3l5.7 5.6"/><path class="kcz" d="M547.9 691.6l15.3 -15.4"/><path class="kda" d="M547.1 690.8l15.3 -15.4"/><path class="kdb" d="M546.8 690.5l15.3 -15.4"/><path class="kh" d="M560.1 674l5.4 5.4"/><path class="km" d="M928.3 655.8l0 11.8"/><path class="kz" d="M926.4 655.8l0 11.8"/><path class="kaf" d="M925.5 655.8l0 11.8"/><path class="kab" d="M935.3 667l-14 0"/><path class="kcz" d="M747.5 693.3l15.3 -15.4"/><path class="kda" d="M746.8 692.6l15.3 -15.4"/><path class="kdb" d="M746.5 692.2l15.3 -15.4"/><path class="kh" d="M759.7 675.7l5.4 5.4"/><path class="ke" d="M805 529.9l0 11.8"/><path class="kn" d="M803 529.9l0 11.8"/><path class="ko" d="M802.2 529.9l0 11.8"/><path class="kh" d="M812 541l-14 0"/><path class="kq" d="M681.7 404l0 11.8"/><path class="kac" d="M679.7 404l0 11.8"/><path class="kad" d="M678.9 404l0 11.8"/><path class="kae" d="M688.7 415.1l-14 0"/><path class="kcg" d="M363.6 706.9l15.1 -15.1"/><path class="kch" d="M362.8 706.1l15.1 -15.1"/><path class="kci" d="M362.5 705.8l15.1 -15.1"/><path class="kt" d="M375.4 689.4l5.7 5.6"/><path class="km" d="M359 752.6l0 11.8"/><path class="kn" d="M357 752.6l0 11.8"/><path class="ko" d="M356.2 752.6l0 11.8"/><path class="kp" d="M366 763.8l-14 0"/><path class="ke" d="M458.7 515.3l0 11.8"/><path class="kn" d="M456.7 515.3l0 11.8"/><path class="ko" d="M455.9 515.3l0 11.8"/><path class="kh" d="M465.7 526.5l-14 0"/><path class="ka" d="M558.3 278l0 11.8"/><path class="kb" d="M556.4 278l0 11.8"/><path class="kc" d="M555.5 278l0 11.8"/><path class="kd" d="M565.3 289.2l-14 0"/><path class="kcj" d="M890.2 705.7l15.1 -15.1"/><path class="kcs" d="M889.4 704.9l15.1 -15.1"/><path class="kcl" d="M889.1 704.6l15.1 -15.1"/><path class="kh" d="M902 688.2l5.7 5.6"/><path class="kbr" d="M681.5 384.5l24.5 10.3"/><path class="kbs" d="M681.9 383.5l24.5 10.3"/><path class="kbt" d="M682.1 383.1l24.5 10.3"/><path class="kbu" d="M706.9 391.1l-3 7"/><path class="kbf" d="M607.8 318.6l23.1 9.7"/><path class="kbg" d="M608.2 317.6l23.1 9.7"/><path class="kbh" d="M608.4 317.2l23.1 9.7"/><path class="kbi" d="M631.8 324.4l-3.1 7.4"/><path class="kcg" d="M520.2 331.5l15.1 -15.1"/><path class="kch" d="M519.4 330.7l15.1 -15.1"/><path class="kci" d="M519.1 330.4l15.1 -15.1"/><path class="kt" d="M532 314l5.7 5.6"/><path class="kbv" d="M559.5 264.2l-6.8 1"/><path class="kbw" d="M559.4 263.1l-6.8 1"/><path class="kbx" d="M559.3 262.6l-6.8 1"/><path class="kbi" d="M553.9 269.1l-1.1 -7.9"/><path class="kbv" d="M565 265.6l-6.6 -1.4"/><path class="kbw" d="M565.2 264.5l-6.6 -1.4"/><path class="kbx" d="M565.3 264l-6.6 -1.4"/><path class="kbi" d="M558.1 268.2l1.6 -7.8"/><path class="kby" d="M827.5 537.8l23.1 9.7"/><path class="kbk" d="M827.9 536.8l23.1 9.7"/><path class="kbl" d="M828.1 536.3l23.1 9.7"/><path class="kbu" d="M851.6 543.6l-3.1 7.4"/><path class="kdk" d="M489.5 533.5l23.4 9.9"/><path class="kdl" d="M489.9 532.6l23.4 9.9"/><path class="kdm" d="M490.1 532.1l23.4 9.9"/><path class="kbi" d="M513.9 539.7l-3 7"/><path class="kdn" d="M645.8 691.1l23.4 9.9"/><path class="kdo" d="M646.2 690.1l23.4 9.9"/><path class="kdp" d="M646.4 689.7l23.4 9.9"/><path class="kbm" d="M670.2 697.2l-3 7"/><path class="kby" d="M673.7 381.3l23.1 9.7"/><path class="kbk" d="M674.1 380.3l23.1 9.7"/><path class="kbl" d="M674.3 379.8l23.1 9.7"/><path class="kbu" d="M697.8 387.1l-3.1 7.4"/><path class="kcz" d="M605.7 541.9l15.3 -15.4"/><path class="kda" d="M605 541.1l15.3 -15.4"/><path class="kdb" d="M604.7 540.8l15.3 -15.4"/><path class="kh" d="M617.9 524.3l5.4 5.4"/><path class="kbv" d="M553.9 264.8l-5.3 3.1"/><path class="kbw" d="M553.3 263.8l-5.3 3.1"/><path class="kbx" d="M553.1 263.4l-5.3 3.1"/><path class="kbi" d="M551.1 271.1l-4.1 -6.9"/><path class="kcj" d="M491.7 395l15.1 -15.1"/><path class="kck" d="M490.9 394.2l15.1 -15.1"/><path class="kcl" d="M490.6 393.9l15.1 -15.1"/><path class="kh" d="M503.5 377.5l5.7 5.6"/><path class="km" d="M928.3 645.2l0 11.8"/><path class="kz" d="M926.4 645.2l0 11.8"/><path class="kaf" d="M925.5 645.2l0 11.8"/><path class="kab" d="M935.3 656.4l-14 0"/><path class="ke" d="M805 519.3l0 11.8"/><path class="kn" d="M803 519.3l0 11.8"/><path class="ko" d="M802.2 519.3l0 11.8"/><path class="kh" d="M812 530.5l-14 0"/><path class="kdd" d="M805.4 543.6l15.3 -15.4"/><path class="kde" d="M804.6 542.9l15.3 -15.4"/><path class="kdf" d="M804.3 542.5l15.3 -15.4"/><path class="kdg" d="M817.6 526l5.4 5.4"/><path class="kq" d="M681.7 393.4l0 11.8"/><path class="kac" d="M679.7 393.4l0 11.8"/><path class="kad" d="M678.9 393.4l0 11.8"/><path class="kae" d="M688.7 404.6l-14 0"/><path class="km" d="M359 742.1l0 11.8"/><path class="kn" d="M357 742.1l0 11.8"/><path class="ko" d="M356.2 742.1l0 11.8"/><path class="kp" d="M366 753.2l-14 0"/><path class="ke" d="M458.7 504.8l0 11.8"/><path class="kn" d="M456.7 504.8l0 11.8"/><path class="ko" d="M455.9 504.8l0 11.8"/><path class="kh" d="M465.7 515.9l-14 0"/><path class="kbc" d="M563.8 265.2l23.1 9.7"/><path class="kbd" d="M564.3 264.2l23.1 9.7"/><path class="kbe" d="M564.4 263.7l23.1 9.7"/><path class="kaj" d="M587.9 271l-3.1 7.4"/><path class="ka" d="M558.3 267.5l0 11.8"/><path class="kb" d="M556.4 267.5l0 11.8"/><path class="kc" d="M555.5 267.5l0 11.8"/><path class="kd" d="M565.3 278.6l-14 0"/><path class="kcj" d="M420.5 558.1l15.1 -15.1"/><path class="kck" d="M419.7 557.3l15.1 -15.1"/><path class="kcl" d="M419.4 557l15.1 -15.1"/><path class="kh" d="M432.4 540.6l5.7 5.6"/><path class="kcz" d="M533.4 706.1l15.3 -15.4"/><path class="kda" d="M532.7 705.3l15.3 -15.4"/><path class="kdb" d="M532.4 705l15.3 -15.4"/><path class="kh" d="M545.6 688.5l5.4 5.4"/><path class="kby" d="M629.7 327.9l23.1 9.7"/><path class="kbk" d="M630.2 326.9l23.1 9.7"/><path class="kbl" d="M630.4 326.4l23.1 9.7"/><path class="kbu" d="M653.8 333.7l-3.1 7.4"/><path class="kbr" d="M704.9 394.4l24.5 10.3"/><path class="kbs" d="M705.3 393.4l24.5 10.3"/><path class="kbt" d="M705.5 393l24.5 10.3"/><path class="kbu" d="M730.3 400.9l-3 7"/><ellipse cx="589.9" cy="437.2" rx="5.2" ry="3.3" fill="#7e7ea8"/><path class="km" d="M928.3 634.7l0 11.8"/><path class="kz" d="M926.4 634.7l0 11.8"/><path class="kaf" d="M925.5 634.7l0 11.8"/><path class="kab" d="M935.3 645.8l-14 0"/><path class="kbf" d="M849.5 547.1l23.1 9.7"/><path class="kbg" d="M849.9 546l23.1 9.7"/><path class="kbh" d="M850.1 545.6l23.1 9.7"/><path class="kbi" d="M873.5 552.9l-3.1 7.4"/><path class="kcz" d="M733.1 707.8l15.3 -15.4"/><path class="kda" d="M732.3 707.1l15.3 -15.4"/><path class="kdb" d="M732 706.7l15.3 -15.4"/><path class="kh" d="M745.3 690.2l5.4 5.4"/><path class="kcd" d="M534.4 282.3l15.1 -15.1"/><path class="kce" d="M533.6 281.5l15.1 -15.1"/><path class="kcf" d="M533.3 281.2l15.1 -15.1"/><path class="kaj" d="M546.3 264.8l5.7 5.6"/><path class="kdd" d="M663.6 392.2l15.3 -15.4"/><path class="kde" d="M662.8 391.4l15.3 -15.4"/><path class="kdf" d="M662.5 391.1l15.3 -15.4"/><path class="kdg" d="M675.8 374.6l5.4 5.4"/><path class="ke" d="M805 508.8l0 11.8"/><path class="kn" d="M803 508.8l0 11.8"/><path class="ko" d="M802.2 508.8l0 11.8"/><path class="kh" d="M812 519.9l-14 0"/><path class="kby" d="M695.7 390.6l23.1 9.7"/><path class="kbk" d="M696.1 389.6l23.1 9.7"/><path class="kbl" d="M696.3 389.1l23.1 9.7"/><path class="kbu" d="M719.7 396.4l-3.1 7.4"/><path class="kdn" d="M511.8 543l23.4 9.9"/><path class="kdo" d="M512.3 542l23.4 9.9"/><path class="kdp" d="M512.4 541.6l23.4 9.9"/><path class="kbm" d="M536.2 549.1l-3 7"/><path class="kdn" d="M668.1 700.5l23.4 9.9"/><path class="kdo" d="M668.5 699.5l23.4 9.9"/><path class="kdp" d="M668.7 699.1l23.4 9.9"/><path class="kbm" d="M692.5 706.6l-3 7"/><path class="keh" d="M349.4 721.2l15.1 -15.1"/><path class="kei" d="M348.6 720.4l15.1 -15.1"/><path class="kej" d="M348.2 720l15.1 -15.1"/><path class="kdg" d="M361.2 703.6l5.7 5.6"/><path class="kq" d="M681.7 382.8l0 11.8"/><path class="kac" d="M679.7 382.8l0 11.8"/><path class="kad" d="M678.9 382.8l0 11.8"/><path class="kae" d="M688.7 394l-14 0"/><path class="kcj" d="M876 720l15.1 -15.1"/><path class="kcs" d="M875.2 719.2l15.1 -15.1"/><path class="kcl" d="M874.8 718.9l15.1 -15.1"/><path class="kh" d="M887.8 702.5l5.7 5.6"/><ellipse cx="558.3" cy="268.1" rx="7.0" ry="4.5" fill="#3636d8"/><ellipse cx="482.3" cy="826.4" rx="7.0" ry="4.5" fill="#72728a"/><path class="km" d="M359 731.5l0 11.8"/><path class="kn" d="M357 731.5l0 11.8"/><path class="ko" d="M356.2 731.5l0 11.8"/><path class="kp" d="M366 742.7l-14 0"/><path class="ke" d="M458.7 494.2l0 11.8"/><path class="kn" d="M456.7 494.2l0 11.8"/><path class="ko" d="M455.9 494.2l0 11.8"/><path class="kh" d="M465.7 505.4l-14 0"/><path class="kcj" d="M506 345.8l15.1 -15.1"/><path class="kck" d="M505.2 345l15.1 -15.1"/><path class="kcl" d="M504.8 344.7l15.1 -15.1"/><path class="kh" d="M517.8 328.3l5.7 5.6"/><path class="kbf" d="M585.8 274.5l23.1 9.7"/><path class="kbg" d="M586.2 273.4l23.1 9.7"/><path class="kbh" d="M586.4 273l23.1 9.7"/><path class="kbi" d="M609.9 280.3l-3.1 7.4"/><path class="kcz" d="M591.3 556.4l15.3 -15.4"/><path class="kda" d="M590.5 555.6l15.3 -15.4"/><path class="kdb" d="M590.2 555.3l15.3 -15.4"/><path class="kh" d="M603.5 538.8l5.4 5.4"/><path class="kcj" d="M477.5 409.3l15.1 -15.1"/><path class="kck" d="M476.7 408.5l15.1 -15.1"/><path class="kcl" d="M476.3 408.2l15.1 -15.1"/><path class="kh" d="M489.3 391.8l5.7 5.6"/><path class="km" d="M928.3 624.1l0 11.8"/><path class="kz" d="M926.4 624.1l0 11.8"/><path class="kaf" d="M925.5 624.1l0 11.8"/><path class="kab" d="M935.3 635.3l-14 0"/><path class="kby" d="M651.7 337.2l23.1 9.7"/><path class="kbk" d="M652.1 336.1l23.1 9.7"/><path class="kbl" d="M652.3 335.7l23.1 9.7"/><path class="kbu" d="M675.8 343l-3.1 7.4"/><ellipse cx="828.7" cy="830.3" rx="7.0" ry="4.5" fill="#3030ae"/><path class="kbr" d="M728.2 404.2l24.5 10.3"/><path class="kbs" d="M728.6 403.2l24.5 10.3"/><path class="kbt" d="M728.8 402.8l24.5 10.3"/><path class="kbu" d="M753.6 410.8l-3 7"/><path class="ke" d="M805 498.2l0 11.8"/><path class="kn" d="M803 498.2l0 11.8"/><path class="ko" d="M802.2 498.2l0 11.8"/><path class="kh" d="M812 509.4l-14 0"/><path class="kcw" d="M790.9 558.1l15.3 -15.4"/><path class="kdc" d="M790.2 557.4l15.3 -15.4"/><path class="kcy" d="M789.8 557l15.3 -15.4"/><path class="kab" d="M803.1 540.5l5.4 5.4"/><path class="kbf" d="M871.4 556.3l23.1 9.7"/><path class="kbg" d="M871.9 555.3l23.1 9.7"/><path class="kbh" d="M872 554.9l23.1 9.7"/><path class="kbi" d="M895.5 562.2l-3.1 7.4"/><path class="kq" d="M681.7 372.3l0 11.8"/><path class="kac" d="M679.7 372.3l0 11.8"/><path class="kad" d="M678.9 372.3l0 11.8"/><path class="kae" d="M688.7 383.4l-14 0"/><path class="kbv" d="M350 720.2l-2.3 4.6"/><path class="kbw" d="M349 719.7l-2.3 4.6"/><path class="kbx" d="M348.6 719.5l-2.3 4.6"/><path class="kbi" d="M351.6 726.1l-7.1 -3.6"/><path class="kby" d="M717.6 399.8l23.1 9.7"/><path class="kbk" d="M718.1 398.8l23.1 9.7"/><path class="kbl" d="M718.2 398.4l23.1 9.7"/><path class="kbu" d="M741.7 405.7l-3.1 7.4"/><path class="kdn" d="M534.2 552.4l23.4 9.9"/><path class="kdo" d="M534.6 551.4l23.4 9.9"/><path class="kdp" d="M534.8 551l23.4 9.9"/><path class="kbm" d="M558.5 558.5l-3 7"/><path class="kdn" d="M690.5 709.9l23.4 9.9"/><path class="kdo" d="M690.9 708.9l23.4 9.9"/><path class="kdp" d="M691.1 708.5l23.4 9.9"/><path class="kbm" d="M714.8 716.1l-3 7"/><path class="km" d="M359 721l0 11.8"/><path class="kn" d="M357 721l0 11.8"/><path class="ko" d="M356.2 721l0 11.8"/><path class="kp" d="M366 732.1l-14 0"/><path class="ke" d="M458.7 483.7l0 11.8"/><path class="kn" d="M456.7 483.7l0 11.8"/><path class="ko" d="M455.9 483.7l0 11.8"/><path class="kh" d="M465.7 494.8l-14 0"/><path class="kcj" d="M406.3 572.4l15.1 -15.1"/><path class="kck" d="M405.5 571.6l15.1 -15.1"/><path class="kcl" d="M405.2 571.2l15.1 -15.1"/><path class="kh" d="M418.1 554.8l5.7 5.6"/><path class="kcz" d="M519 720.6l15.3 -15.4"/><path class="kda" d="M518.2 719.9l15.3 -15.4"/><path class="kdb" d="M517.9 719.5l15.3 -15.4"/><path class="kh" d="M531.2 703l5.4 5.4"/><path class="kbv" d="M347.8 723.7l1.5 4.8"/><path class="kbw" d="M348.9 723.4l1.5 4.8"/><path class="kbx" d="M349.3 723.3l1.5 4.8"/><path class="kbi" d="M353 726.7l-7.6 2.4"/><path class="kbr" d="M681.5 349.6l24.5 10.3"/><path class="kbs" d="M681.9 348.6l24.5 10.3"/><path class="kbt" d="M682.1 348.2l24.5 10.3"/><path class="kbu" d="M706.9 356.2l-3 7"/><path class="kbf" d="M607.8 283.7l23.1 9.7"/><path class="kbg" d="M608.2 282.7l23.1 9.7"/><path class="kbh" d="M608.4 282.3l23.1 9.7"/><path class="kbi" d="M631.8 289.5l-3.1 7.4"/><path class="kcg" d="M520.2 296.6l15.1 -15.1"/><path class="kch" d="M519.4 295.8l15.1 -15.1"/><path class="kci" d="M519.1 295.5l15.1 -15.1"/><path class="kt" d="M532 279.1l5.7 5.6"/><path class="kcz" d="M718.6 722.3l15.3 -15.4"/><path class="kda" d="M717.9 721.6l15.3 -15.4"/><path class="kdb" d="M717.5 721.3l15.3 -15.4"/><path class="kh" d="M730.8 704.7l5.4 5.4"/><path class="kcw" d="M649.1 406.7l15.3 -15.4"/><path class="kdc" d="M648.4 405.9l15.3 -15.4"/><path class="kcy" d="M648.1 405.6l15.3 -15.4"/><path class="kab" d="M661.3 389.1l5.4 5.4"/><path class="km" d="M928.3 613.6l0 11.8"/><path class="kz" d="M926.4 613.6l0 11.8"/><path class="kaf" d="M925.5 613.6l0 11.8"/><path class="kab" d="M935.3 624.7l-14 0"/><path class="ke" d="M805 487.6l0 11.8"/><path class="kn" d="M803 487.6l0 11.8"/><path class="ko" d="M802.2 487.6l0 11.8"/><path class="kh" d="M812 498.8l-14 0"/><path class="kcj" d="M861.7 734.3l15.1 -15.1"/><path class="kcs" d="M860.9 733.5l15.1 -15.1"/><path class="kcl" d="M860.6 733.2l15.1 -15.1"/><path class="kh" d="M873.5 716.8l5.7 5.6"/><path class="kby" d="M673.7 346.4l23.1 9.7"/><path class="kbk" d="M674.1 345.4l23.1 9.7"/><path class="kbl" d="M674.3 344.9l23.1 9.7"/><path class="kbu" d="M697.8 352.2l-3.1 7.4"/><path class="kbv" d="M348.7 727.6l4.8 3.5"/><path class="kbw" d="M349.3 726.7l4.8 3.5"/><path class="kbx" d="M349.6 726.3l4.8 3.5"/><path class="kbi" d="M355.3 727.5l-4.7 6.5"/><path class="kq" d="M681.7 361.7l0 11.8"/><path class="kac" d="M679.7 361.7l0 11.8"/><path class="kad" d="M678.9 361.7l0 11.8"/><path class="kae" d="M688.7 372.9l-14 0"/><path class="kcj" d="M491.7 360.1l15.1 -15.1"/><path class="kck" d="M490.9 359.3l15.1 -15.1"/><path class="kcl" d="M490.6 359l15.1 -15.1"/><path class="kh" d="M503.5 342.6l5.7 5.6"/><path class="kbr" d="M751.6 414.1l24.5 10.3"/><path class="kbs" d="M752 413.1l24.5 10.3"/><path class="kbt" d="M752.2 412.7l24.5 10.3"/><path class="kbu" d="M777 420.6l-3 7"/><path class="km" d="M359 710.4l0 11.8"/><path class="kn" d="M357 710.4l0 11.8"/><path class="ko" d="M356.2 710.4l0 11.8"/><path class="kp" d="M366 721.6l-14 0"/><path class="ke" d="M458.7 473.1l0 11.8"/><path class="kn" d="M456.7 473.1l0 11.8"/><path class="ko" d="M455.9 473.1l0 11.8"/><path class="kh" d="M465.7 484.3l-14 0"/><path class="kee" d="M893.4 565.6l23.1 9.7"/><path class="kef" d="M893.8 564.6l23.1 9.7"/><path class="kbh" d="M894 564.1l23.1 9.7"/><path class="keg" d="M917.5 571.4l-3.1 7.4"/><path class="kby" d="M739.6 409.1l23.1 9.7"/><path class="kbk" d="M740 408.1l23.1 9.7"/><path class="kbl" d="M740.2 407.6l23.1 9.7"/><path class="kbu" d="M763.7 414.9l-3.1 7.4"/><path class="kdn" d="M556.5 561.8l23.4 9.9"/><path class="kdo" d="M556.9 560.8l23.4 9.9"/><path class="kdp" d="M557.1 560.4l23.4 9.9"/><path class="kbm" d="M580.9 567.9l-3 7"/><path class="kdn" d="M712.8 719.3l23.4 9.9"/><path class="kdo" d="M713.2 718.3l23.4 9.9"/><path class="kdp" d="M713.4 717.9l23.4 9.9"/><path class="kbm" d="M737.1 725.5l-3 7"/><path class="kcj" d="M463.2 423.6l15.1 -15.1"/><path class="kck" d="M462.5 422.8l15.1 -15.1"/><path class="kcl" d="M462.1 422.4l15.1 -15.1"/><path class="kh" d="M475.1 406l5.7 5.6"/><path class="kcz" d="M576.8 570.9l15.3 -15.4"/><path class="kda" d="M576.1 570.2l15.3 -15.4"/><path class="kdb" d="M575.7 569.8l15.3 -15.4"/><path class="kh" d="M589 553.3l5.4 5.4"/><path class="km" d="M928.3 603l0 11.8"/><path class="kz" d="M926.4 603l0 11.8"/><path class="kaf" d="M925.5 603l0 11.8"/><path class="kab" d="M935.3 614.2l-14 0"/><path class="kdt" d="M352.4 730.5l23.1 9.7"/><path class="kdu" d="M352.8 729.5l23.1 9.7"/><path class="kdv" d="M353 729l23.1 9.7"/><path class="kdw" d="M376.5 736.3l-3.1 7.4"/><path class="kcz" d="M776.5 572.6l15.3 -15.4"/><path class="kda" d="M775.7 571.9l15.3 -15.4"/><path class="kdb" d="M775.4 571.6l15.3 -15.4"/><path class="kh" d="M788.7 555l5.4 5.4"/><path class="kby" d="M629.7 293l23.1 9.7"/><path class="kbk" d="M630.2 292l23.1 9.7"/><path class="kbl" d="M630.4 291.5l23.1 9.7"/><path class="kbu" d="M653.8 298.8l-3.1 7.4"/><path class="kbr" d="M704.9 359.5l24.5 10.3"/><path class="kbs" d="M705.3 358.5l24.5 10.3"/><path class="kbt" d="M705.5 358.1l24.5 10.3"/><path class="kbu" d="M730.3 366l-3 7"/><path class="ke" d="M805 477.1l0 11.8"/><path class="kn" d="M803 477.1l0 11.8"/><path class="ko" d="M802.2 477.1l0 11.8"/><path class="kh" d="M812 488.2l-14 0"/><path class="kbv" d="M920.2 578.2l-4.8 -3.5"/><path class="kbw" d="M920.9 577.3l-4.8 -3.5"/><path class="kbx" d="M921.1 576.9l-4.8 -3.5"/><path class="kbi" d="M913.6 578.3l4.7 -6.5"/><path class="kq" d="M681.7 351.2l0 11.8"/><path class="kac" d="M679.7 351.2l0 11.8"/><path class="kad" d="M678.9 351.2l0 11.8"/><path class="kae" d="M688.7 362.3l-14 0"/><path class="kcj" d="M392.1 586.7l15.1 -15.1"/><path class="kck" d="M391.3 585.9l15.1 -15.1"/><path class="kcl" d="M390.9 585.5l15.1 -15.1"/><path class="kh" d="M403.9 569.1l5.7 5.6"/><path class="kdd" d="M663.6 357.3l15.3 -15.4"/><path class="kde" d="M662.8 356.5l15.3 -15.4"/><path class="kdf" d="M662.5 356.2l15.3 -15.4"/><path class="kdg" d="M675.8 339.6l5.4 5.4"/><path class="km" d="M359 699.8l0 11.8"/><path class="kn" d="M357 699.8l0 11.8"/><path class="ko" d="M356.2 699.8l0 11.8"/><path class="kp" d="M366 711l-14 0"/><path class="kq" d="M458.7 462.5l0 11.8"/><path class="kr" d="M456.7 462.5l0 11.8"/><path class="ks" d="M455.9 462.5l0 11.8"/><path class="kt" d="M465.7 473.7l-14 0"/><path class="kby" d="M695.7 355.7l23.1 9.7"/><path class="kbk" d="M696.1 354.6l23.1 9.7"/><path class="kbl" d="M696.3 354.2l23.1 9.7"/><path class="kbu" d="M719.7 361.5l-3.1 7.4"/><path class="kcz" d="M504.5 735.1l15.3 -15.4"/><path class="kda" d="M503.8 734.4l15.3 -15.4"/><path class="kdb" d="M503.4 734l15.3 -15.4"/><path class="kh" d="M516.7 717.5l5.4 5.4"/><path class="kbv" d="M921.1 582.1l-1.5 -4.8"/><path class="kbw" d="M922.1 581.7l-1.5 -4.8"/><path class="kbx" d="M922.6 581.6l-1.5 -4.8"/><path class="kbi" d="M915.9 579.1l7.6 -2.4"/><path class="kbr" d="M774.9 423.9l24.5 10.3"/><path class="kbs" d="M775.3 422.9l24.5 10.3"/><path class="kbt" d="M775.5 422.5l24.5 10.3"/><path class="kbu" d="M800.3 430.5l-3 7"/><path class="kcj" d="M506 310.9l15.1 -15.1"/><path class="kck" d="M505.2 310.1l15.1 -15.1"/><path class="kcl" d="M504.8 309.8l15.1 -15.1"/><path class="kh" d="M517.8 293.4l5.7 5.6"/><path class="kcz" d="M704.1 736.8l15.3 -15.4"/><path class="kda" d="M703.4 736.1l15.3 -15.4"/><path class="kdb" d="M703.1 735.8l15.3 -15.4"/><path class="kh" d="M716.3 719.2l5.4 5.4"/><path class="kby" d="M761.6 418.4l23.1 9.7"/><path class="kbk" d="M762 417.3l23.1 9.7"/><path class="kbl" d="M762.2 416.9l23.1 9.7"/><path class="kbu" d="M785.6 424.2l-3.1 7.4"/><path class="kcz" d="M634.7 421.2l15.3 -15.4"/><path class="kda" d="M633.9 420.4l15.3 -15.4"/><path class="kdb" d="M633.6 420.1l15.3 -15.4"/><path class="kh" d="M646.9 403.6l5.4 5.4"/><path class="kdn" d="M578.8 571.2l23.4 9.9"/><path class="kdo" d="M579.2 570.2l23.4 9.9"/><path class="kdp" d="M579.4 569.8l23.4 9.9"/><path class="kbm" d="M603.2 577.3l-3 7"/><path class="kdn" d="M735.1 728.7l23.4 9.9"/><path class="kdo" d="M735.5 727.8l23.4 9.9"/><path class="kdp" d="M735.7 727.3l23.4 9.9"/><path class="kbm" d="M759.5 734.9l-3 7"/><path class="kau" d="M589.9 422.6l0 15.2"/><path class="kav" d="M588.4 422.6l0 15.2"/><path class="kaw" d="M587.8 422.6l0 15.2"/><path class="kae" d="M595.1 437.2l-10.4 0"/><path class="km" d="M928.3 592.4l0 11.8"/><path class="kz" d="M926.4 592.4l0 11.8"/><path class="kaf" d="M925.5 592.4l0 11.8"/><path class="kab" d="M935.3 603.6l-14 0"/><path class="kcj" d="M847.5 748.6l15.1 -15.1"/><path class="kcs" d="M846.7 747.8l15.1 -15.1"/><path class="kcl" d="M846.3 747.5l15.1 -15.1"/><path class="kh" d="M859.3 731l5.7 5.6"/><path class="kbv" d="M918.8 585.6l2.3 -4.6"/><path class="kbw" d="M917.8 585.1l2.3 -4.6"/><path class="kbx" d="M917.4 584.9l2.3 -4.6"/><path class="kbi" d="M917.3 579.7l7.1 3.6"/><path class="ke" d="M805 466.5l0 11.8"/><path class="kn" d="M803 466.5l0 11.8"/><path class="ko" d="M802.2 466.5l0 11.8"/><path class="kh" d="M812 477.7l-14 0"/><path class="kcj" d="M477.5 374.4l15.1 -15.1"/><path class="kck" d="M476.7 373.6l15.1 -15.1"/><path class="kcl" d="M476.3 373.3l15.1 -15.1"/><path class="kh" d="M489.3 356.8l5.7 5.6"/><path class="kdx" d="M374.4 739.7l23.1 9.7"/><path class="kdy" d="M374.8 738.7l23.1 9.7"/><path class="kdz" d="M375 738.3l23.1 9.7"/><path class="kbi" d="M398.4 745.6l-3.1 7.4"/><path class="ke" d="M482.3 815.2l0 11.8"/><path class="kn" d="M480.4 815.2l0 11.8"/><path class="ko" d="M479.5 815.2l0 11.8"/><path class="kh" d="M489.3 826.4l-14 0"/><path class="kq" d="M681.7 340.6l0 11.8"/><path class="kac" d="M679.7 340.6l0 11.8"/><path class="kad" d="M678.9 340.6l0 11.8"/><path class="kae" d="M688.7 351.8l-14 0"/><path class="kby" d="M651.7 302.2l23.1 9.7"/><path class="kbk" d="M652.1 301.2l23.1 9.7"/><path class="kbl" d="M652.3 300.8l23.1 9.7"/><path class="kbu" d="M675.8 308.1l-3.1 7.4"/><path class="km" d="M359 689.3l0 11.8"/><path class="kn" d="M357 689.3l0 11.8"/><path class="ko" d="M356.2 689.3l0 11.8"/><path class="kp" d="M366 700.4l-14 0"/><path class="kbr" d="M728.2 369.3l24.5 10.3"/><path class="kbs" d="M728.6 368.3l24.5 10.3"/><path class="kbt" d="M728.8 367.9l24.5 10.3"/><path class="kbu" d="M753.6 375.9l-3 7"/><path class="kq" d="M458.7 452l0 11.8"/><path class="kr" d="M456.7 452l0 11.8"/><path class="ks" d="M455.9 452l0 11.8"/><path class="kt" d="M465.7 463.1l-14 0"/><path class="kcj" d="M449 437.9l15.1 -15.1"/><path class="kck" d="M448.2 437.1l15.1 -15.1"/><path class="kcl" d="M447.9 436.7l15.1 -15.1"/><path class="kh" d="M460.8 420.3l5.7 5.6"/><path class="kcz" d="M562.4 585.4l15.3 -15.4"/><path class="kda" d="M561.6 584.7l15.3 -15.4"/><path class="kdb" d="M561.3 584.3l15.3 -15.4"/><path class="kh" d="M574.6 567.8l5.4 5.4"/><path class="kby" d="M717.6 364.9l23.1 9.7"/><path class="kbk" d="M718.1 363.9l23.1 9.7"/><path class="kbl" d="M718.2 363.5l23.1 9.7"/><path class="kbu" d="M741.7 370.8l-3.1 7.4"/><path class="kcz" d="M762 587.1l15.3 -15.4"/><path class="kda" d="M761.2 586.4l15.3 -15.4"/><path class="kdb" d="M760.9 586.1l15.3 -15.4"/><path class="kh" d="M774.2 569.5l5.4 5.4"/><path class="kag" d="M828.7 819.2l0 11.8"/><path class="kak" d="M826.7 819.2l0 11.8"/><path class="kal" d="M825.9 819.2l0 11.8"/><path class="kam" d="M835.7 830.3l-14 0"/><path class="km" d="M928.3 581.9l0 11.8"/><path class="kz" d="M926.4 581.9l0 11.8"/><path class="kaf" d="M925.5 581.9l0 11.8"/><path class="kab" d="M935.3 593l-14 0"/><path class="kbr" d="M798.3 433.7l24.5 10.3"/><path class="kbs" d="M798.7 432.8l24.5 10.3"/><path class="kbt" d="M798.9 432.3l24.5 10.3"/><path class="kbu" d="M823.7 440.3l-3 7"/><path class="kby" d="M783.5 427.6l23.1 9.7"/><path class="kbk" d="M784 426.6l23.1 9.7"/><path class="kbl" d="M784.2 426.2l23.1 9.7"/><path class="kbu" d="M807.6 433.4l-3.1 7.4"/><path class="kdh" d="M444.9 423.1l23.4 9.9"/><path class="kdi" d="M445.3 422.1l23.4 9.9"/><path class="kdj" d="M445.5 421.7l23.4 9.9"/><path class="kaj" d="M469.2 429.2l-3 7"/><path class="kdn" d="M601.2 580.6l23.4 9.9"/><path class="kdo" d="M601.6 579.6l23.4 9.9"/><path class="kdp" d="M601.7 579.2l23.4 9.9"/><path class="kbm" d="M625.5 586.7l-3 7"/><path class="kdn" d="M757.4 738.1l23.4 9.9"/><path class="kdo" d="M757.9 737.2l23.4 9.9"/><path class="kdp" d="M758 736.7l23.4 9.9"/><path class="kbm" d="M781.8 744.3l-3 7"/><path class="kbr" d="M681.5 314.7l24.5 10.3"/><path class="kbs" d="M681.9 313.7l24.5 10.3"/><path class="kbt" d="M682.1 313.3l24.5 10.3"/><path class="kbu" d="M706.9 321.3l-3 7"/><path class="kq" d="M805 456l0 11.8"/><path class="kac" d="M803 456l0 11.8"/><path class="kad" d="M802.2 456l0 11.8"/><path class="kae" d="M812 467.1l-14 0"/><path class="kcj" d="M377.8 600.9l15.1 -15.1"/><path class="kck" d="M377 600.2l15.1 -15.1"/><path class="kcl" d="M376.7 599.8l15.1 -15.1"/><path class="kh" d="M389.7 583.4l5.7 5.6"/><path class="kcw" d="M649.1 371.8l15.3 -15.4"/><path class="kdc" d="M648.4 371l15.3 -15.4"/><path class="kcy" d="M648.1 370.7l15.3 -15.4"/><path class="kab" d="M661.3 354.2l5.4 5.4"/><path class="kau" d="M589.9 408.5l0 15.2"/><path class="kav" d="M588.4 408.5l0 15.2"/><path class="kaw" d="M587.8 408.5l0 15.2"/><path class="kae" d="M595.1 423.2l-10.4 0"/><path class="ke" d="M482.3 804.6l0 11.8"/><path class="kn" d="M480.4 804.6l0 11.8"/><path class="ko" d="M479.5 804.6l0 11.8"/><path class="kh" d="M489.3 815.8l-14 0"/><path class="ka" d="M681.7 330l0 11.8"/><path class="kb" d="M679.7 330l0 11.8"/><path class="kc" d="M678.9 330l0 11.8"/><path class="kd" d="M688.7 341.2l-14 0"/><path class="kcm" d="M904.4 599.8l15.1 -15.1"/><path class="kcn" d="M903.6 599l15.1 -15.1"/><path class="kco" d="M903.3 598.6l15.1 -15.1"/><path class="kh" d="M916.3 582.2l5.7 5.6"/><path class="kcw" d="M490 749.6l15.3 -15.4"/><path class="kcx" d="M489.3 748.9l15.3 -15.4"/><path class="kcy" d="M489 748.6l15.3 -15.4"/><path class="kt" d="M502.2 732l5.4 5.4"/><path class="km" d="M359 678.7l0 11.8"/><path class="kn" d="M357 678.7l0 11.8"/><path class="ko" d="M356.2 678.7l0 11.8"/><path class="kp" d="M366 689.9l-14 0"/><path class="kq" d="M458.7 441.4l0 11.8"/><path class="kr" d="M456.7 441.4l0 11.8"/><path class="ks" d="M455.9 441.4l0 11.8"/><path class="kt" d="M465.7 452.6l-14 0"/><path class="kdx" d="M396.3 749l23.1 9.7"/><path class="kdy" d="M396.8 748l23.1 9.7"/><path class="kdz" d="M397 747.5l23.1 9.7"/><path class="kbi" d="M420.4 754.8l-3.1 7.4"/><path class="kby" d="M673.7 311.5l23.1 9.7"/><path class="kbk" d="M674.1 310.5l23.1 9.7"/><path class="kbl" d="M674.3 310l23.1 9.7"/><path class="kbu" d="M697.8 317.3l-3.1 7.4"/><path class="kcj" d="M491.7 325.2l15.1 -15.1"/><path class="kck" d="M490.9 324.4l15.1 -15.1"/><path class="kcl" d="M490.6 324.1l15.1 -15.1"/><path class="kh" d="M503.5 307.7l5.7 5.6"/><path class="kcz" d="M689.7 751.4l15.3 -15.4"/><path class="kda" d="M688.9 750.6l15.3 -15.4"/><path class="kdb" d="M688.6 750.3l15.3 -15.4"/><path class="kh" d="M701.9 733.7l5.4 5.4"/><path class="kbr" d="M751.6 379.2l24.5 10.3"/><path class="kbs" d="M752 378.2l24.5 10.3"/><path class="kbt" d="M752.2 377.8l24.5 10.3"/><path class="kbu" d="M777 385.7l-3 7"/><path class="kcz" d="M620.2 435.7l15.3 -15.4"/><path class="kda" d="M619.5 435l15.3 -15.4"/><path class="kdb" d="M619.1 434.6l15.3 -15.4"/><path class="kh" d="M632.4 418.1l5.4 5.4"/><path class="kby" d="M739.6 374.2l23.1 9.7"/><path class="kbk" d="M740 373.2l23.1 9.7"/><path class="kbl" d="M740.2 372.7l23.1 9.7"/><path class="kbu" d="M763.7 380l-3.1 7.4"/><path class="kcj" d="M833.2 762.9l15.1 -15.1"/><path class="kcs" d="M832.5 762.1l15.1 -15.1"/><path class="kcl" d="M832.1 761.7l15.1 -15.1"/><path class="kh" d="M845.1 745.3l5.7 5.6"/><path class="kag" d="M828.7 808.6l0 11.8"/><path class="kak" d="M826.7 808.6l0 11.8"/><path class="kal" d="M825.9 808.6l0 11.8"/><path class="kam" d="M835.7 819.8l-14 0"/><path class="km" d="M928.3 571.3l0 11.8"/><path class="kz" d="M926.4 571.3l0 11.8"/><path class="kaf" d="M925.5 571.3l0 11.8"/><path class="kab" d="M935.3 582.5l-14 0"/><path class="kcj" d="M463.2 388.7l15.1 -15.1"/><path class="kck" d="M462.5 387.9l15.1 -15.1"/><path class="kcl" d="M462.1 387.5l15.1 -15.1"/><path class="kh" d="M475.1 371.1l5.7 5.6"/><path class="kq" d="M805 445.4l0 11.8"/><path class="kac" d="M803 445.4l0 11.8"/><path class="kad" d="M802.2 445.4l0 11.8"/><path class="kae" d="M812 456.6l-14 0"/><path class="kby" d="M805.5 436.9l23.1 9.7"/><path class="kbk" d="M805.9 435.9l23.1 9.7"/><path class="kbl" d="M806.1 435.4l23.1 9.7"/><path class="kbu" d="M829.6 442.7l-3.1 7.4"/><path class="ke" d="M482.3 794.1l0 11.8"/><path class="kn" d="M480.4 794.1l0 11.8"/><path class="ko" d="M479.5 794.1l0 11.8"/><path class="kh" d="M489.3 805.2l-14 0"/><path class="ka" d="M681.7 319.5l0 11.8"/><path class="kb" d="M679.7 319.5l0 11.8"/><path class="kc" d="M678.9 319.5l0 11.8"/><path class="kd" d="M688.7 330.6l-14 0"/><path class="kdk" d="M467.2 432.5l23.4 9.9"/><path class="kdl" d="M467.6 431.5l23.4 9.9"/><path class="kdm" d="M467.8 431.1l23.4 9.9"/><path class="kbi" d="M491.6 438.6l-3 7"/><path class="kdn" d="M623.5 590l23.4 9.9"/><path class="kdo" d="M623.9 589l23.4 9.9"/><path class="kdp" d="M624.1 588.6l23.4 9.9"/><path class="kbm" d="M647.8 596.2l-3 7"/><path class="kdk" d="M779.8 747.6l23.4 9.9"/><path class="kdl" d="M780.2 746.6l23.4 9.9"/><path class="kdm" d="M780.4 746.2l23.4 9.9"/><path class="kbi" d="M804.1 753.7l-3 7"/><path class="kcj" d="M434.8 452.1l15.1 -15.1"/><path class="kck" d="M434 451.4l15.1 -15.1"/><path class="kcl" d="M433.6 451l15.1 -15.1"/><path class="kh" d="M446.6 434.6l5.7 5.6"/><path class="km" d="M359 668.1l0 11.8"/><path class="kn" d="M357 668.1l0 11.8"/><path class="ko" d="M356.2 668.1l0 11.8"/><path class="kp" d="M366 679.3l-14 0"/><path class="kq" d="M458.7 430.8l0 11.8"/><path class="kr" d="M456.7 430.8l0 11.8"/><path class="ks" d="M455.9 430.8l0 11.8"/><path class="kt" d="M465.7 442l-14 0"/><path class="kbr" d="M704.9 324.6l24.5 10.3"/><path class="kbs" d="M705.3 323.6l24.5 10.3"/><path class="kbt" d="M705.5 323.2l24.5 10.3"/><path class="kbu" d="M730.3 331.1l-3 7"/><path class="kcz" d="M547.9 599.9l15.3 -15.4"/><path class="kda" d="M547.1 599.2l15.3 -15.4"/><path class="kdb" d="M546.8 598.9l15.3 -15.4"/><path class="kh" d="M560.1 582.3l5.4 5.4"/><path class="kau" d="M589.9 394.5l0 15.2"/><path class="kav" d="M588.4 394.5l0 15.2"/><path class="kaw" d="M587.8 394.5l0 15.2"/><path class="kae" d="M595.1 409.1l-10.4 0"/><path class="kdd" d="M663.6 322.4l15.3 -15.4"/><path class="kde" d="M662.8 321.6l15.3 -15.4"/><path class="kdf" d="M662.5 321.3l15.3 -15.4"/><path class="kdg" d="M675.8 304.7l5.4 5.4"/><path class="kbj" d="M418.3 758.3l23.1 9.7"/><path class="kbk" d="M418.7 757.2l23.1 9.7"/><path class="kbl" d="M418.9 756.8l23.1 9.7"/><path class="kbm" d="M442.4 764.1l-3.1 7.4"/><path class="kby" d="M695.7 320.8l23.1 9.7"/><path class="kbk" d="M696.1 319.7l23.1 9.7"/><path class="kbl" d="M696.3 319.3l23.1 9.7"/><path class="kbu" d="M719.7 326.6l-3.1 7.4"/><path class="kcz" d="M747.5 601.7l15.3 -15.4"/><path class="kda" d="M746.8 600.9l15.3 -15.4"/><path class="kdb" d="M746.5 600.6l15.3 -15.4"/><path class="kh" d="M759.7 584l5.4 5.4"/><path class="ky" d="M828.7 798.1l0 11.8"/><path class="kz" d="M826.7 798.1l0 11.8"/><path class="kaa" d="M825.9 798.1l0 11.8"/><path class="kab" d="M835.7 809.2l-14 0"/><path class="km" d="M928.3 560.8l0 11.8"/><path class="kz" d="M926.4 560.8l0 11.8"/><path class="kaf" d="M925.5 560.8l0 11.8"/><path class="kab" d="M935.3 571.9l-14 0"/><path class="kcg" d="M363.6 615.2l15.1 -15.1"/><path class="kch" d="M362.8 614.4l15.1 -15.1"/><path class="kci" d="M362.5 614.1l15.1 -15.1"/><path class="kt" d="M375.4 597.7l5.7 5.6"/><path class="kbr" d="M774.9 389l24.5 10.3"/><path class="kbs" d="M775.3 388l24.5 10.3"/><path class="kbt" d="M775.5 387.6l24.5 10.3"/><path class="kbu" d="M800.3 395.6l-3 7"/><path class="kby" d="M761.6 383.5l23.1 9.7"/><path class="kbk" d="M762 382.4l23.1 9.7"/><path class="kbl" d="M762.2 382l23.1 9.7"/><path class="kbu" d="M785.6 389.3l-3.1 7.4"/><path class="kq" d="M805 434.8l0 11.8"/><path class="kac" d="M803 434.8l0 11.8"/><path class="kad" d="M802.2 434.8l0 11.8"/><path class="kae" d="M812 446l-14 0"/><path class="kcj" d="M890.2 614.1l15.1 -15.1"/><path class="kcs" d="M889.4 613.3l15.1 -15.1"/><path class="kcl" d="M889.1 612.9l15.1 -15.1"/><path class="kh" d="M902 596.5l5.7 5.6"/><path class="kcz" d="M634.7 386.3l15.3 -15.4"/><path class="kda" d="M633.9 385.5l15.3 -15.4"/><path class="kdb" d="M633.6 385.2l15.3 -15.4"/><path class="kh" d="M646.9 368.7l5.4 5.4"/><path class="kcw" d="M475.6 764.1l15.3 -15.4"/><path class="kcx" d="M474.8 763.4l15.3 -15.4"/><path class="kcy" d="M474.5 763.1l15.3 -15.4"/><path class="kt" d="M487.8 746.5l5.4 5.4"/><ellipse cx="681.7" cy="320.1" rx="7.0" ry="4.5" fill="#3636d8"/><ellipse cx="605.7" cy="878.3" rx="7.0" ry="4.5" fill="#72728a"/><path class="ke" d="M482.3 783.5l0 11.8"/><path class="kn" d="M480.4 783.5l0 11.8"/><path class="ko" d="M479.5 783.5l0 11.8"/><path class="kh" d="M489.3 794.7l-14 0"/><path class="km" d="M359 657.6l0 11.8"/><path class="kn" d="M357 657.6l0 11.8"/><path class="ko" d="M356.2 657.6l0 11.8"/><path class="kp" d="M366 668.7l-14 0"/><path class="kq" d="M458.7 420.3l0 11.8"/><path class="kr" d="M456.7 420.3l0 11.8"/><path class="ks" d="M455.9 420.3l0 11.8"/><path class="kt" d="M465.7 431.4l-14 0"/><path class="kcj" d="M477.5 339.5l15.1 -15.1"/><path class="kck" d="M476.7 338.7l15.1 -15.1"/><path class="kcl" d="M476.3 338.3l15.1 -15.1"/><path class="kh" d="M489.3 321.9l5.7 5.6"/><path class="kby" d="M827.5 446.2l23.1 9.7"/><path class="kbk" d="M827.9 445.1l23.1 9.7"/><path class="kbl" d="M828.1 444.7l23.1 9.7"/><path class="kbu" d="M851.6 452l-3.1 7.4"/><path class="kcz" d="M675.2 765.9l15.3 -15.4"/><path class="kda" d="M674.5 765.1l15.3 -15.4"/><path class="kdb" d="M674.1 764.8l15.3 -15.4"/><path class="kh" d="M687.4 748.3l5.4 5.4"/><path class="kdk" d="M489.5 441.9l23.4 9.9"/><path class="kdl" d="M489.9 440.9l23.4 9.9"/><path class="kdm" d="M490.1 440.5l23.4 9.9"/><path class="kbi" d="M513.9 448l-3 7"/><path class="kdn" d="M645.8 599.4l23.4 9.9"/><path class="kdo" d="M646.2 598.4l23.4 9.9"/><path class="kdp" d="M646.4 598l23.4 9.9"/><path class="kbm" d="M670.2 605.6l-3 7"/><path class="kdk" d="M802.1 757l23.4 9.9"/><path class="kdl" d="M802.5 756l23.4 9.9"/><path class="kdm" d="M802.7 755.6l23.4 9.9"/><path class="kbi" d="M826.5 763.1l-3 7"/><path class="kcz" d="M605.7 450.2l15.3 -15.4"/><path class="kda" d="M605 449.5l15.3 -15.4"/><path class="kdb" d="M604.7 449.2l15.3 -15.4"/><path class="kh" d="M617.9 432.6l5.4 5.4"/><path class="kbr" d="M728.2 334.4l24.5 10.3"/><path class="kbs" d="M728.6 333.4l24.5 10.3"/><path class="kbt" d="M728.8 333l24.5 10.3"/><path class="kbu" d="M753.6 341l-3 7"/><path class="kcj" d="M819 777.2l15.1 -15.1"/><path class="kcs" d="M818.2 776.4l15.1 -15.1"/><path class="kcl" d="M817.9 776l15.1 -15.1"/><path class="kh" d="M830.8 759.6l5.7 5.6"/><path class="kcj" d="M449 403l15.1 -15.1"/><path class="kck" d="M448.2 402.2l15.1 -15.1"/><path class="kcl" d="M447.9 401.8l15.1 -15.1"/><path class="kh" d="M460.8 385.4l5.7 5.6"/><path class="kbj" d="M440.3 767.5l23.1 9.7"/><path class="kbk" d="M440.7 766.5l23.1 9.7"/><path class="kbl" d="M440.9 766.1l23.1 9.7"/><path class="kbm" d="M464.4 773.3l-3.1 7.4"/><path class="kan" d="M589.9 380.5l0 15.2"/><path class="kao" d="M588.4 380.5l0 15.2"/><path class="kap" d="M587.8 380.5l0 15.2"/><path class="kd" d="M595.1 395.1l-10.4 0"/><path class="kdd" d="M805.4 451.9l15.3 -15.4"/><path class="kde" d="M804.6 451.2l15.3 -15.4"/><path class="kdf" d="M804.3 450.9l15.3 -15.4"/><path class="kdg" d="M817.6 434.3l5.4 5.4"/><path class="kby" d="M717.6 330l23.1 9.7"/><path class="kbk" d="M718.1 329l23.1 9.7"/><path class="kbl" d="M718.2 328.6l23.1 9.7"/><path class="kbu" d="M741.7 335.8l-3.1 7.4"/><path class="ky" d="M828.7 787.5l0 11.8"/><path class="kz" d="M826.7 787.5l0 11.8"/><path class="kaa" d="M825.9 787.5l0 11.8"/><path class="kab" d="M835.7 798.7l-14 0"/><path class="km" d="M928.3 550.2l0 11.8"/><path class="kz" d="M926.4 550.2l0 11.8"/><path class="kaf" d="M925.5 550.2l0 11.8"/><path class="kab" d="M935.3 561.4l-14 0"/><path class="kq" d="M805 424.3l0 11.8"/><path class="kac" d="M803 424.3l0 11.8"/><path class="kad" d="M802.2 424.3l0 11.8"/><path class="kae" d="M812 435.4l-14 0"/><path class="kcj" d="M420.5 466.4l15.1 -15.1"/><path class="kck" d="M419.7 465.6l15.1 -15.1"/><path class="kcl" d="M419.4 465.3l15.1 -15.1"/><path class="kh" d="M432.4 448.9l5.7 5.6"/><path class="ke" d="M482.3 772.9l0 11.8"/><path class="kn" d="M480.4 772.9l0 11.8"/><path class="ko" d="M479.5 772.9l0 11.8"/><path class="kh" d="M489.3 784.1l-14 0"/><path class="kbr" d="M798.3 398.8l24.5 10.3"/><path class="kbs" d="M798.7 397.9l24.5 10.3"/><path class="kbt" d="M798.9 397.4l24.5 10.3"/><path class="kbu" d="M823.7 405.4l-3 7"/><path class="kby" d="M783.5 392.7l23.1 9.7"/><path class="kbk" d="M784 391.7l23.1 9.7"/><path class="kbl" d="M784.2 391.3l23.1 9.7"/><path class="kbu" d="M807.6 398.5l-3.1 7.4"/><path class="kcz" d="M533.4 614.4l15.3 -15.4"/><path class="kda" d="M532.7 613.7l15.3 -15.4"/><path class="kdb" d="M532.4 613.4l15.3 -15.4"/><path class="kh" d="M545.6 596.8l5.4 5.4"/><path class="kdh" d="M444.9 388.2l23.4 9.9"/><path class="kdi" d="M445.3 387.2l23.4 9.9"/><path class="kdj" d="M445.5 386.8l23.4 9.9"/><path class="kaj" d="M469.2 394.3l-3 7"/><path class="km" d="M359 647l0 11.8"/><path class="kn" d="M357 647l0 11.8"/><path class="ko" d="M356.2 647l0 11.8"/><path class="kp" d="M366 658.2l-14 0"/><path class="kbv" d="M465.4 786.3l-3.1 -6.9"/><path class="kbw" d="M466.4 785.8l-3.1 -6.9"/><path class="kbx" d="M466.8 785.7l-3.1 -6.9"/><path class="kbi" d="M458.9 781.6l7.3 -3.2"/><path class="kq" d="M458.7 409.7l0 11.8"/><path class="kr" d="M456.7 409.7l0 11.8"/><path class="ks" d="M455.9 409.7l0 11.8"/><path class="kt" d="M465.7 420.9l-14 0"/><path class="kcw" d="M649.1 336.9l15.3 -15.4"/><path class="kdc" d="M648.4 336.1l15.3 -15.4"/><path class="kcy" d="M648.1 335.8l15.3 -15.4"/><path class="kab" d="M661.3 319.3l5.4 5.4"/><path class="kbf" d="M849.5 455.4l23.1 9.7"/><path class="kbg" d="M849.9 454.4l23.1 9.7"/><path class="kbh" d="M850.1 453.9l23.1 9.7"/><path class="kbi" d="M873.5 461.2l-3.1 7.4"/><path class="kcz" d="M733.1 616.2l15.3 -15.4"/><path class="kda" d="M732.3 615.4l15.3 -15.4"/><path class="kdb" d="M732 615.1l15.3 -15.4"/><path class="kh" d="M745.3 598.5l5.4 5.4"/><path class="kdn" d="M511.8 451.3l23.4 9.9"/><path class="kdo" d="M512.3 450.3l23.4 9.9"/><path class="kdp" d="M512.4 449.9l23.4 9.9"/><path class="kbm" d="M536.2 457.4l-3 7"/><path class="kdn" d="M668.1 608.8l23.4 9.9"/><path class="kdo" d="M668.5 607.9l23.4 9.9"/><path class="kdp" d="M668.7 607.4l23.4 9.9"/><path class="kbm" d="M692.5 615l-3 7"/><path class="ker" d="M824.4 766.4l23.4 9.9"/><path class="kes" d="M824.8 765.4l23.4 9.9"/><path class="ket" d="M825 765l23.4 9.9"/><path class="keu" d="M848.8 772.5l-3 7"/><path class="keh" d="M349.4 629.5l15.1 -15.1"/><path class="kei" d="M348.6 628.7l15.1 -15.1"/><path class="kej" d="M348.2 628.4l15.1 -15.1"/><path class="kdg" d="M361.2 612l5.7 5.6"/><path class="ky" d="M828.7 776.9l0 11.8"/><path class="kz" d="M826.7 776.9l0 11.8"/><path class="kaa" d="M825.9 776.9l0 11.8"/><path class="kab" d="M835.7 788.1l-14 0"/><path class="ki" d="M928.3 539.6l0 11.8"/><path class="kj" d="M926.4 539.6l0 11.8"/><path class="kk" d="M925.5 539.6l0 11.8"/><path class="kl" d="M935.3 550.8l-14 0"/><path class="kcj" d="M876 628.4l15.1 -15.1"/><path class="kcs" d="M875.2 627.6l15.1 -15.1"/><path class="kcl" d="M874.8 627.2l15.1 -15.1"/><path class="kh" d="M887.8 610.8l5.7 5.6"/><path class="kbr" d="M751.6 344.2l24.5 10.3"/><path class="kbs" d="M752 343.3l24.5 10.3"/><path class="kbt" d="M752.2 342.8l24.5 10.3"/><path class="kbu" d="M777 350.8l-3 7"/><path class="kcz" d="M620.2 400.8l15.3 -15.4"/><path class="kda" d="M619.5 400.1l15.3 -15.4"/><path class="kdb" d="M619.1 399.7l15.3 -15.4"/><path class="kh" d="M632.4 383.2l5.4 5.4"/><path class="kek" d="M461.1 778.7l15.3 -15.4"/><path class="kel" d="M460.4 777.9l15.3 -15.4"/><path class="kem" d="M460 777.6l15.3 -15.4"/><path class="kx" d="M473.3 761l5.4 5.4"/><path class="kbj" d="M462.3 776.8l23.1 9.7"/><path class="kbk" d="M462.7 775.8l23.1 9.7"/><path class="kbl" d="M462.9 775.3l23.1 9.7"/><path class="kbm" d="M486.3 782.6l-3.1 7.4"/><path class="kq" d="M805 413.7l0 11.8"/><path class="kac" d="M803 413.7l0 11.8"/><path class="kad" d="M802.2 413.7l0 11.8"/><path class="kae" d="M812 424.9l-14 0"/><path class="kby" d="M739.6 339.3l23.1 9.7"/><path class="kbk" d="M740 338.3l23.1 9.7"/><path class="kbl" d="M740.2 337.8l23.1 9.7"/><path class="kbu" d="M763.7 345.1l-3.1 7.4"/><path class="kan" d="M589.9 366.4l0 15.2"/><path class="kao" d="M588.4 366.4l0 15.2"/><path class="kap" d="M587.8 366.4l0 15.2"/><path class="kd" d="M595.1 381.1l-10.4 0"/><path class="ke" d="M482.3 762.4l0 11.8"/><path class="kn" d="M480.4 762.4l0 11.8"/><path class="ko" d="M479.5 762.4l0 11.8"/><path class="kh" d="M489.3 773.5l-14 0"/><path class="kcj" d="M463.2 353.8l15.1 -15.1"/><path class="kck" d="M462.5 353l15.1 -15.1"/><path class="kcl" d="M462.1 352.6l15.1 -15.1"/><path class="kh" d="M475.1 336.2l5.7 5.6"/><path class="km" d="M359 636.5l0 11.8"/><path class="kn" d="M357 636.5l0 11.8"/><path class="ko" d="M356.2 636.5l0 11.8"/><path class="kp" d="M366 647.6l-14 0"/><path class="kq" d="M458.7 399.2l0 11.8"/><path class="kr" d="M456.7 399.2l0 11.8"/><path class="ks" d="M455.9 399.2l0 11.8"/><path class="kt" d="M465.7 410.3l-14 0"/><path class="kcz" d="M660.8 780.4l15.3 -15.4"/><path class="kda" d="M660 779.6l15.3 -15.4"/><path class="kdb" d="M659.7 779.3l15.3 -15.4"/><path class="kh" d="M673 762.8l5.4 5.4"/><path class="kbr" d="M464.6 785.5l24.5 10.3"/><path class="kbs" d="M465 784.5l24.5 10.3"/><path class="kbt" d="M465.2 784.1l24.5 10.3"/><path class="kbu" d="M490 792.1l-3 7"/><path class="kcz" d="M591.3 464.7l15.3 -15.4"/><path class="kda" d="M590.5 464l15.3 -15.4"/><path class="kdb" d="M590.2 463.7l15.3 -15.4"/><path class="kh" d="M603.5 447.1l5.4 5.4"/><path class="kby" d="M805.5 402l23.1 9.7"/><path class="kbk" d="M805.9 401l23.1 9.7"/><path class="kbl" d="M806.1 400.5l23.1 9.7"/><path class="kbu" d="M829.6 407.8l-3.1 7.4"/><path class="kcj" d="M804.8 791.4l15.1 -15.1"/><path class="kcs" d="M804 790.6l15.1 -15.1"/><path class="kcl" d="M803.6 790.3l15.1 -15.1"/><path class="kh" d="M816.6 773.9l5.7 5.6"/><path class="kdk" d="M467.2 397.6l23.4 9.9"/><path class="kdl" d="M467.6 396.6l23.4 9.9"/><path class="kdm" d="M467.8 396.2l23.4 9.9"/><path class="kbi" d="M491.6 403.7l-3 7"/><path class="kcj" d="M434.8 417.2l15.1 -15.1"/><path class="kck" d="M434 416.4l15.1 -15.1"/><path class="kcl" d="M433.6 416.1l15.1 -15.1"/><path class="kh" d="M446.6 399.7l5.7 5.6"/><path class="kcw" d="M790.9 466.5l15.3 -15.4"/><path class="kdc" d="M790.2 465.7l15.3 -15.4"/><path class="kcy" d="M789.8 465.4l15.3 -15.4"/><path class="kab" d="M803.1 448.8l5.4 5.4"/><path class="kbf" d="M871.4 464.7l23.1 9.7"/><path class="kbg" d="M871.9 463.7l23.1 9.7"/><path class="kbh" d="M872 463.2l23.1 9.7"/><path class="kbi" d="M895.5 470.5l-3.1 7.4"/><path class="ky" d="M828.7 766.4l0 11.8"/><path class="kz" d="M826.7 766.4l0 11.8"/><path class="kaa" d="M825.9 766.4l0 11.8"/><path class="kab" d="M835.7 777.5l-14 0"/><path class="ki" d="M928.3 529.1l0 11.8"/><path class="kj" d="M926.4 529.1l0 11.8"/><path class="kk" d="M925.5 529.1l0 11.8"/><path class="kl" d="M935.3 540.2l-14 0"/><path class="kbv" d="M350 628.6l-2.3 4.6"/><path class="kbw" d="M349 628.1l-2.3 4.6"/><path class="kbx" d="M348.6 627.8l-2.3 4.6"/><path class="kbi" d="M351.6 634.4l-7.1 -3.6"/><path class="kdn" d="M534.2 460.7l23.4 9.9"/><path class="kdo" d="M534.6 459.7l23.4 9.9"/><path class="kdp" d="M534.8 459.3l23.4 9.9"/><path class="kbm" d="M558.5 466.9l-3 7"/><path class="kdn" d="M690.5 618.3l23.4 9.9"/><path class="kdo" d="M690.9 617.3l23.4 9.9"/><path class="kdp" d="M691.1 616.9l23.4 9.9"/><path class="kbm" d="M714.8 624.4l-3 7"/><path class="kcj" d="M406.3 480.7l15.1 -15.1"/><path class="kck" d="M405.5 479.9l15.1 -15.1"/><path class="kcl" d="M405.2 479.6l15.1 -15.1"/><path class="kh" d="M418.1 463.2l5.7 5.6"/><path class="kq" d="M805 403.1l0 11.8"/><path class="kac" d="M803 403.1l0 11.8"/><path class="kad" d="M802.2 403.1l0 11.8"/><path class="kae" d="M812 414.3l-14 0"/><path class="kcz" d="M519 629l15.3 -15.4"/><path class="kda" d="M518.2 628.2l15.3 -15.4"/><path class="kdb" d="M517.9 627.9l15.3 -15.4"/><path class="kh" d="M531.2 611.3l5.4 5.4"/><path class="ke" d="M482.3 751.8l0 11.8"/><path class="kn" d="M480.4 751.8l0 11.8"/><path class="ko" d="M479.5 751.8l0 11.8"/><path class="kh" d="M489.3 763l-14 0"/><path class="kbr" d="M774.9 354.1l24.5 10.3"/><path class="kbs" d="M775.3 353.1l24.5 10.3"/><path class="kbt" d="M775.5 352.7l24.5 10.3"/><path class="kbu" d="M800.3 360.7l-3 7"/><path class="kbj" d="M484.2 786.1l23.1 9.7"/><path class="kbk" d="M484.7 785l23.1 9.7"/><path class="kbl" d="M484.8 784.6l23.1 9.7"/><path class="kbm" d="M508.3 791.9l-3.1 7.4"/><path class="kby" d="M761.6 348.6l23.1 9.7"/><path class="kbk" d="M762 347.5l23.1 9.7"/><path class="kbl" d="M762.2 347.1l23.1 9.7"/><path class="kbu" d="M785.6 354.4l-3.1 7.4"/><path class="km" d="M359 625.9l0 11.8"/><path class="kn" d="M357 625.9l0 11.8"/><path class="ko" d="M356.2 625.9l0 11.8"/><path class="kp" d="M366 637.1l-14 0"/><path class="ka" d="M458.7 388.6l0 11.8"/><path class="kb" d="M456.7 388.6l0 11.8"/><path class="kc" d="M455.9 388.6l0 11.8"/><path class="kd" d="M465.7 399.8l-14 0"/><path class="kcz" d="M634.7 351.4l15.3 -15.4"/><path class="kda" d="M633.9 350.6l15.3 -15.4"/><path class="kdb" d="M633.6 350.3l15.3 -15.4"/><path class="kh" d="M646.9 333.8l5.4 5.4"/><path class="kbv" d="M347.8 632.1l1.5 4.8"/><path class="kbw" d="M348.9 631.7l1.5 4.8"/><path class="kbx" d="M349.3 631.6l1.5 4.8"/><path class="kbi" d="M353 635.1l-7.6 2.4"/><path class="kcz" d="M718.6 630.7l15.3 -15.4"/><path class="kda" d="M717.9 629.9l15.3 -15.4"/><path class="kdb" d="M717.5 629.6l15.3 -15.4"/><path class="kh" d="M730.8 613.1l5.4 5.4"/><path class="kaq" d="M589.9 352.4l0 15.2"/><path class="kar" d="M588.4 352.4l0 15.2"/><path class="kas" d="M587.8 352.4l0 15.2"/><path class="kat" d="M595.1 367l-10.4 0"/><path class="kbr" d="M487.9 795.4l24.5 10.3"/><path class="kbs" d="M488.3 794.4l24.5 10.3"/><path class="kbt" d="M488.5 794l24.5 10.3"/><path class="kbu" d="M513.3 801.9l-3 7"/><path class="kby" d="M827.5 411.3l23.1 9.7"/><path class="kbk" d="M827.9 410.2l23.1 9.7"/><path class="kbl" d="M828.1 409.8l23.1 9.7"/><path class="kbu" d="M851.6 417.1l-3.1 7.4"/><path class="kcj" d="M861.7 642.6l15.1 -15.1"/><path class="kcs" d="M860.9 641.8l15.1 -15.1"/><path class="kcl" d="M860.6 641.5l15.1 -15.1"/><path class="kh" d="M873.5 625.1l5.7 5.6"/><path class="kdk" d="M489.5 407l23.4 9.9"/><path class="kdl" d="M489.9 406l23.4 9.9"/><path class="kdm" d="M490.1 405.6l23.4 9.9"/><path class="kbi" d="M513.9 413.1l-3 7"/><path class="kbv" d="M348.7 635.9l4.8 3.5"/><path class="kbw" d="M349.3 635l4.8 3.5"/><path class="kbx" d="M349.6 634.7l4.8 3.5"/><path class="kbi" d="M355.3 635.8l-4.7 6.5"/><path class="kcz" d="M605.7 415.3l15.3 -15.4"/><path class="kda" d="M605 414.6l15.3 -15.4"/><path class="kdb" d="M604.7 414.2l15.3 -15.4"/><path class="kh" d="M617.9 397.7l5.4 5.4"/><ellipse cx="789.0" cy="521.2" rx="5.2" ry="3.3" fill="#3c3cae"/><path class="ky" d="M828.7 755.8l0 11.8"/><path class="kz" d="M826.7 755.8l0 11.8"/><path class="kaa" d="M825.9 755.8l0 11.8"/><path class="kab" d="M835.7 767l-14 0"/><path class="ki" d="M928.3 518.5l0 11.8"/><path class="kj" d="M926.4 518.5l0 11.8"/><path class="kk" d="M925.5 518.5l0 11.8"/><path class="kl" d="M935.3 529.7l-14 0"/><path class="ke" d="M605.7 867.2l0 11.8"/><path class="kn" d="M603.7 867.2l0 11.8"/><path class="ko" d="M602.9 867.2l0 11.8"/><path class="kh" d="M612.7 878.3l-14 0"/><path class="kbz" d="M893.4 473.9l23.1 9.7"/><path class="kca" d="M893.8 472.9l23.1 9.7"/><path class="kcb" d="M894 472.5l23.1 9.7"/><path class="kcc" d="M917.5 479.8l-3.1 7.4"/><path class="kq" d="M805 392.6l0 11.8"/><path class="kac" d="M803 392.6l0 11.8"/><path class="kad" d="M802.2 392.6l0 11.8"/><path class="kae" d="M812 403.7l-14 0"/><path class="kcj" d="M449 368l15.1 -15.1"/><path class="kck" d="M448.2 367.3l15.1 -15.1"/><path class="kcl" d="M447.9 366.9l15.1 -15.1"/><path class="kh" d="M460.8 350.5l5.7 5.6"/><path class="kdd" d="M805.4 417l15.3 -15.4"/><path class="kde" d="M804.6 416.3l15.3 -15.4"/><path class="kdf" d="M804.3 416l15.3 -15.4"/><path class="kdg" d="M817.6 399.4l5.4 5.4"/><path class="ke" d="M482.3 741.3l0 11.8"/><path class="kn" d="M480.4 741.3l0 11.8"/><path class="ko" d="M479.5 741.3l0 11.8"/><path class="kh" d="M489.3 752.4l-14 0"/><path class="kdn" d="M556.5 470.1l23.4 9.9"/><path class="kdo" d="M556.9 469.1l23.4 9.9"/><path class="kdp" d="M557.1 468.7l23.4 9.9"/><path class="kbm" d="M580.9 476.3l-3 7"/><path class="kdn" d="M712.8 627.7l23.4 9.9"/><path class="kdo" d="M713.2 626.7l23.4 9.9"/><path class="kdp" d="M713.4 626.3l23.4 9.9"/><path class="kbm" d="M737.1 633.8l-3 7"/><path class="kcz" d="M646.3 794.9l15.3 -15.4"/><path class="kda" d="M645.5 794.1l15.3 -15.4"/><path class="kdb" d="M645.2 793.8l15.3 -15.4"/><path class="kh" d="M658.5 777.3l5.4 5.4"/><path class="kcz" d="M576.8 479.2l15.3 -15.4"/><path class="kda" d="M576.1 478.5l15.3 -15.4"/><path class="kdb" d="M575.7 478.2l15.3 -15.4"/><path class="kh" d="M589 461.6l5.4 5.4"/><path class="km" d="M359 615.3l0 11.8"/><path class="kn" d="M357 615.3l0 11.8"/><path class="ko" d="M356.2 615.3l0 11.8"/><path class="kp" d="M366 626.5l-14 0"/><path class="ka" d="M458.7 378l0 11.8"/><path class="kb" d="M456.7 378l0 11.8"/><path class="kc" d="M455.9 378l0 11.8"/><path class="kd" d="M465.7 389.2l-14 0"/><path class="kcj" d="M790.5 805.7l15.1 -15.1"/><path class="kcs" d="M789.7 804.9l15.1 -15.1"/><path class="kcl" d="M789.4 804.6l15.1 -15.1"/><path class="kh" d="M802.4 788.2l5.7 5.6"/><path class="kcj" d="M420.5 431.5l15.1 -15.1"/><path class="kck" d="M419.7 430.7l15.1 -15.1"/><path class="kcl" d="M419.4 430.4l15.1 -15.1"/><path class="kh" d="M432.4 414l5.7 5.6"/><path class="kbj" d="M506.2 795.3l23.1 9.7"/><path class="kbk" d="M506.6 794.3l23.1 9.7"/><path class="kbl" d="M506.8 793.8l23.1 9.7"/><path class="kbm" d="M530.3 801.1l-3.1 7.4"/><path class="kbr" d="M798.3 363.9l24.5 10.3"/><path class="kbs" d="M798.7 363l24.5 10.3"/><path class="kbt" d="M798.9 362.5l24.5 10.3"/><path class="kbu" d="M823.7 370.5l-3 7"/><path class="kby" d="M783.5 357.8l23.1 9.7"/><path class="kbk" d="M784 356.8l23.1 9.7"/><path class="kbl" d="M784.2 356.4l23.1 9.7"/><path class="kbu" d="M807.6 363.6l-3.1 7.4"/><path class="kdt" d="M352.4 638.8l23.1 9.7"/><path class="kdu" d="M352.8 637.8l23.1 9.7"/><path class="kdv" d="M353 637.4l23.1 9.7"/><path class="kdw" d="M376.5 644.6l-3.1 7.4"/><path class="kcz" d="M776.5 481l15.3 -15.4"/><path class="kda" d="M775.7 480.2l15.3 -15.4"/><path class="kdb" d="M775.4 479.9l15.3 -15.4"/><path class="kh" d="M788.7 463.4l5.4 5.4"/><path class="kdh" d="M444.9 353.2l23.4 9.9"/><path class="kdi" d="M445.3 352.3l23.4 9.9"/><path class="kdj" d="M445.5 351.8l23.4 9.9"/><path class="kaj" d="M469.2 359.4l-3 7"/><path class="kaq" d="M589.9 338.4l0 15.2"/><path class="kar" d="M588.4 338.4l0 15.2"/><path class="kas" d="M587.8 338.4l0 15.2"/><path class="kat" d="M595.1 353l-10.4 0"/><path class="kbv" d="M920.2 486.6l-4.8 -3.5"/><path class="kbw" d="M920.9 485.6l-4.8 -3.5"/><path class="kbx" d="M921.1 485.3l-4.8 -3.5"/><path class="kbi" d="M913.6 486.7l4.7 -6.5"/><path class="kcj" d="M392.1 495l15.1 -15.1"/><path class="kck" d="M391.3 494.2l15.1 -15.1"/><path class="kcl" d="M390.9 493.9l15.1 -15.1"/><path class="kh" d="M403.9 477.5l5.7 5.6"/><path class="ky" d="M828.7 745.2l0 11.8"/><path class="kz" d="M826.7 745.2l0 11.8"/><path class="kaa" d="M825.9 745.2l0 11.8"/><path class="kab" d="M835.7 756.4l-14 0"/><path class="ki" d="M928.3 507.9l0 11.8"/><path class="kj" d="M926.4 507.9l0 11.8"/><path class="kk" d="M925.5 507.9l0 11.8"/><path class="kl" d="M935.3 519.1l-14 0"/><path class="kbf" d="M849.5 420.5l23.1 9.7"/><path class="kbg" d="M849.9 419.5l23.1 9.7"/><path class="kbh" d="M850.1 419l23.1 9.7"/><path class="kbi" d="M873.5 426.3l-3.1 7.4"/><path class="kbr" d="M511.3 805.2l24.5 10.3"/><path class="kbs" d="M511.7 804.2l24.5 10.3"/><path class="kbt" d="M511.9 803.8l24.5 10.3"/><path class="kbu" d="M536.7 811.8l-3 7"/><path class="ke" d="M605.7 856.6l0 11.8"/><path class="kn" d="M603.7 856.6l0 11.8"/><path class="ko" d="M602.9 856.6l0 11.8"/><path class="kh" d="M612.7 867.8l-14 0"/><path class="kcz" d="M504.5 643.5l15.3 -15.4"/><path class="kda" d="M503.8 642.7l15.3 -15.4"/><path class="kdb" d="M503.4 642.4l15.3 -15.4"/><path class="kh" d="M516.7 625.8l5.4 5.4"/><path class="kdn" d="M511.8 416.4l23.4 9.9"/><path class="kdo" d="M512.3 415.4l23.4 9.9"/><path class="kdp" d="M512.4 415l23.4 9.9"/><path class="kbm" d="M536.2 422.5l-3 7"/><path class="ka" d="M805 382l0 11.8"/><path class="kb" d="M803 382l0 11.8"/><path class="kc" d="M802.2 382l0 11.8"/><path class="kd" d="M812 393.2l-14 0"/><path class="ke" d="M482.3 730.7l0 11.8"/><path class="kn" d="M480.4 730.7l0 11.8"/><path class="ko" d="M479.5 730.7l0 11.8"/><path class="kh" d="M489.3 741.9l-14 0"/><path class="kcz" d="M620.2 365.9l15.3 -15.4"/><path class="kda" d="M619.5 365.1l15.3 -15.4"/><path class="kdb" d="M619.1 364.8l15.3 -15.4"/><path class="kh" d="M632.4 348.3l5.4 5.4"/><path class="kbv" d="M921.1 490.4l-1.5 -4.8"/><path class="kbw" d="M922.1 490.1l-1.5 -4.8"/><path class="kbx" d="M922.6 489.9l-1.5 -4.8"/><path class="kbi" d="M915.9 487.4l7.6 -2.4"/><path class="km" d="M359 604.8l0 11.8"/><path class="kn" d="M357 604.8l0 11.8"/><path class="ko" d="M356.2 604.8l0 11.8"/><path class="kp" d="M366 615.9l-14 0"/><path class="ka" d="M458.7 367.5l0 11.8"/><path class="kb" d="M456.7 367.5l0 11.8"/><path class="kc" d="M455.9 367.5l0 11.8"/><path class="kd" d="M465.7 378.6l-14 0"/><path class="kcz" d="M704.1 645.2l15.3 -15.4"/><path class="kda" d="M703.4 644.4l15.3 -15.4"/><path class="kdb" d="M703.1 644.1l15.3 -15.4"/><path class="kh" d="M716.3 627.6l5.4 5.4"/><ellipse cx="493.0" cy="534.4" rx="5.2" ry="3.3" fill="#7878a8"/><path class="kdn" d="M578.8 479.5l23.4 9.9"/><path class="kdo" d="M579.2 478.6l23.4 9.9"/><path class="kdp" d="M579.4 478.1l23.4 9.9"/><path class="kbm" d="M603.2 485.7l-3 7"/><path class="kdn" d="M735.1 637.1l23.4 9.9"/><path class="kdo" d="M735.5 636.1l23.4 9.9"/><path class="kdp" d="M735.7 635.7l23.4 9.9"/><path class="kbm" d="M759.5 643.2l-3 7"/><path class="kcj" d="M847.5 656.9l15.1 -15.1"/><path class="kcs" d="M846.7 656.1l15.1 -15.1"/><path class="kcl" d="M846.3 655.8l15.1 -15.1"/><path class="kh" d="M859.3 639.4l5.7 5.6"/><path class="kbj" d="M528.2 804.6l23.1 9.7"/><path class="kbk" d="M528.6 803.6l23.1 9.7"/><path class="kbl" d="M528.8 803.1l23.1 9.7"/><path class="kbm" d="M552.2 810.4l-3.1 7.4"/><path class="kcz" d="M591.3 429.8l15.3 -15.4"/><path class="kda" d="M590.5 429.1l15.3 -15.4"/><path class="kdb" d="M590.2 428.8l15.3 -15.4"/><path class="kh" d="M603.5 412.2l5.4 5.4"/><path class="kbv" d="M918.8 493.9l2.3 -4.6"/><path class="kbw" d="M917.8 493.4l2.3 -4.6"/><path class="kbx" d="M917.4 493.2l2.3 -4.6"/><path class="kbi" d="M917.3 488.1l7.1 3.6"/><path class="kby" d="M805.5 367.1l23.1 9.7"/><path class="kbk" d="M805.9 366.1l23.1 9.7"/><path class="kbl" d="M806.1 365.6l23.1 9.7"/><path class="kbu" d="M829.6 372.9l-3.1 7.4"/><path class="kdx" d="M374.4 648.1l23.1 9.7"/><path class="kdy" d="M374.8 647.1l23.1 9.7"/><path class="kdz" d="M375 646.6l23.1 9.7"/><path class="kbi" d="M398.4 653.9l-3.1 7.4"/><path class="kdk" d="M467.2 362.7l23.4 9.9"/><path class="kdl" d="M467.6 361.7l23.4 9.9"/><path class="kdm" d="M467.8 361.3l23.4 9.9"/><path class="kbi" d="M491.6 368.8l-3 7"/><path class="ky" d="M828.7 734.7l0 11.8"/><path class="kz" d="M826.7 734.7l0 11.8"/><path class="kaa" d="M825.9 734.7l0 11.8"/><path class="kab" d="M835.7 745.8l-14 0"/><path class="ki" d="M928.3 497.4l0 11.8"/><path class="kj" d="M926.4 497.4l0 11.8"/><path class="kk" d="M925.5 497.4l0 11.8"/><path class="kl" d="M935.3 508.5l-14 0"/><path class="kcj" d="M434.8 382.3l15.1 -15.1"/><path class="kck" d="M434 381.5l15.1 -15.1"/><path class="kcl" d="M433.6 381.2l15.1 -15.1"/><path class="kh" d="M446.6 364.8l5.7 5.6"/><path class="ke" d="M605.7 846.1l0 11.8"/><path class="kn" d="M603.7 846.1l0 11.8"/><path class="ko" d="M602.9 846.1l0 11.8"/><path class="kh" d="M612.7 857.2l-14 0"/><path class="kcw" d="M790.9 431.6l15.3 -15.4"/><path class="kdc" d="M790.2 430.8l15.3 -15.4"/><path class="kcy" d="M789.8 430.5l15.3 -15.4"/><path class="kab" d="M803.1 413.9l5.4 5.4"/><path class="ka" d="M805 371.5l0 11.8"/><path class="kb" d="M803 371.5l0 11.8"/><path class="kc" d="M802.2 371.5l0 11.8"/><path class="kd" d="M812 382.6l-14 0"/><path class="kcw" d="M631.8 809.4l15.3 -15.4"/><path class="kcx" d="M631.1 808.7l15.3 -15.4"/><path class="kcy" d="M630.8 808.3l15.3 -15.4"/><path class="kt" d="M644 791.8l5.4 5.4"/><path class="kbf" d="M871.4 429.8l23.1 9.7"/><path class="kbg" d="M871.9 428.7l23.1 9.7"/><path class="kbh" d="M872 428.3l23.1 9.7"/><path class="kbi" d="M895.5 435.6l-3.1 7.4"/><path class="kan" d="M589.9 324.3l0 15.2"/><path class="kao" d="M588.4 324.3l0 15.2"/><path class="kap" d="M587.8 324.3l0 15.2"/><path class="kd" d="M595.1 339l-10.4 0"/><path class="kcz" d="M562.4 493.8l15.3 -15.4"/><path class="kda" d="M561.6 493l15.3 -15.4"/><path class="kdb" d="M561.3 492.7l15.3 -15.4"/><path class="kh" d="M574.6 476.1l5.4 5.4"/><path class="ke" d="M482.3 720.1l0 11.8"/><path class="kn" d="M480.4 720.1l0 11.8"/><path class="ko" d="M479.5 720.1l0 11.8"/><path class="kh" d="M489.3 731.3l-14 0"/><path class="kcj" d="M776.3 820l15.1 -15.1"/><path class="kcs" d="M775.5 819.2l15.1 -15.1"/><path class="kcl" d="M775.2 818.9l15.1 -15.1"/><path class="kh" d="M788.1 802.5l5.7 5.6"/><path class="kbr" d="M534.6 815.1l24.5 10.3"/><path class="kbs" d="M535.1 814.1l24.5 10.3"/><path class="kbt" d="M535.2 813.7l24.5 10.3"/><path class="kbu" d="M560 821.6l-3 7"/><ellipse cx="458.7" cy="368.1" rx="7.0" ry="4.5" fill="#3636d8"/><path class="kdn" d="M534.2 425.8l23.4 9.9"/><path class="kdo" d="M534.6 424.8l23.4 9.9"/><path class="kdp" d="M534.8 424.4l23.4 9.9"/><path class="kbm" d="M558.5 431.9l-3 7"/><path class="km" d="M359 594.2l0 11.8"/><path class="kn" d="M357 594.2l0 11.8"/><path class="ko" d="M356.2 594.2l0 11.8"/><path class="kp" d="M366 605.4l-14 0"/><path class="kcj" d="M406.3 445.8l15.1 -15.1"/><path class="kck" d="M405.5 445l15.1 -15.1"/><path class="kcl" d="M405.2 444.7l15.1 -15.1"/><path class="kh" d="M418.1 428.3l5.7 5.6"/><path class="kcz" d="M762 495.5l15.3 -15.4"/><path class="kda" d="M761.2 494.7l15.3 -15.4"/><path class="kdb" d="M760.9 494.4l15.3 -15.4"/><path class="kh" d="M774.2 477.9l5.4 5.4"/><path class="kdn" d="M601.2 488.9l23.4 9.9"/><path class="kdo" d="M601.6 488l23.4 9.9"/><path class="kdp" d="M601.7 487.5l23.4 9.9"/><path class="kbm" d="M625.5 495.1l-3 7"/><path class="kdn" d="M757.4 646.5l23.4 9.9"/><path class="kdo" d="M757.9 645.5l23.4 9.9"/><path class="kdp" d="M758 645.1l23.4 9.9"/><path class="kbm" d="M781.8 652.6l-3 7"/><path class="kcj" d="M377.8 509.3l15.1 -15.1"/><path class="kck" d="M377 508.5l15.1 -15.1"/><path class="kcl" d="M376.7 508.2l15.1 -15.1"/><path class="kh" d="M389.7 491.8l5.7 5.6"/><path class="kcm" d="M904.4 508.1l15.1 -15.1"/><path class="kcn" d="M903.6 507.3l15.1 -15.1"/><path class="kco" d="M903.3 507l15.1 -15.1"/><path class="kh" d="M916.3 490.6l5.7 5.6"/><path class="ky" d="M828.7 724.1l0 11.8"/><path class="kz" d="M826.7 724.1l0 11.8"/><path class="kaa" d="M825.9 724.1l0 11.8"/><path class="kab" d="M835.7 735.3l-14 0"/><path class="ki" d="M928.3 486.8l0 11.8"/><path class="kj" d="M926.4 486.8l0 11.8"/><path class="kk" d="M925.5 486.8l0 11.8"/><path class="kl" d="M935.3 498l-14 0"/><path class="kbj" d="M550.1 813.8l23.1 9.7"/><path class="kbk" d="M550.6 812.8l23.1 9.7"/><path class="kbl" d="M550.8 812.4l23.1 9.7"/><path class="kbm" d="M574.2 819.7l-3.1 7.4"/><path class="kcw" d="M490 658l15.3 -15.4"/><path class="kcx" d="M489.3 657.2l15.3 -15.4"/><path class="kcy" d="M489 656.9l15.3 -15.4"/><path class="kt" d="M502.2 640.4l5.4 5.4"/><path class="kby" d="M827.5 376.3l23.1 9.7"/><path class="kbk" d="M827.9 375.3l23.1 9.7"/><path class="kbl" d="M828.1 374.9l23.1 9.7"/><path class="kbu" d="M851.6 382.2l-3.1 7.4"/><ellipse cx="805.0" cy="372.1" rx="7.0" ry="4.5" fill="#3636d8"/><ellipse cx="729.0" cy="930.3" rx="7.0" ry="4.5" fill="#2a2aae"/><path class="ke" d="M605.7 835.5l0 11.8"/><path class="kn" d="M603.7 835.5l0 11.8"/><path class="ko" d="M602.9 835.5l0 11.8"/><path class="kh" d="M612.7 846.7l-14 0"/><path class="kdx" d="M396.3 657.4l23.1 9.7"/><path class="kdy" d="M396.8 656.3l23.1 9.7"/><path class="kdz" d="M397 655.9l23.1 9.7"/><path class="kbi" d="M420.4 663.2l-3.1 7.4"/><path class="kdk" d="M489.5 372.1l23.4 9.9"/><path class="kdl" d="M489.9 371.1l23.4 9.9"/><path class="kdm" d="M490.1 370.7l23.4 9.9"/><path class="kbi" d="M513.9 378.2l-3 7"/><path class="kcz" d="M605.7 380.4l15.3 -15.4"/><path class="kda" d="M605 379.7l15.3 -15.4"/><path class="kdb" d="M604.7 379.3l15.3 -15.4"/><path class="kh" d="M617.9 362.8l5.4 5.4"/><path class="ke" d="M482.3 709.6l0 11.8"/><path class="kn" d="M480.4 709.6l0 11.8"/><path class="ko" d="M479.5 709.6l0 11.8"/><path class="kh" d="M489.3 720.7l-14 0"/><path class="kcz" d="M689.7 659.7l15.3 -15.4"/><path class="kda" d="M688.9 659l15.3 -15.4"/><path class="kdb" d="M688.6 658.6l15.3 -15.4"/><path class="kh" d="M701.9 642.1l5.4 5.4"/><ellipse cx="589.9" cy="324.9" rx="5.2" ry="3.3" fill="#3636d8"/><path class="km" d="M359 583.7l0 11.8"/><path class="kn" d="M357 583.7l0 11.8"/><path class="ko" d="M356.2 583.7l0 11.8"/><path class="kp" d="M366 594.8l-14 0"/><path class="kbz" d="M893.4 439l23.1 9.7"/><path class="kca" d="M893.8 438l23.1 9.7"/><path class="kcb" d="M894 437.6l23.1 9.7"/><path class="kcc" d="M917.5 444.9l-3.1 7.4"/><path class="kdd" d="M805.4 382.1l15.3 -15.4"/><path class="kde" d="M804.6 381.4l15.3 -15.4"/><path class="kdf" d="M804.3 381.1l15.3 -15.4"/><path class="kdg" d="M817.6 364.5l5.4 5.4"/><path class="kcj" d="M833.2 671.2l15.1 -15.1"/><path class="kcs" d="M832.5 670.4l15.1 -15.1"/><path class="kcl" d="M832.1 670.1l15.1 -15.1"/><path class="kh" d="M845.1 653.7l5.7 5.6"/><path class="kdn" d="M556.5 435.2l23.4 9.9"/><path class="kdo" d="M556.9 434.2l23.4 9.9"/><path class="kdp" d="M557.1 433.8l23.4 9.9"/><path class="kbm" d="M580.9 441.4l-3 7"/><path class="kbr" d="M558 824.9l24.5 10.3"/><path class="kbs" d="M558.4 823.9l24.5 10.3"/><path class="kbt" d="M558.6 823.5l24.5 10.3"/><path class="kbu" d="M583.4 831.5l-3 7"/><path class="kcz" d="M576.8 444.3l15.3 -15.4"/><path class="kda" d="M576.1 443.6l15.3 -15.4"/><path class="kdb" d="M575.7 443.3l15.3 -15.4"/><path class="kh" d="M589 426.7l5.4 5.4"/><path class="kcj" d="M420.5 396.6l15.1 -15.1"/><path class="kck" d="M419.7 395.8l15.1 -15.1"/><path class="kcl" d="M419.4 395.5l15.1 -15.1"/><path class="kh" d="M432.4 379.1l5.7 5.6"/><path class="ky" d="M828.7 713.6l0 11.8"/><path class="kz" d="M826.7 713.6l0 11.8"/><path class="kaa" d="M825.9 713.6l0 11.8"/><path class="kab" d="M835.7 724.7l-14 0"/><path class="ki" d="M928.3 476.3l0 11.8"/><path class="kj" d="M926.4 476.3l0 11.8"/><path class="kk" d="M925.5 476.3l0 11.8"/><path class="kl" d="M935.3 487.4l-14 0"/><path class="kaz" d="M789 506.5l0 15.2"/><path class="kba" d="M787.6 506.5l0 15.2"/><path class="kbb" d="M787 506.5l0 15.2"/><path class="kam" d="M794.2 521.2l-10.4 0"/><path class="kcz" d="M776.5 446.1l15.3 -15.4"/><path class="kda" d="M775.7 445.3l15.3 -15.4"/><path class="kdb" d="M775.4 445l15.3 -15.4"/><path class="kh" d="M788.7 428.4l5.4 5.4"/><path class="kdn" d="M623.5 498.4l23.4 9.9"/><path class="kdo" d="M623.9 497.4l23.4 9.9"/><path class="kdp" d="M624.1 497l23.4 9.9"/><path class="kbm" d="M647.8 504.5l-3 7"/><path class="kdk" d="M779.8 655.9l23.4 9.9"/><path class="kdl" d="M780.2 654.9l23.4 9.9"/><path class="kdm" d="M780.4 654.5l23.4 9.9"/><path class="kbi" d="M804.1 662l-3 7"/><path class="kcw" d="M617.4 823.9l15.3 -15.4"/><path class="kcx" d="M616.6 823.2l15.3 -15.4"/><path class="kcy" d="M616.3 822.8l15.3 -15.4"/><path class="kt" d="M629.6 806.3l5.4 5.4"/><path class="ke" d="M605.7 824.9l0 11.8"/><path class="kn" d="M603.7 824.9l0 11.8"/><path class="ko" d="M602.9 824.9l0 11.8"/><path class="kh" d="M612.7 836.1l-14 0"/><path class="kcz" d="M547.9 508.3l15.3 -15.4"/><path class="kda" d="M547.1 507.5l15.3 -15.4"/><path class="kdb" d="M546.8 507.2l15.3 -15.4"/><path class="kh" d="M560.1 490.7l5.4 5.4"/><path class="kcj" d="M762.1 834.3l15.1 -15.1"/><path class="kcs" d="M761.3 833.5l15.1 -15.1"/><path class="kcl" d="M760.9 833.2l15.1 -15.1"/><path class="kh" d="M773.9 816.8l5.7 5.6"/><path class="kbv" d="M920.2 451.7l-4.8 -3.5"/><path class="kbw" d="M920.9 450.7l-4.8 -3.5"/><path class="kbx" d="M921.1 450.4l-4.8 -3.5"/><path class="kbi" d="M913.6 451.8l4.7 -6.5"/><path class="kbj" d="M572.1 823.1l23.1 9.7"/><path class="kbk" d="M572.5 822.1l23.1 9.7"/><path class="kbl" d="M572.7 821.6l23.1 9.7"/><path class="kbm" d="M596.2 828.9l-3.1 7.4"/><path class="ke" d="M482.3 699l0 11.8"/><path class="kn" d="M480.4 699l0 11.8"/><path class="ko" d="M479.5 699l0 11.8"/><path class="kh" d="M489.3 710.2l-14 0"/><path class="kcj" d="M392.1 460.1l15.1 -15.1"/><path class="kck" d="M391.3 459.3l15.1 -15.1"/><path class="kcl" d="M390.9 459l15.1 -15.1"/><path class="kh" d="M403.9 442.6l5.7 5.6"/><path class="kbf" d="M849.5 385.6l23.1 9.7"/><path class="kbg" d="M849.9 384.6l23.1 9.7"/><path class="kbh" d="M850.1 384.1l23.1 9.7"/><path class="kbi" d="M873.5 391.4l-3.1 7.4"/><path class="kbj" d="M418.3 666.6l23.1 9.7"/><path class="kbk" d="M418.7 665.6l23.1 9.7"/><path class="kbl" d="M418.9 665.1l23.1 9.7"/><path class="kbm" d="M442.4 672.4l-3.1 7.4"/><path class="km" d="M359 573.1l0 11.8"/><path class="kn" d="M357 573.1l0 11.8"/><path class="ko" d="M356.2 573.1l0 11.8"/><path class="kp" d="M366 584.3l-14 0"/><path class="kdn" d="M511.8 381.5l23.4 9.9"/><path class="kdo" d="M512.3 380.5l23.4 9.9"/><path class="kdp" d="M512.4 380.1l23.4 9.9"/><path class="kbm" d="M536.2 387.6l-3 7"/><path class="kcz" d="M747.5 510l15.3 -15.4"/><path class="kda" d="M746.8 509.2l15.3 -15.4"/><path class="kdb" d="M746.5 508.9l15.3 -15.4"/><path class="kh" d="M759.7 492.4l5.4 5.4"/><path class="kbv" d="M921.1 455.5l-1.5 -4.8"/><path class="kbw" d="M922.1 455.2l-1.5 -4.8"/><path class="kbx" d="M922.6 455l-1.5 -4.8"/><path class="kbi" d="M915.9 452.5l7.6 -2.4"/><path class="kcg" d="M363.6 523.6l15.1 -15.1"/><path class="kch" d="M362.8 522.8l15.1 -15.1"/><path class="kci" d="M362.5 522.4l15.1 -15.1"/><path class="kt" d="M375.4 506l5.7 5.6"/><path class="kcj" d="M890.2 522.4l15.1 -15.1"/><path class="kcs" d="M889.4 521.6l15.1 -15.1"/><path class="kcl" d="M889.1 521.3l15.1 -15.1"/><path class="kh" d="M902 504.9l5.7 5.6"/><path class="kdn" d="M578.8 444.6l23.4 9.9"/><path class="kdo" d="M579.2 443.6l23.4 9.9"/><path class="kdp" d="M579.4 443.2l23.4 9.9"/><path class="kbm" d="M603.2 450.8l-3 7"/><path class="kcw" d="M475.6 672.5l15.3 -15.4"/><path class="kcx" d="M474.8 671.7l15.3 -15.4"/><path class="kcy" d="M474.5 671.4l15.3 -15.4"/><path class="kt" d="M487.8 654.9l5.4 5.4"/><path class="kbr" d="M581.3 834.7l24.5 10.3"/><path class="kbs" d="M581.8 833.8l24.5 10.3"/><path class="kbt" d="M581.9 833.3l24.5 10.3"/><path class="kbu" d="M606.7 841.3l-3 7"/><path class="ky" d="M828.7 703l0 11.8"/><path class="kz" d="M826.7 703l0 11.8"/><path class="kaa" d="M825.9 703l0 11.8"/><path class="kab" d="M835.7 714.2l-14 0"/><path class="ka" d="M928.3 465.7l0 11.8"/><path class="kb" d="M926.4 465.7l0 11.8"/><path class="kc" d="M925.5 465.7l0 11.8"/><path class="kd" d="M935.3 476.9l-14 0"/><path class="kcz" d="M591.3 394.9l15.3 -15.4"/><path class="kda" d="M590.5 394.2l15.3 -15.4"/><path class="kdb" d="M590.2 393.9l15.3 -15.4"/><path class="kh" d="M603.5 377.3l5.4 5.4"/><path class="kbv" d="M918.8 459l2.3 -4.6"/><path class="kbw" d="M917.8 458.5l2.3 -4.6"/><path class="kbx" d="M917.4 458.3l2.3 -4.6"/><path class="kbi" d="M917.3 453.1l7.1 3.6"/><path class="ke" d="M605.7 814.4l0 11.8"/><path class="kn" d="M603.7 814.4l0 11.8"/><path class="ko" d="M602.9 814.4l0 11.8"/><path class="kh" d="M612.7 825.5l-14 0"/><path class="kcz" d="M675.2 674.2l15.3 -15.4"/><path class="kda" d="M674.5 673.5l15.3 -15.4"/><path class="kdb" d="M674.1 673.1l15.3 -15.4"/><path class="kh" d="M687.4 656.6l5.4 5.4"/><path class="ke" d="M482.3 688.5l0 11.8"/><path class="kn" d="M480.4 688.5l0 11.8"/><path class="ko" d="M479.5 688.5l0 11.8"/><path class="kh" d="M489.3 699.6l-14 0"/><path class="kdn" d="M645.8 507.8l23.4 9.9"/><path class="kdo" d="M646.2 506.8l23.4 9.9"/><path class="kdp" d="M646.4 506.4l23.4 9.9"/><path class="kbm" d="M670.2 513.9l-3 7"/><path class="kdk" d="M802.1 665.3l23.4 9.9"/><path class="kdl" d="M802.5 664.3l23.4 9.9"/><path class="kdm" d="M802.7 663.9l23.4 9.9"/><path class="kbi" d="M826.5 671.5l-3 7"/><path class="kan" d="M789 492.5l0 15.2"/><path class="kao" d="M787.6 492.5l0 15.2"/><path class="kap" d="M787 492.5l0 15.2"/><path class="kd" d="M794.2 507.1l-10.4 0"/><path class="ki" d="M359 562.5l0 11.8"/><path class="kj" d="M357 562.5l0 11.8"/><path class="kk" d="M356.2 562.5l0 11.8"/><path class="kl" d="M366 573.7l-14 0"/><path class="kcj" d="M819 685.5l15.1 -15.1"/><path class="kcs" d="M818.2 684.7l15.1 -15.1"/><path class="kcl" d="M817.9 684.4l15.1 -15.1"/><path class="kh" d="M830.8 668l5.7 5.6"/><path class="kcw" d="M790.9 396.7l15.3 -15.4"/><path class="kdc" d="M790.2 395.9l15.3 -15.4"/><path class="kcy" d="M789.8 395.6l15.3 -15.4"/><path class="kab" d="M803.1 379l5.4 5.4"/><path class="kbj" d="M594.1 832.4l23.1 9.7"/><path class="kbk" d="M594.5 831.3l23.1 9.7"/><path class="kbl" d="M594.7 830.9l23.1 9.7"/><path class="kbm" d="M618.2 838.2l-3.1 7.4"/><path class="kbf" d="M871.4 394.9l23.1 9.7"/><path class="kbg" d="M871.9 393.8l23.1 9.7"/><path class="kbh" d="M872 393.4l23.1 9.7"/><path class="kbi" d="M895.5 400.7l-3.1 7.4"/><path class="kbv" d="M604.7 844.9l10.4 -0.9"/><path class="kbw" d="M604.6 843.8l10.4 -0.9"/><path class="kbx" d="M604.5 843.3l10.4 -0.9"/><path class="kbi" d="M614.1 840l0.7 8"/><path class="kax" d="M493 519.8l0 15.2"/><path class="kay" d="M491.5 519.8l0 15.2"/><path class="kaw" d="M490.9 519.8l0 15.2"/><path class="kae" d="M498.2 534.4l-10.4 0"/><path class="kcz" d="M562.4 458.9l15.3 -15.4"/><path class="kda" d="M561.6 458.1l15.3 -15.4"/><path class="kdb" d="M561.3 457.8l15.3 -15.4"/><path class="kh" d="M574.6 441.2l5.4 5.4"/><path class="kbj" d="M440.3 675.9l23.1 9.7"/><path class="kbk" d="M440.7 674.8l23.1 9.7"/><path class="kbl" d="M440.9 674.4l23.1 9.7"/><path class="kbm" d="M464.4 681.7l-3.1 7.4"/><path class="kdn" d="M534.2 390.9l23.4 9.9"/><path class="kdo" d="M534.6 389.9l23.4 9.9"/><path class="kdp" d="M534.8 389.5l23.4 9.9"/><path class="kbm" d="M558.5 397l-3 7"/><path class="kcj" d="M406.3 410.9l15.1 -15.1"/><path class="kck" d="M405.5 410.1l15.1 -15.1"/><path class="kcl" d="M405.2 409.8l15.1 -15.1"/><path class="kh" d="M418.1 393.4l5.7 5.6"/><path class="kcz" d="M762 460.6l15.3 -15.4"/><path class="kda" d="M761.2 459.8l15.3 -15.4"/><path class="kdb" d="M760.9 459.5l15.3 -15.4"/><path class="kh" d="M774.2 443l5.4 5.4"/><path class="ky" d="M828.7 692.4l0 11.8"/><path class="kz" d="M826.7 692.4l0 11.8"/><path class="kaa" d="M825.9 692.4l0 11.8"/><path class="kab" d="M835.7 703.6l-14 0"/><path class="kek" d="M602.9 838.4l15.3 -15.4"/><path class="kel" d="M602.2 837.7l15.3 -15.4"/><path class="kem" d="M601.8 837.4l15.3 -15.4"/><path class="kx" d="M615.1 820.8l5.4 5.4"/><path class="ka" d="M928.3 455.1l0 11.8"/><path class="kb" d="M926.4 455.1l0 11.8"/><path class="kc" d="M925.5 455.1l0 11.8"/><path class="kd" d="M935.3 466.3l-14 0"/><path class="kcj" d="M747.8 848.6l15.1 -15.1"/><path class="kcs" d="M747 847.8l15.1 -15.1"/><path class="kcl" d="M746.7 847.5l15.1 -15.1"/><path class="kh" d="M759.7 831l5.7 5.6"/><path class="kcz" d="M533.4 522.8l15.3 -15.4"/><path class="kda" d="M532.7 522l15.3 -15.4"/><path class="kdb" d="M532.4 521.7l15.3 -15.4"/><path class="kh" d="M545.6 505.2l5.4 5.4"/><path class="kbv" d="M465.4 694.6l-3.1 -6.9"/><path class="kbw" d="M466.4 694.2l-3.1 -6.9"/><path class="kbx" d="M466.8 694l-3.1 -6.9"/><path class="kbi" d="M458.9 689.9l7.3 -3.2"/><path class="kdn" d="M601.2 454l23.4 9.9"/><path class="kdo" d="M601.6 453.1l23.4 9.9"/><path class="kdp" d="M601.7 452.6l23.4 9.9"/><path class="kbm" d="M625.5 460.2l-3 7"/><path class="ke" d="M605.7 803.8l0 11.8"/><path class="kn" d="M603.7 803.8l0 11.8"/><path class="ko" d="M602.9 803.8l0 11.8"/><path class="kh" d="M612.7 815l-14 0"/><path class="kcj" d="M377.8 474.4l15.1 -15.1"/><path class="kck" d="M377 473.6l15.1 -15.1"/><path class="kcl" d="M376.7 473.3l15.1 -15.1"/><path class="kh" d="M389.7 456.8l5.7 5.6"/><path class="ke" d="M482.3 677.9l0 11.8"/><path class="kn" d="M480.4 677.9l0 11.8"/><path class="ko" d="M479.5 677.9l0 11.8"/><path class="kh" d="M489.3 689.1l-14 0"/><path class="kcm" d="M904.4 473.2l15.1 -15.1"/><path class="kcn" d="M903.6 472.4l15.1 -15.1"/><path class="kco" d="M903.3 472.1l15.1 -15.1"/><path class="kh" d="M916.3 455.7l5.7 5.6"/><path class="kcz" d="M733.1 524.5l15.3 -15.4"/><path class="kda" d="M732.3 523.8l15.3 -15.4"/><path class="kdb" d="M732 523.4l15.3 -15.4"/><path class="kh" d="M745.3 506.9l5.4 5.4"/><path class="ki" d="M359 552l0 11.8"/><path class="kj" d="M357 552l0 11.8"/><path class="kk" d="M356.2 552l0 11.8"/><path class="kl" d="M366 563.1l-14 0"/><path class="kdn" d="M668.1 517.2l23.4 9.9"/><path class="kdo" d="M668.5 516.2l23.4 9.9"/><path class="kdp" d="M668.7 515.8l23.4 9.9"/><path class="kbm" d="M692.5 523.3l-3 7"/><path class="ker" d="M824.4 674.7l23.4 9.9"/><path class="kes" d="M824.8 673.7l23.4 9.9"/><path class="ket" d="M825 673.3l23.4 9.9"/><path class="keu" d="M848.8 680.9l-3 7"/><path class="kcd" d="M349.4 537.9l15.1 -15.1"/><path class="kce" d="M348.6 537.1l15.1 -15.1"/><path class="kcf" d="M348.2 536.7l15.1 -15.1"/><path class="kaj" d="M361.2 520.3l5.7 5.6"/><path class="kan" d="M789 478.5l0 15.2"/><path class="kao" d="M787.6 478.5l0 15.2"/><path class="kap" d="M787 478.5l0 15.2"/><path class="kd" d="M794.2 493.1l-10.4 0"/><path class="kbj" d="M616 841.6l23.1 9.7"/><path class="kbk" d="M616.5 840.6l23.1 9.7"/><path class="kbl" d="M616.7 840.2l23.1 9.7"/><path class="kbm" d="M640.1 847.4l-3.1 7.4"/><path class="kcj" d="M876 536.7l15.1 -15.1"/><path class="kcs" d="M875.2 535.9l15.1 -15.1"/><path class="kcl" d="M874.8 535.6l15.1 -15.1"/><path class="kh" d="M887.8 519.2l5.7 5.6"/><path class="kbz" d="M893.4 404.1l23.1 9.7"/><path class="kca" d="M893.8 403.1l23.1 9.7"/><path class="kcb" d="M894 402.7l23.1 9.7"/><path class="kcc" d="M917.5 409.9l-3.1 7.4"/><path class="kek" d="M461.1 687l15.3 -15.4"/><path class="kel" d="M460.4 686.3l15.3 -15.4"/><path class="kem" d="M460 685.9l15.3 -15.4"/><path class="kx" d="M473.3 669.4l5.4 5.4"/><path class="kbj" d="M462.3 685.1l23.1 9.7"/><path class="kbk" d="M462.7 684.1l23.1 9.7"/><path class="kbl" d="M462.9 683.7l23.1 9.7"/><path class="kbm" d="M486.3 690.9l-3.1 7.4"/><path class="kax" d="M493 505.8l0 15.2"/><path class="kay" d="M491.5 505.8l0 15.2"/><path class="kaw" d="M490.9 505.8l0 15.2"/><path class="kae" d="M498.2 520.4l-10.4 0"/><path class="kdn" d="M556.5 400.3l23.4 9.9"/><path class="kdo" d="M556.9 399.3l23.4 9.9"/><path class="kdp" d="M557.1 398.9l23.4 9.9"/><path class="kbm" d="M580.9 406.5l-3 7"/><path class="kag" d="M729 919.2l0 11.8"/><path class="kah" d="M727 919.2l0 11.8"/><path class="kai" d="M726.2 919.2l0 11.8"/><path class="kaj" d="M736 930.3l-14 0"/><path class="ky" d="M828.7 681.9l0 11.8"/><path class="kz" d="M826.7 681.9l0 11.8"/><path class="kaa" d="M825.9 681.9l0 11.8"/><path class="kab" d="M835.7 693l-14 0"/><path class="ka" d="M928.3 444.6l0 11.8"/><path class="kb" d="M926.4 444.6l0 11.8"/><path class="kc" d="M925.5 444.6l0 11.8"/><path class="kd" d="M935.3 455.7l-14 0"/><path class="kcz" d="M576.8 409.4l15.3 -15.4"/><path class="kda" d="M576.1 408.7l15.3 -15.4"/><path class="kdb" d="M575.7 408.4l15.3 -15.4"/><path class="kh" d="M589 391.8l5.4 5.4"/><path class="ke" d="M605.7 793.3l0 11.8"/><path class="kn" d="M603.7 793.3l0 11.8"/><path class="ko" d="M602.9 793.3l0 11.8"/><path class="kh" d="M612.7 804.4l-14 0"/><path class="kcz" d="M660.8 688.7l15.3 -15.4"/><path class="kda" d="M660 688l15.3 -15.4"/><path class="kdb" d="M659.7 687.7l15.3 -15.4"/><path class="kh" d="M673 671.1l5.4 5.4"/><path class="kbr" d="M464.6 693.9l24.5 10.3"/><path class="kbs" d="M465 692.9l24.5 10.3"/><path class="kbt" d="M465.2 692.5l24.5 10.3"/><path class="kbu" d="M490 700.4l-3 7"/><path class="ke" d="M482.3 667.3l0 11.8"/><path class="kn" d="M480.4 667.3l0 11.8"/><path class="ko" d="M479.5 667.3l0 11.8"/><path class="kh" d="M489.3 678.5l-14 0"/><path class="kcj" d="M804.8 699.8l15.1 -15.1"/><path class="kcs" d="M804 699l15.1 -15.1"/><path class="kcl" d="M803.6 698.7l15.1 -15.1"/><path class="kh" d="M816.6 682.2l5.7 5.6"/><path class="kcz" d="M776.5 411.2l15.3 -15.4"/><path class="kda" d="M775.7 410.4l15.3 -15.4"/><path class="kdb" d="M775.4 410.1l15.3 -15.4"/><path class="kh" d="M788.7 393.5l5.4 5.4"/><path class="kdn" d="M623.5 463.5l23.4 9.9"/><path class="kdo" d="M623.9 462.5l23.4 9.9"/><path class="kdp" d="M624.1 462.1l23.4 9.9"/><path class="kbm" d="M647.8 469.6l-3 7"/><path class="ki" d="M359 541.4l0 11.8"/><path class="kj" d="M357 541.4l0 11.8"/><path class="kk" d="M356.2 541.4l0 11.8"/><path class="kl" d="M366 552.6l-14 0"/><path class="kcz" d="M547.9 473.4l15.3 -15.4"/><path class="kda" d="M547.1 472.6l15.3 -15.4"/><path class="kdb" d="M546.8 472.3l15.3 -15.4"/><path class="kh" d="M560.1 455.7l5.4 5.4"/><path class="kbv" d="M920.2 416.7l-4.8 -3.5"/><path class="kbw" d="M920.9 415.8l-4.8 -3.5"/><path class="kbx" d="M921.1 415.4l-4.8 -3.5"/><path class="kbi" d="M913.6 416.9l4.7 -6.5"/><path class="kcj" d="M392.1 425.2l15.1 -15.1"/><path class="kck" d="M391.3 424.4l15.1 -15.1"/><path class="kcl" d="M390.9 424.1l15.1 -15.1"/><path class="kh" d="M403.9 407.7l5.7 5.6"/><path class="kbv" d="M350 536.9l-2.3 4.6"/><path class="kbw" d="M349 536.4l-2.3 4.6"/><path class="kbx" d="M348.6 536.2l-2.3 4.6"/><path class="kbi" d="M351.6 542.8l-7.1 -3.6"/><path class="kdn" d="M690.5 526.6l23.4 9.9"/><path class="kdo" d="M690.9 525.6l23.4 9.9"/><path class="kdp" d="M691.1 525.2l23.4 9.9"/><path class="kbm" d="M714.8 532.7l-3 7"/><path class="kcz" d="M747.5 475.1l15.3 -15.4"/><path class="kda" d="M746.8 474.3l15.3 -15.4"/><path class="kdb" d="M746.5 474l15.3 -15.4"/><path class="kh" d="M759.7 457.5l5.4 5.4"/><path class="kcp" d="M733.6 862.9l15.1 -15.1"/><path class="kcq" d="M732.8 862.1l15.1 -15.1"/><path class="kcr" d="M732.5 861.7l15.1 -15.1"/><path class="kt" d="M745.4 845.3l5.7 5.6"/><path class="kbj" d="M638 850.9l23.1 9.7"/><path class="kbk" d="M638.5 849.9l23.1 9.7"/><path class="kbl" d="M638.6 849.4l23.1 9.7"/><path class="kbm" d="M662.1 856.7l-3.1 7.4"/><path class="kcz" d="M519 537.3l15.3 -15.4"/><path class="kda" d="M518.2 536.5l15.3 -15.4"/><path class="kdb" d="M517.9 536.2l15.3 -15.4"/><path class="kh" d="M531.2 519.7l5.4 5.4"/><path class="kbv" d="M921.1 420.6l-1.5 -4.8"/><path class="kbw" d="M922.1 420.3l-1.5 -4.8"/><path class="kbx" d="M922.6 420.1l-1.5 -4.8"/><path class="kbi" d="M915.9 417.6l7.6 -2.4"/><path class="kag" d="M729 908.6l0 11.8"/><path class="kah" d="M727 908.6l0 11.8"/><path class="kai" d="M726.2 908.6l0 11.8"/><path class="kaj" d="M736 919.8l-14 0"/><path class="ky" d="M828.7 671.3l0 11.8"/><path class="kz" d="M826.7 671.3l0 11.8"/><path class="kaa" d="M825.9 671.3l0 11.8"/><path class="kab" d="M835.7 682.5l-14 0"/><path class="kan" d="M789 464.4l0 15.2"/><path class="kao" d="M787.6 464.4l0 15.2"/><path class="kap" d="M787 464.4l0 15.2"/><path class="kd" d="M794.2 479.1l-10.4 0"/><path class="ka" d="M928.3 434l0 11.8"/><path class="kb" d="M926.4 434l0 11.8"/><path class="kc" d="M925.5 434l0 11.8"/><path class="kd" d="M935.3 445.2l-14 0"/><path class="kcg" d="M363.6 488.7l15.1 -15.1"/><path class="kch" d="M362.8 487.9l15.1 -15.1"/><path class="kci" d="M362.5 487.5l15.1 -15.1"/><path class="kt" d="M375.4 471.1l5.7 5.6"/><path class="kbj" d="M484.2 694.4l23.1 9.7"/><path class="kbk" d="M484.7 693.4l23.1 9.7"/><path class="kbl" d="M484.8 692.9l23.1 9.7"/><path class="kbm" d="M508.3 700.2l-3.1 7.4"/><path class="ke" d="M605.7 782.7l0 11.8"/><path class="kn" d="M603.7 782.7l0 11.8"/><path class="ko" d="M602.9 782.7l0 11.8"/><path class="kh" d="M612.7 793.9l-14 0"/><path class="kcj" d="M890.2 487.5l15.1 -15.1"/><path class="kcs" d="M889.4 486.7l15.1 -15.1"/><path class="kcl" d="M889.1 486.4l15.1 -15.1"/><path class="kh" d="M902 470l5.7 5.6"/><path class="kdn" d="M578.8 409.7l23.4 9.9"/><path class="kdo" d="M579.2 408.7l23.4 9.9"/><path class="kdp" d="M579.4 408.3l23.4 9.9"/><path class="kbm" d="M603.2 415.9l-3 7"/><path class="kbv" d="M347.8 540.4l1.5 4.8"/><path class="kbw" d="M348.9 540.1l1.5 4.8"/><path class="kbx" d="M349.3 539.9l1.5 4.8"/><path class="kbi" d="M353 543.4l-7.6 2.4"/><path class="kax" d="M493 491.7l0 15.2"/><path class="kay" d="M491.5 491.7l0 15.2"/><path class="kaw" d="M490.9 491.7l0 15.2"/><path class="kae" d="M498.2 506.4l-10.4 0"/><path class="kcz" d="M718.6 539l15.3 -15.4"/><path class="kda" d="M717.9 538.3l15.3 -15.4"/><path class="kdb" d="M717.5 538l15.3 -15.4"/><path class="kh" d="M730.8 521.4l5.4 5.4"/><path class="ke" d="M482.3 656.8l0 11.8"/><path class="kn" d="M480.4 656.8l0 11.8"/><path class="ko" d="M479.5 656.8l0 11.8"/><path class="kh" d="M489.3 667.9l-14 0"/><path class="ki" d="M359 530.8l0 11.8"/><path class="kj" d="M357 530.8l0 11.8"/><path class="kk" d="M356.2 530.8l0 11.8"/><path class="kl" d="M366 542l-14 0"/><path class="kbv" d="M918.8 424.1l2.3 -4.6"/><path class="kbw" d="M917.8 423.6l2.3 -4.6"/><path class="kbx" d="M917.4 423.4l2.3 -4.6"/><path class="kbi" d="M917.3 418.2l7.1 3.6"/><path class="kbr" d="M487.9 703.7l24.5 10.3"/><path class="kbs" d="M488.3 702.7l24.5 10.3"/><path class="kbt" d="M488.5 702.3l24.5 10.3"/><path class="kbu" d="M513.3 710.3l-3 7"/><path class="kcj" d="M861.7 551l15.1 -15.1"/><path class="kcs" d="M860.9 550.2l15.1 -15.1"/><path class="kcl" d="M860.6 549.9l15.1 -15.1"/><path class="kh" d="M873.5 533.4l5.7 5.6"/><path class="kdn" d="M645.8 472.9l23.4 9.9"/><path class="kdo" d="M646.2 471.9l23.4 9.9"/><path class="kdp" d="M646.4 471.5l23.4 9.9"/><path class="kbm" d="M670.2 479l-3 7"/><path class="kbv" d="M348.7 544.3l4.8 3.5"/><path class="kbw" d="M349.3 543.4l4.8 3.5"/><path class="kbx" d="M349.6 543l4.8 3.5"/><path class="kbi" d="M355.3 544.2l-4.7 6.5"/><path class="kcz" d="M562.4 423.9l15.3 -15.4"/><path class="kda" d="M561.6 423.2l15.3 -15.4"/><path class="kdb" d="M561.3 422.9l15.3 -15.4"/><path class="kh" d="M574.6 406.3l5.4 5.4"/><path class="ky" d="M729 898.1l0 11.8"/><path class="kz" d="M727 898.1l0 11.8"/><path class="kaa" d="M726.2 898.1l0 11.8"/><path class="kab" d="M736 909.2l-14 0"/><path class="ky" d="M828.7 660.8l0 11.8"/><path class="kz" d="M826.7 660.8l0 11.8"/><path class="kaa" d="M825.9 660.8l0 11.8"/><path class="kab" d="M835.7 671.9l-14 0"/><path class="ka" d="M928.3 423.5l0 11.8"/><path class="kb" d="M926.4 423.5l0 11.8"/><path class="kc" d="M925.5 423.5l0 11.8"/><path class="kd" d="M935.3 434.6l-14 0"/><path class="kdn" d="M712.8 536l23.4 9.9"/><path class="kdo" d="M713.2 535l23.4 9.9"/><path class="kdp" d="M713.4 534.6l23.4 9.9"/><path class="kbm" d="M737.1 542.2l-3 7"/><path class="kcz" d="M646.3 703.2l15.3 -15.4"/><path class="kda" d="M645.5 702.5l15.3 -15.4"/><path class="kdb" d="M645.2 702.2l15.3 -15.4"/><path class="kh" d="M658.5 685.6l5.4 5.4"/><path class="kdx" d="M660 860.2l23.1 9.7"/><path class="kdy" d="M660.4 859.1l23.1 9.7"/><path class="kdz" d="M660.6 858.7l23.1 9.7"/><path class="kbi" d="M684.1 866l-3.1 7.4"/><path class="ke" d="M605.7 772.1l0 11.8"/><path class="kn" d="M603.7 772.1l0 11.8"/><path class="ko" d="M602.9 772.1l0 11.8"/><path class="kh" d="M612.7 783.3l-14 0"/><path class="kcj" d="M790.5 714.1l15.1 -15.1"/><path class="kcs" d="M789.7 713.3l15.1 -15.1"/><path class="kcl" d="M789.4 712.9l15.1 -15.1"/><path class="kh" d="M802.4 696.5l5.7 5.6"/><path class="kcz" d="M762 425.7l15.3 -15.4"/><path class="kda" d="M761.2 424.9l15.3 -15.4"/><path class="kdb" d="M760.9 424.6l15.3 -15.4"/><path class="kh" d="M774.2 408.1l5.4 5.4"/><path class="kbj" d="M506.2 703.7l23.1 9.7"/><path class="kbk" d="M506.6 702.6l23.1 9.7"/><path class="kbl" d="M506.8 702.2l23.1 9.7"/><path class="kbm" d="M530.3 709.5l-3.1 7.4"/><path class="ke" d="M482.3 646.2l0 11.8"/><path class="kn" d="M480.4 646.2l0 11.8"/><path class="ko" d="M479.5 646.2l0 11.8"/><path class="kh" d="M489.3 657.4l-14 0"/><path class="kan" d="M789 450.4l0 15.2"/><path class="kao" d="M787.6 450.4l0 15.2"/><path class="kap" d="M787 450.4l0 15.2"/><path class="kd" d="M794.2 465l-10.4 0"/><path class="kcz" d="M533.4 487.9l15.3 -15.4"/><path class="kda" d="M532.7 487.1l15.3 -15.4"/><path class="kdb" d="M532.4 486.8l15.3 -15.4"/><path class="kh" d="M545.6 470.3l5.4 5.4"/><path class="kbc" d="M352.4 547.2l23.1 9.7"/><path class="kbd" d="M352.8 546.1l23.1 9.7"/><path class="kbe" d="M353 545.7l23.1 9.7"/><path class="kaj" d="M376.5 553l-3.1 7.4"/><path class="kdn" d="M601.2 419.1l23.4 9.9"/><path class="kdo" d="M601.6 418.2l23.4 9.9"/><path class="kdp" d="M601.7 417.7l23.4 9.9"/><path class="kbm" d="M625.5 425.3l-3 7"/><path class="ki" d="M359 520.3l0 11.8"/><path class="kj" d="M357 520.3l0 11.8"/><path class="kk" d="M356.2 520.3l0 11.8"/><path class="kl" d="M366 531.4l-14 0"/><path class="kcj" d="M377.8 439.5l15.1 -15.1"/><path class="kck" d="M377 438.7l15.1 -15.1"/><path class="kcl" d="M376.7 438.3l15.1 -15.1"/><path class="kh" d="M389.7 421.9l5.7 5.6"/><path class="kan" d="M493 477.7l0 15.2"/><path class="kao" d="M491.5 477.7l0 15.2"/><path class="kap" d="M490.9 477.7l0 15.2"/><path class="kd" d="M498.2 492.3l-10.4 0"/><path class="kcm" d="M904.4 438.3l15.1 -15.1"/><path class="kcn" d="M903.6 437.5l15.1 -15.1"/><path class="kco" d="M903.3 437.2l15.1 -15.1"/><path class="kh" d="M916.3 420.8l5.7 5.6"/><path class="kcz" d="M733.1 489.6l15.3 -15.4"/><path class="kda" d="M732.3 488.9l15.3 -15.4"/><path class="kdb" d="M732 488.5l15.3 -15.4"/><path class="kh" d="M745.3 472l5.4 5.4"/><path class="kbr" d="M511.3 713.6l24.5 10.3"/><path class="kbs" d="M511.7 712.6l24.5 10.3"/><path class="kbt" d="M511.9 712.2l24.5 10.3"/><path class="kbu" d="M536.7 720.1l-3 7"/><path class="kcm" d="M719.3 877.2l15.1 -15.1"/><path class="kcn" d="M718.6 876.4l15.1 -15.1"/><path class="kco" d="M718.2 876l15.1 -15.1"/><path class="kh" d="M731.2 859.6l5.7 5.6"/><path class="kcz" d="M504.5 551.8l15.3 -15.4"/><path class="kda" d="M503.8 551.1l15.3 -15.4"/><path class="kdb" d="M503.4 550.7l15.3 -15.4"/><path class="kh" d="M516.7 534.2l5.4 5.4"/><path class="kdn" d="M668.1 482.3l23.4 9.9"/><path class="kdo" d="M668.5 481.3l23.4 9.9"/><path class="kdp" d="M668.7 480.9l23.4 9.9"/><path class="kbm" d="M692.5 488.4l-3 7"/><path class="kcd" d="M349.4 503l15.1 -15.1"/><path class="kce" d="M348.6 502.2l15.1 -15.1"/><path class="kcf" d="M348.2 501.8l15.1 -15.1"/><path class="kaj" d="M361.2 485.4l5.7 5.6"/><ellipse cx="928.3" cy="424.1" rx="7.0" ry="4.5" fill="#3636d8"/><path class="ky" d="M729 887.5l0 11.8"/><path class="kz" d="M727 887.5l0 11.8"/><path class="kaa" d="M726.2 887.5l0 11.8"/><path class="kab" d="M736 898.7l-14 0"/><path class="ku" d="M828.7 650.2l0 11.8"/><path class="kv" d="M826.7 650.2l0 11.8"/><path class="kw" d="M825.9 650.2l0 11.8"/><path class="kx" d="M835.7 661.4l-14 0"/><path class="kcj" d="M876 501.8l15.1 -15.1"/><path class="kcs" d="M875.2 501l15.1 -15.1"/><path class="kcl" d="M874.8 500.7l15.1 -15.1"/><path class="kh" d="M887.8 484.3l5.7 5.6"/><path class="ke" d="M605.7 761.6l0 11.8"/><path class="kn" d="M603.7 761.6l0 11.8"/><path class="ko" d="M602.9 761.6l0 11.8"/><path class="kh" d="M612.7 772.7l-14 0"/><path class="kcz" d="M704.1 553.5l15.3 -15.4"/><path class="kda" d="M703.4 552.8l15.3 -15.4"/><path class="kdb" d="M703.1 552.5l15.3 -15.4"/><path class="kh" d="M716.3 535.9l5.4 5.4"/><path class="kdn" d="M735.1 545.4l23.4 9.9"/><path class="kdo" d="M735.5 544.4l23.4 9.9"/><path class="kdp" d="M735.7 544l23.4 9.9"/><path class="kbm" d="M759.5 551.6l-3 7"/><path class="ke" d="M482.3 635.6l0 11.8"/><path class="kn" d="M480.4 635.6l0 11.8"/><path class="ko" d="M479.5 635.6l0 11.8"/><path class="kh" d="M489.3 646.8l-14 0"/><path class="kea" d="M682 869.4l23.1 9.7"/><path class="keb" d="M682.4 868.4l23.1 9.7"/><path class="kec" d="M682.6 867.9l23.1 9.7"/><path class="ked" d="M706 875.2l-3.1 7.4"/><path class="kcj" d="M847.5 565.3l15.1 -15.1"/><path class="kcs" d="M846.7 564.5l15.1 -15.1"/><path class="kcl" d="M846.3 564.1l15.1 -15.1"/><path class="kh" d="M859.3 547.7l5.7 5.6"/><path class="ki" d="M359 509.7l0 11.8"/><path class="kj" d="M357 509.7l0 11.8"/><path class="kk" d="M356.2 509.7l0 11.8"/><path class="kl" d="M366 520.9l-14 0"/><path class="kbj" d="M528.2 712.9l23.1 9.7"/><path class="kbk" d="M528.6 711.9l23.1 9.7"/><path class="kbl" d="M528.8 711.5l23.1 9.7"/><path class="kbm" d="M552.2 718.7l-3.1 7.4"/><path class="kbf" d="M374.4 556.4l23.1 9.7"/><path class="kbg" d="M374.8 555.4l23.1 9.7"/><path class="kbh" d="M375 555l23.1 9.7"/><path class="kbi" d="M398.4 562.2l-3.1 7.4"/><path class="kdn" d="M623.5 428.5l23.4 9.9"/><path class="kdo" d="M623.9 427.6l23.4 9.9"/><path class="kdp" d="M624.1 427.1l23.4 9.9"/><path class="kbm" d="M647.8 434.7l-3 7"/><path class="kan" d="M789 436.4l0 15.2"/><path class="kao" d="M787.6 436.4l0 15.2"/><path class="kap" d="M787 436.4l0 15.2"/><path class="kd" d="M794.2 451l-10.4 0"/><path class="kcz" d="M547.9 438.5l15.3 -15.4"/><path class="kda" d="M547.1 437.7l15.3 -15.4"/><path class="kdb" d="M546.8 437.4l15.3 -15.4"/><path class="kh" d="M560.1 420.8l5.4 5.4"/><path class="kbv" d="M715 879.6l5.3 -3.1"/><path class="kbw" d="M714.4 878.6l5.3 -3.1"/><path class="kbx" d="M714.2 878.2l5.3 -3.1"/><path class="kbi" d="M717.7 873.3l4.1 6.9"/><path class="kan" d="M493 463.7l0 15.2"/><path class="kao" d="M491.5 463.7l0 15.2"/><path class="kap" d="M490.9 463.7l0 15.2"/><path class="kd" d="M498.2 478.3l-10.4 0"/><path class="kcw" d="M631.8 717.8l15.3 -15.4"/><path class="kcx" d="M631.1 717l15.3 -15.4"/><path class="kcy" d="M630.8 716.7l15.3 -15.4"/><path class="kt" d="M644 700.1l5.4 5.4"/><path class="ky" d="M729 876.9l0 11.8"/><path class="kz" d="M727 876.9l0 11.8"/><path class="kaa" d="M726.2 876.9l0 11.8"/><path class="kab" d="M736 888.1l-14 0"/><path class="ku" d="M828.7 639.6l0 11.8"/><path class="kv" d="M826.7 639.6l0 11.8"/><path class="kw" d="M825.9 639.6l0 11.8"/><path class="kx" d="M835.7 650.8l-14 0"/><path class="kcj" d="M776.3 728.4l15.1 -15.1"/><path class="kcs" d="M775.5 727.6l15.1 -15.1"/><path class="kcl" d="M775.2 727.2l15.1 -15.1"/><path class="kh" d="M788.1 710.8l5.7 5.6"/><path class="kbv" d="M350 502l-2.3 4.6"/><path class="kbw" d="M349 501.5l-2.3 4.6"/><path class="kbx" d="M348.6 501.3l-2.3 4.6"/><path class="kbi" d="M351.6 507.9l-7.1 -3.6"/><path class="kbr" d="M534.6 723.4l24.5 10.3"/><path class="kbs" d="M535.1 722.4l24.5 10.3"/><path class="kbt" d="M535.2 722l24.5 10.3"/><path class="kbu" d="M560 730l-3 7"/><path class="kbv" d="M703.9 878.8l6.6 1.4"/><path class="kbw" d="M704.1 877.7l6.6 1.4"/><path class="kbx" d="M704.2 877.2l6.6 1.4"/><path class="kbi" d="M710.7 876.1l-1.6 7.8"/><path class="kbv" d="M709.3 880.1l6.8 -1"/><path class="kbw" d="M709.2 879l6.8 -1"/><path class="kbx" d="M709.1 878.5l6.8 -1"/><path class="kbi" d="M714.9 875.3l1.1 7.9"/><path class="kdn" d="M690.5 491.7l23.4 9.9"/><path class="kdo" d="M690.9 490.7l23.4 9.9"/><path class="kdp" d="M691.1 490.3l23.4 9.9"/><path class="kbm" d="M714.8 497.8l-3 7"/><path class="kcz" d="M747.5 440.2l15.3 -15.4"/><path class="kda" d="M746.8 439.4l15.3 -15.4"/><path class="kdb" d="M746.5 439.1l15.3 -15.4"/><path class="kh" d="M759.7 422.6l5.4 5.4"/><path class="ke" d="M605.7 751l0 11.8"/><path class="kn" d="M603.7 751l0 11.8"/><path class="ko" d="M602.9 751l0 11.8"/><path class="kh" d="M612.7 762.2l-14 0"/><path class="kcz" d="M519 502.4l15.3 -15.4"/><path class="kda" d="M518.2 501.6l15.3 -15.4"/><path class="kdb" d="M517.9 501.3l15.3 -15.4"/><path class="kh" d="M531.2 484.8l5.4 5.4"/><path class="ke" d="M482.3 625.1l0 11.8"/><path class="kn" d="M480.4 625.1l0 11.8"/><path class="ko" d="M479.5 625.1l0 11.8"/><path class="kh" d="M489.3 636.2l-14 0"/><path class="kcg" d="M363.6 453.8l15.1 -15.1"/><path class="kch" d="M362.8 453l15.1 -15.1"/><path class="kci" d="M362.5 452.6l15.1 -15.1"/><path class="kt" d="M375.4 436.2l5.7 5.6"/><path class="ki" d="M359 499.2l0 11.8"/><path class="kj" d="M357 499.2l0 11.8"/><path class="kk" d="M356.2 499.2l0 11.8"/><path class="kl" d="M366 510.3l-14 0"/><path class="kcj" d="M890.2 452.6l15.1 -15.1"/><path class="kcs" d="M889.4 451.8l15.1 -15.1"/><path class="kcl" d="M889.1 451.5l15.1 -15.1"/><path class="kh" d="M902 435.1l5.7 5.6"/><path class="kdn" d="M757.4 554.8l23.4 9.9"/><path class="kdo" d="M757.9 553.9l23.4 9.9"/><path class="kdp" d="M758 553.4l23.4 9.9"/><path class="kbm" d="M781.8 561l-3 7"/><path class="kbv" d="M347.8 505.5l1.5 4.8"/><path class="kbw" d="M348.9 505.2l1.5 4.8"/><path class="kbx" d="M349.3 505l1.5 4.8"/><path class="kbi" d="M353 508.5l-7.6 2.4"/><path class="kcz" d="M718.6 504.1l15.3 -15.4"/><path class="kda" d="M717.9 503.4l15.3 -15.4"/><path class="kdb" d="M717.5 503l15.3 -15.4"/><path class="kh" d="M730.8 486.5l5.4 5.4"/><path class="kbj" d="M550.1 722.2l23.1 9.7"/><path class="kbk" d="M550.6 721.2l23.1 9.7"/><path class="kbl" d="M550.8 720.7l23.1 9.7"/><path class="kbm" d="M574.2 728l-3.1 7.4"/><path class="kcw" d="M490 566.3l15.3 -15.4"/><path class="kcx" d="M489.3 565.6l15.3 -15.4"/><path class="kcy" d="M489 565.2l15.3 -15.4"/><path class="kt" d="M502.2 548.7l5.4 5.4"/><path class="kbf" d="M396.3 565.7l23.1 9.7"/><path class="kbg" d="M396.8 564.7l23.1 9.7"/><path class="kbh" d="M397 564.2l23.1 9.7"/><path class="kbi" d="M420.4 571.5l-3.1 7.4"/><path class="kcj" d="M861.7 516.1l15.1 -15.1"/><path class="kcs" d="M860.9 515.3l15.1 -15.1"/><path class="kcl" d="M860.6 514.9l15.1 -15.1"/><path class="kh" d="M873.5 498.5l5.7 5.6"/><path class="kdn" d="M645.8 438l23.4 9.9"/><path class="kdo" d="M646.2 437l23.4 9.9"/><path class="kdp" d="M646.4 436.6l23.4 9.9"/><path class="kbm" d="M670.2 444.1l-3 7"/><path class="kbv" d="M348.7 509.4l4.8 3.5"/><path class="kbw" d="M349.3 508.5l4.8 3.5"/><path class="kbx" d="M349.6 508.1l4.8 3.5"/><path class="kbi" d="M355.3 509.3l-4.7 6.5"/><path class="ky" d="M729 866.4l0 11.8"/><path class="kz" d="M727 866.4l0 11.8"/><path class="kaa" d="M726.2 866.4l0 11.8"/><path class="kab" d="M736 877.5l-14 0"/><path class="kan" d="M789 422.3l0 15.2"/><path class="kao" d="M787.6 422.3l0 15.2"/><path class="kap" d="M787 422.3l0 15.2"/><path class="kd" d="M794.2 437l-10.4 0"/><path class="ku" d="M828.7 629.1l0 11.8"/><path class="kv" d="M826.7 629.1l0 11.8"/><path class="kw" d="M825.9 629.1l0 11.8"/><path class="kx" d="M835.7 640.2l-14 0"/><path class="kcz" d="M689.7 568l15.3 -15.4"/><path class="kda" d="M688.9 567.3l15.3 -15.4"/><path class="kdb" d="M688.6 567l15.3 -15.4"/><path class="kh" d="M701.9 550.4l5.4 5.4"/><path class="ke" d="M605.7 740.4l0 11.8"/><path class="kn" d="M603.7 740.4l0 11.8"/><path class="ko" d="M602.9 740.4l0 11.8"/><path class="kh" d="M612.7 751.6l-14 0"/><path class="kan" d="M493 449.6l0 15.2"/><path class="kao" d="M491.5 449.6l0 15.2"/><path class="kap" d="M490.9 449.6l0 15.2"/><path class="kd" d="M498.2 464.3l-10.4 0"/><path class="kcj" d="M833.2 579.6l15.1 -15.1"/><path class="kcs" d="M832.5 578.8l15.1 -15.1"/><path class="kcl" d="M832.1 578.4l15.1 -15.1"/><path class="kh" d="M845.1 562l5.7 5.6"/><path class="ke" d="M482.3 614.5l0 11.8"/><path class="kn" d="M480.4 614.5l0 11.8"/><path class="ko" d="M479.5 614.5l0 11.8"/><path class="kh" d="M489.3 625.7l-14 0"/><path class="kdn" d="M712.8 501.1l23.4 9.9"/><path class="kdo" d="M713.2 500.1l23.4 9.9"/><path class="kdp" d="M713.4 499.7l23.4 9.9"/><path class="kbm" d="M737.1 507.2l-3 7"/><path class="kbr" d="M558 733.2l24.5 10.3"/><path class="kbs" d="M558.4 732.3l24.5 10.3"/><path class="kbt" d="M558.6 731.8l24.5 10.3"/><path class="kbu" d="M583.4 739.8l-3 7"/><path class="ke" d="M359 488.6l0 11.8"/><path class="kf" d="M357 488.6l0 11.8"/><path class="kg" d="M356.2 488.6l0 11.8"/><path class="kh" d="M366 499.8l-14 0"/><ellipse cx="692.1" cy="618.4" rx="5.2" ry="3.3" fill="#3c3cae"/><path class="kcz" d="M533.4 453l15.3 -15.4"/><path class="kda" d="M532.7 452.2l15.3 -15.4"/><path class="kdb" d="M532.4 451.9l15.3 -15.4"/><path class="kh" d="M545.6 435.4l5.4 5.4"/><path class="kbc" d="M352.4 512.3l23.1 9.7"/><path class="kbd" d="M352.8 511.2l23.1 9.7"/><path class="kbe" d="M353 510.8l23.1 9.7"/><path class="kaj" d="M376.5 518.1l-3.1 7.4"/><path class="kdk" d="M779.8 564.2l23.4 9.9"/><path class="kdl" d="M780.2 563.3l23.4 9.9"/><path class="kdm" d="M780.4 562.8l23.4 9.9"/><path class="kbi" d="M804.1 570.4l-3 7"/><path class="kcw" d="M617.4 732.3l15.3 -15.4"/><path class="kcx" d="M616.6 731.5l15.3 -15.4"/><path class="kcy" d="M616.3 731.2l15.3 -15.4"/><path class="kt" d="M629.6 714.6l5.4 5.4"/><path class="kcj" d="M762.1 742.6l15.1 -15.1"/><path class="kcs" d="M761.3 741.8l15.1 -15.1"/><path class="kcl" d="M760.9 741.5l15.1 -15.1"/><path class="kh" d="M773.9 725.1l5.7 5.6"/><path class="kbj" d="M572.1 731.5l23.1 9.7"/><path class="kbk" d="M572.5 730.4l23.1 9.7"/><path class="kbl" d="M572.7 730l23.1 9.7"/><path class="kbm" d="M596.2 737.3l-3.1 7.4"/><path class="ky" d="M729 855.8l0 11.8"/><path class="kz" d="M727 855.8l0 11.8"/><path class="kaa" d="M726.2 855.8l0 11.8"/><path class="kab" d="M736 867l-14 0"/><path class="ku" d="M828.7 618.5l0 11.8"/><path class="kv" d="M826.7 618.5l0 11.8"/><path class="kw" d="M825.9 618.5l0 11.8"/><path class="kx" d="M835.7 629.7l-14 0"/><path class="kcz" d="M733.1 454.7l15.3 -15.4"/><path class="kda" d="M732.3 453.9l15.3 -15.4"/><path class="kdb" d="M732 453.6l15.3 -15.4"/><path class="kh" d="M745.3 437.1l5.4 5.4"/><path class="kbj" d="M418.3 575l23.1 9.7"/><path class="kbk" d="M418.7 573.9l23.1 9.7"/><path class="kbl" d="M418.9 573.5l23.1 9.7"/><path class="kbm" d="M442.4 580.8l-3.1 7.4"/><path class="kcz" d="M504.5 516.9l15.3 -15.4"/><path class="kda" d="M503.8 516.2l15.3 -15.4"/><path class="kdb" d="M503.4 515.8l15.3 -15.4"/><path class="kh" d="M516.7 499.3l5.4 5.4"/><path class="ke" d="M605.7 729.9l0 11.8"/><path class="kn" d="M603.7 729.9l0 11.8"/><path class="ko" d="M602.9 729.9l0 11.8"/><path class="kh" d="M612.7 741l-14 0"/><path class="kdn" d="M668.1 447.4l23.4 9.9"/><path class="kdo" d="M668.5 446.4l23.4 9.9"/><path class="kdp" d="M668.7 446l23.4 9.9"/><path class="kbm" d="M692.5 453.5l-3 7"/><path class="kcd" d="M349.4 468l15.1 -15.1"/><path class="kce" d="M348.6 467.3l15.1 -15.1"/><path class="kcf" d="M348.2 466.9l15.1 -15.1"/><path class="kaj" d="M361.2 450.5l5.7 5.6"/><path class="ky" d="M482.3 604l0 11.8"/><path class="kz" d="M480.4 604l0 11.8"/><path class="kaa" d="M479.5 604l0 11.8"/><path class="kab" d="M489.3 615.1l-14 0"/><path class="kcj" d="M876 466.9l15.1 -15.1"/><path class="kcs" d="M875.2 466.1l15.1 -15.1"/><path class="kcl" d="M874.8 465.8l15.1 -15.1"/><path class="kh" d="M887.8 449.3l5.7 5.6"/><path class="kan" d="M789 408.3l0 15.2"/><path class="kao" d="M787.6 408.3l0 15.2"/><path class="kap" d="M787 408.3l0 15.2"/><path class="kd" d="M794.2 422.9l-10.4 0"/><path class="ke" d="M359 478l0 11.8"/><path class="kf" d="M357 478l0 11.8"/><path class="kg" d="M356.2 478l0 11.8"/><path class="kh" d="M366 489.2l-14 0"/><path class="kcz" d="M704.1 518.6l15.3 -15.4"/><path class="kda" d="M703.4 517.9l15.3 -15.4"/><path class="kdb" d="M703.1 517.6l15.3 -15.4"/><path class="kh" d="M716.3 501l5.4 5.4"/><path class="kdn" d="M735.1 510.5l23.4 9.9"/><path class="kdo" d="M735.5 509.5l23.4 9.9"/><path class="kdp" d="M735.7 509.1l23.4 9.9"/><path class="kbm" d="M759.5 516.7l-3 7"/><path class="kan" d="M493 435.6l0 15.2"/><path class="kao" d="M491.5 435.6l0 15.2"/><path class="kap" d="M490.9 435.6l0 15.2"/><path class="kd" d="M498.2 450.2l-10.4 0"/><path class="kcw" d="M475.6 580.8l15.3 -15.4"/><path class="kcx" d="M474.8 580.1l15.3 -15.4"/><path class="kcy" d="M474.5 579.8l15.3 -15.4"/><path class="kt" d="M487.8 563.2l5.4 5.4"/><path class="kbr" d="M581.3 743.1l24.5 10.3"/><path class="kbs" d="M581.8 742.1l24.5 10.3"/><path class="kbt" d="M581.9 741.7l24.5 10.3"/><path class="kbu" d="M606.7 749.7l-3 7"/><path class="kcj" d="M847.5 530.4l15.1 -15.1"/><path class="kcs" d="M846.7 529.6l15.1 -15.1"/><path class="kcl" d="M846.3 529.2l15.1 -15.1"/><path class="kh" d="M859.3 512.8l5.7 5.6"/><path class="kbf" d="M374.4 521.5l23.1 9.7"/><path class="kbg" d="M374.8 520.5l23.1 9.7"/><path class="kbh" d="M375 520.1l23.1 9.7"/><path class="kbi" d="M398.4 527.3l-3.1 7.4"/><path class="kcz" d="M675.2 582.6l15.3 -15.4"/><path class="kda" d="M674.5 581.8l15.3 -15.4"/><path class="kdb" d="M674.1 581.5l15.3 -15.4"/><path class="kh" d="M687.4 564.9l5.4 5.4"/><path class="kdk" d="M802.1 573.7l23.4 9.9"/><path class="kdl" d="M802.5 572.7l23.4 9.9"/><path class="kdm" d="M802.7 572.3l23.4 9.9"/><path class="kbi" d="M826.5 579.8l-3 7"/><path class="ky" d="M729 845.3l0 11.8"/><path class="kz" d="M727 845.3l0 11.8"/><path class="kaa" d="M726.2 845.3l0 11.8"/><path class="kab" d="M736 856.4l-14 0"/><path class="ku" d="M828.7 607.9l0 11.8"/><path class="kv" d="M826.7 607.9l0 11.8"/><path class="kw" d="M825.9 607.9l0 11.8"/><path class="kx" d="M835.7 619.1l-14 0"/><path class="kcj" d="M819 593.8l15.1 -15.1"/><path class="kcs" d="M818.2 593l15.1 -15.1"/><path class="kcl" d="M817.9 592.7l15.1 -15.1"/><path class="kh" d="M830.8 576.3l5.7 5.6"/><path class="ke" d="M605.7 719.3l0 11.8"/><path class="kn" d="M603.7 719.3l0 11.8"/><path class="ko" d="M602.9 719.3l0 11.8"/><path class="kh" d="M612.7 730.5l-14 0"/><path class="kbj" d="M594.1 740.7l23.1 9.7"/><path class="kbk" d="M594.5 739.7l23.1 9.7"/><path class="kbl" d="M594.7 739.2l23.1 9.7"/><path class="kbm" d="M618.2 746.5l-3.1 7.4"/><path class="kbv" d="M604.7 753.2l10.4 -0.9"/><path class="kbw" d="M604.6 752.1l10.4 -0.9"/><path class="kbx" d="M604.5 751.6l10.4 -0.9"/><path class="kbi" d="M614.1 748.3l0.7 8"/><path class="kbj" d="M440.3 584.2l23.1 9.7"/><path class="kbk" d="M440.7 583.2l23.1 9.7"/><path class="kbl" d="M440.9 582.7l23.1 9.7"/><path class="kbm" d="M464.4 590l-3.1 7.4"/><path class="ky" d="M482.3 593.4l0 11.8"/><path class="kz" d="M480.4 593.4l0 11.8"/><path class="kaa" d="M479.5 593.4l0 11.8"/><path class="kab" d="M489.3 604.6l-14 0"/><path class="kbv" d="M350 467.1l-2.3 4.6"/><path class="kbw" d="M349 466.6l-2.3 4.6"/><path class="kbx" d="M348.6 466.4l-2.3 4.6"/><path class="kbi" d="M351.6 473l-7.1 -3.6"/><path class="kdn" d="M690.5 456.8l23.4 9.9"/><path class="kdo" d="M690.9 455.8l23.4 9.9"/><path class="kdp" d="M691.1 455.4l23.4 9.9"/><path class="kbm" d="M714.8 462.9l-3 7"/><ellipse cx="789.0" cy="408.9" rx="5.2" ry="3.3" fill="#3636d8"/><path class="ka" d="M359 467.5l0 11.8"/><path class="kb" d="M357 467.5l0 11.8"/><path class="kc" d="M356.2 467.5l0 11.8"/><path class="kd" d="M366 478.6l-14 0"/><path class="kcz" d="M519 467.5l15.3 -15.4"/><path class="kda" d="M518.2 466.7l15.3 -15.4"/><path class="kdb" d="M517.9 466.4l15.3 -15.4"/><path class="kh" d="M531.2 449.9l5.4 5.4"/><path class="kek" d="M602.9 746.8l15.3 -15.4"/><path class="kel" d="M602.2 746l15.3 -15.4"/><path class="kem" d="M601.8 745.7l15.3 -15.4"/><path class="kx" d="M615.1 729.2l5.4 5.4"/><path class="kcj" d="M747.8 756.9l15.1 -15.1"/><path class="kcs" d="M747 756.1l15.1 -15.1"/><path class="kcl" d="M746.7 755.8l15.1 -15.1"/><path class="kh" d="M759.7 739.4l5.7 5.6"/><path class="kbv" d="M465.4 603l-3.1 -6.9"/><path class="kbw" d="M466.4 602.5l-3.1 -6.9"/><path class="kbx" d="M466.8 602.3l-3.1 -6.9"/><path class="kbi" d="M458.9 598.3l7.3 -3.2"/><path class="kdn" d="M757.4 519.9l23.4 9.9"/><path class="kdo" d="M757.9 518.9l23.4 9.9"/><path class="kdp" d="M758 518.5l23.4 9.9"/><path class="kbm" d="M781.8 526.1l-3 7"/><path class="kbv" d="M347.8 470.6l1.5 4.8"/><path class="kbw" d="M348.9 470.3l1.5 4.8"/><path class="kbx" d="M349.3 470.1l1.5 4.8"/><path class="kbi" d="M353 473.6l-7.6 2.4"/><path class="kcz" d="M718.6 469.2l15.3 -15.4"/><path class="kda" d="M717.9 468.5l15.3 -15.4"/><path class="kdb" d="M717.5 468.1l15.3 -15.4"/><path class="kh" d="M730.8 451.6l5.4 5.4"/><path class="kan" d="M493 421.6l0 15.2"/><path class="kao" d="M491.5 421.6l0 15.2"/><path class="kap" d="M490.9 421.6l0 15.2"/><path class="kd" d="M498.2 436.2l-10.4 0"/><path class="ky" d="M729 834.7l0 11.8"/><path class="kz" d="M727 834.7l0 11.8"/><path class="kaa" d="M726.2 834.7l0 11.8"/><path class="kab" d="M736 845.9l-14 0"/><path class="ku" d="M828.7 597.4l0 11.8"/><path class="kv" d="M826.7 597.4l0 11.8"/><path class="kw" d="M825.9 597.4l0 11.8"/><path class="kx" d="M835.7 608.5l-14 0"/><path class="kcw" d="M490 531.4l15.3 -15.4"/><path class="kcx" d="M489.3 530.7l15.3 -15.4"/><path class="kcy" d="M489 530.3l15.3 -15.4"/><path class="kt" d="M502.2 513.8l5.4 5.4"/><path class="ke" d="M605.7 708.8l0 11.8"/><path class="kn" d="M603.7 708.8l0 11.8"/><path class="ko" d="M602.9 708.8l0 11.8"/><path class="kh" d="M612.7 719.9l-14 0"/><path class="kbf" d="M396.3 530.8l23.1 9.7"/><path class="kbg" d="M396.8 529.8l23.1 9.7"/><path class="kbh" d="M397 529.3l23.1 9.7"/><path class="kbi" d="M420.4 536.6l-3.1 7.4"/><path class="kcj" d="M861.7 481.2l15.1 -15.1"/><path class="kcs" d="M860.9 480.4l15.1 -15.1"/><path class="kcl" d="M860.6 480l15.1 -15.1"/><path class="kh" d="M873.5 463.6l5.7 5.6"/><path class="kdq" d="M824.4 583.1l23.4 9.9"/><path class="kdr" d="M824.8 582.1l23.4 9.9"/><path class="kds" d="M825 581.7l23.4 9.9"/><path class="kam" d="M848.8 589.2l-3 7"/><path class="kbv" d="M348.7 474.5l4.8 3.5"/><path class="kbw" d="M349.3 473.6l4.8 3.5"/><path class="kbx" d="M349.6 473.2l4.8 3.5"/><path class="kbi" d="M355.3 474.4l-4.7 6.5"/><path class="ky" d="M482.3 582.8l0 11.8"/><path class="kz" d="M480.4 582.8l0 11.8"/><path class="kaa" d="M479.5 582.8l0 11.8"/><path class="kab" d="M489.3 594l-14 0"/><path class="kcz" d="M689.7 533.1l15.3 -15.4"/><path class="kda" d="M688.9 532.4l15.3 -15.4"/><path class="kdb" d="M688.6 532.1l15.3 -15.4"/><path class="kh" d="M701.9 515.5l5.4 5.4"/><path class="kbj" d="M616 750l23.1 9.7"/><path class="kbk" d="M616.5 748.9l23.1 9.7"/><path class="kbl" d="M616.7 748.5l23.1 9.7"/><path class="kbm" d="M640.1 755.8l-3.1 7.4"/><ellipse cx="359.0" cy="468.1" rx="7.0" ry="4.5" fill="#3636d8"/><path class="kct" d="M461.1 595.3l15.3 -15.4"/><path class="kcu" d="M460.4 594.6l15.3 -15.4"/><path class="kcv" d="M460 594.3l15.3 -15.4"/><path class="kd" d="M473.3 577.7l5.4 5.4"/><path class="kbj" d="M462.3 593.5l23.1 9.7"/><path class="kbk" d="M462.7 592.5l23.1 9.7"/><path class="kbl" d="M462.9 592l23.1 9.7"/><path class="kbm" d="M486.3 599.3l-3.1 7.4"/><path class="kcj" d="M833.2 544.6l15.1 -15.1"/><path class="kcs" d="M832.5 543.9l15.1 -15.1"/><path class="kcl" d="M832.1 543.5l15.1 -15.1"/><path class="kh" d="M845.1 527.1l5.7 5.6"/><path class="kdn" d="M712.8 466.2l23.4 9.9"/><path class="kdo" d="M713.2 465.2l23.4 9.9"/><path class="kdp" d="M713.4 464.8l23.4 9.9"/><path class="kbm" d="M737.1 472.3l-3 7"/><path class="kcz" d="M660.8 597.1l15.3 -15.4"/><path class="kda" d="M660 596.3l15.3 -15.4"/><path class="kdb" d="M659.7 596l15.3 -15.4"/><path class="kh" d="M673 579.5l5.4 5.4"/><path class="kbr" d="M464.6 602.2l24.5 10.3"/><path class="kbs" d="M465 601.2l24.5 10.3"/><path class="kbt" d="M465.2 600.8l24.5 10.3"/><path class="kbu" d="M490 608.8l-3 7"/><path class="kcj" d="M804.8 608.1l15.1 -15.1"/><path class="kcs" d="M804 607.3l15.1 -15.1"/><path class="kcl" d="M803.6 607l15.1 -15.1"/><path class="kh" d="M816.6 590.6l5.7 5.6"/><path class="ky" d="M729 824.1l0 11.8"/><path class="kz" d="M727 824.1l0 11.8"/><path class="kaa" d="M726.2 824.1l0 11.8"/><path class="kab" d="M736 835.3l-14 0"/><path class="ku" d="M828.7 586.8l0 11.8"/><path class="kv" d="M826.7 586.8l0 11.8"/><path class="kw" d="M825.9 586.8l0 11.8"/><path class="kx" d="M835.7 598l-14 0"/><ellipse cx="493.0" cy="422.2" rx="5.2" ry="3.3" fill="#3636d8"/><path class="kbc" d="M352.4 477.4l23.1 9.7"/><path class="kbd" d="M352.8 476.3l23.1 9.7"/><path class="kbe" d="M353 475.9l23.1 9.7"/><path class="kaj" d="M376.5 483.2l-3.1 7.4"/><path class="kdk" d="M779.8 529.3l23.4 9.9"/><path class="kdl" d="M780.2 528.4l23.4 9.9"/><path class="kdm" d="M780.4 527.9l23.4 9.9"/><path class="kbi" d="M804.1 535.5l-3 7"/><path class="ke" d="M605.7 698.2l0 11.8"/><path class="kn" d="M603.7 698.2l0 11.8"/><path class="ko" d="M602.9 698.2l0 11.8"/><path class="kh" d="M612.7 709.4l-14 0"/><path class="ky" d="M482.3 572.3l0 11.8"/><path class="kz" d="M480.4 572.3l0 11.8"/><path class="kaa" d="M479.5 572.3l0 11.8"/><path class="kab" d="M489.3 583.4l-14 0"/><path class="kbj" d="M418.3 540.1l23.1 9.7"/><path class="kbk" d="M418.7 539l23.1 9.7"/><path class="kbl" d="M418.9 538.6l23.1 9.7"/><path class="kbm" d="M442.4 545.9l-3.1 7.4"/><path class="kcz" d="M504.5 482l15.3 -15.4"/><path class="kda" d="M503.8 481.2l15.3 -15.4"/><path class="kdb" d="M503.4 480.9l15.3 -15.4"/><path class="kh" d="M516.7 464.4l5.4 5.4"/><path class="kcp" d="M733.6 771.2l15.1 -15.1"/><path class="kcq" d="M732.8 770.4l15.1 -15.1"/><path class="kcr" d="M732.5 770.1l15.1 -15.1"/><path class="kt" d="M745.4 753.7l5.7 5.6"/><path class="kbj" d="M638 759.2l23.1 9.7"/><path class="kbk" d="M638.5 758.2l23.1 9.7"/><path class="kbl" d="M638.6 757.8l23.1 9.7"/><path class="kbm" d="M662.1 765l-3.1 7.4"/><path class="kaz" d="M692.1 603.8l0 15.2"/><path class="kba" d="M690.7 603.8l0 15.2"/><path class="kbb" d="M690.1 603.8l0 15.2"/><path class="kam" d="M697.3 618.4l-10.4 0"/><path class="kbj" d="M484.2 602.7l23.1 9.7"/><path class="kbk" d="M484.7 601.7l23.1 9.7"/><path class="kbl" d="M484.8 601.3l23.1 9.7"/><path class="kbm" d="M508.3 608.6l-3.1 7.4"/><path class="kcz" d="M704.1 483.7l15.3 -15.4"/><path class="kda" d="M703.4 483l15.3 -15.4"/><path class="kdb" d="M703.1 482.7l15.3 -15.4"/><path class="kh" d="M716.3 466.1l5.4 5.4"/><path class="kdn" d="M735.1 475.6l23.4 9.9"/><path class="kdo" d="M735.5 474.6l23.4 9.9"/><path class="kdp" d="M735.7 474.2l23.4 9.9"/><path class="kbm" d="M759.5 481.8l-3 7"/><path class="kcw" d="M475.6 545.9l15.3 -15.4"/><path class="kcx" d="M474.8 545.2l15.3 -15.4"/><path class="kcy" d="M474.5 544.9l15.3 -15.4"/><path class="kt" d="M487.8 528.3l5.4 5.4"/><path class="ky" d="M729 813.6l0 11.8"/><path class="kz" d="M727 813.6l0 11.8"/><path class="kaa" d="M726.2 813.6l0 11.8"/><path class="kab" d="M736 824.7l-14 0"/><path class="ku" d="M828.7 576.3l0 11.8"/><path class="kv" d="M826.7 576.3l0 11.8"/><path class="kw" d="M825.9 576.3l0 11.8"/><path class="kx" d="M835.7 587.4l-14 0"/><path class="kcj" d="M847.5 495.5l15.1 -15.1"/><path class="kcs" d="M846.7 494.7l15.1 -15.1"/><path class="kcl" d="M846.3 494.3l15.1 -15.1"/><path class="kh" d="M859.3 477.9l5.7 5.6"/><path class="kbr" d="M487.9 612.1l24.5 10.3"/><path class="kbs" d="M488.3 611.1l24.5 10.3"/><path class="kbt" d="M488.5 610.7l24.5 10.3"/><path class="kbu" d="M513.3 618.6l-3 7"/><path class="ke" d="M605.7 687.6l0 11.8"/><path class="kn" d="M603.7 687.6l0 11.8"/><path class="ko" d="M602.9 687.6l0 11.8"/><path class="kh" d="M612.7 698.8l-14 0"/><path class="kbf" d="M374.4 486.6l23.1 9.7"/><path class="kbg" d="M374.8 485.6l23.1 9.7"/><path class="kbh" d="M375 485.1l23.1 9.7"/><path class="kbi" d="M398.4 492.4l-3.1 7.4"/><path class="kcz" d="M675.2 547.7l15.3 -15.4"/><path class="kda" d="M674.5 546.9l15.3 -15.4"/><path class="kdb" d="M674.1 546.6l15.3 -15.4"/><path class="kh" d="M687.4 530l5.4 5.4"/><path class="kdk" d="M802.1 538.8l23.4 9.9"/><path class="kdl" d="M802.5 537.8l23.4 9.9"/><path class="kdm" d="M802.7 537.4l23.4 9.9"/><path class="kbi" d="M826.5 544.9l-3 7"/><path class="ky" d="M482.3 561.7l0 11.8"/><path class="kz" d="M480.4 561.7l0 11.8"/><path class="kaa" d="M479.5 561.7l0 11.8"/><path class="kab" d="M489.3 572.9l-14 0"/><path class="kcj" d="M819 558.9l15.1 -15.1"/><path class="kcs" d="M818.2 558.1l15.1 -15.1"/><path class="kcl" d="M817.9 557.8l15.1 -15.1"/><path class="kh" d="M830.8 541.4l5.7 5.6"/><path class="kbj" d="M440.3 549.3l23.1 9.7"/><path class="kbk" d="M440.7 548.3l23.1 9.7"/><path class="kbl" d="M440.9 547.8l23.1 9.7"/><path class="kbm" d="M464.4 555.1l-3.1 7.4"/><path class="kcz" d="M646.3 611.6l15.3 -15.4"/><path class="kda" d="M645.5 610.8l15.3 -15.4"/><path class="kdb" d="M645.2 610.5l15.3 -15.4"/><path class="kh" d="M658.5 594l5.4 5.4"/><path class="kdx" d="M660 768.5l23.1 9.7"/><path class="kdy" d="M660.4 767.5l23.1 9.7"/><path class="kdz" d="M660.6 767l23.1 9.7"/><path class="kbi" d="M684.1 774.3l-3.1 7.4"/><path class="kcj" d="M790.5 622.4l15.1 -15.1"/><path class="kcs" d="M789.7 621.6l15.1 -15.1"/><path class="kcl" d="M789.4 621.3l15.1 -15.1"/><path class="kh" d="M802.4 604.9l5.7 5.6"/><path class="kbj" d="M506.2 612l23.1 9.7"/><path class="kbk" d="M506.6 611l23.1 9.7"/><path class="kbl" d="M506.8 610.5l23.1 9.7"/><path class="kbm" d="M530.3 617.8l-3.1 7.4"/><path class="kan" d="M692.1 589.7l0 15.2"/><path class="kao" d="M690.7 589.7l0 15.2"/><path class="kap" d="M690.1 589.7l0 15.2"/><path class="kd" d="M697.3 604.4l-10.4 0"/><path class="ky" d="M729 803l0 11.8"/><path class="kz" d="M727 803l0 11.8"/><path class="kaa" d="M726.2 803l0 11.8"/><path class="kab" d="M736 814.2l-14 0"/><path class="ku" d="M828.7 565.7l0 11.8"/><path class="kv" d="M826.7 565.7l0 11.8"/><path class="kw" d="M825.9 565.7l0 11.8"/><path class="kx" d="M835.7 576.9l-14 0"/><path class="kbv" d="M465.4 568.1l-3.1 -6.9"/><path class="kbw" d="M466.4 567.6l-3.1 -6.9"/><path class="kbx" d="M466.8 567.4l-3.1 -6.9"/><path class="kbi" d="M458.9 563.4l7.3 -3.2"/><path class="kdn" d="M757.4 485l23.4 9.9"/><path class="kdo" d="M757.9 484l23.4 9.9"/><path class="kdp" d="M758 483.6l23.4 9.9"/><path class="kbm" d="M781.8 491.2l-3 7"/><path class="ke" d="M605.7 677.1l0 11.8"/><path class="kn" d="M603.7 677.1l0 11.8"/><path class="ko" d="M602.9 677.1l0 11.8"/><path class="kh" d="M612.7 688.2l-14 0"/><path class="ky" d="M482.3 551.2l0 11.8"/><path class="kz" d="M480.4 551.2l0 11.8"/><path class="kaa" d="M479.5 551.2l0 11.8"/><path class="kab" d="M489.3 562.3l-14 0"/><path class="kcw" d="M490 496.5l15.3 -15.4"/><path class="kcx" d="M489.3 495.8l15.3 -15.4"/><path class="kcy" d="M489 495.4l15.3 -15.4"/><path class="kt" d="M502.2 478.9l5.4 5.4"/><path class="kbr" d="M511.3 621.9l24.5 10.3"/><path class="kbs" d="M511.7 620.9l24.5 10.3"/><path class="kbt" d="M511.9 620.5l24.5 10.3"/><path class="kbu" d="M536.7 628.5l-3 7"/><path class="kcm" d="M719.3 785.5l15.1 -15.1"/><path class="kcn" d="M718.6 784.7l15.1 -15.1"/><path class="kco" d="M718.2 784.4l15.1 -15.1"/><path class="kh" d="M731.2 768l5.7 5.6"/><path class="kbf" d="M396.3 495.9l23.1 9.7"/><path class="kbg" d="M396.8 494.9l23.1 9.7"/><path class="kbh" d="M397 494.4l23.1 9.7"/><path class="kbi" d="M420.4 501.7l-3.1 7.4"/><path class="kdq" d="M824.4 548.2l23.4 9.9"/><path class="kdr" d="M824.8 547.2l23.4 9.9"/><path class="kds" d="M825 546.8l23.4 9.9"/><path class="kam" d="M848.8 554.3l-3 7"/><path class="kcz" d="M689.7 498.2l15.3 -15.4"/><path class="kda" d="M688.9 497.5l15.3 -15.4"/><path class="kdb" d="M688.6 497.2l15.3 -15.4"/><path class="kh" d="M701.9 480.6l5.4 5.4"/><path class="kct" d="M461.1 560.4l15.3 -15.4"/><path class="kcu" d="M460.4 559.7l15.3 -15.4"/><path class="kcv" d="M460 559.4l15.3 -15.4"/><path class="kd" d="M473.3 542.8l5.4 5.4"/><path class="kbj" d="M462.3 558.6l23.1 9.7"/><path class="kbk" d="M462.7 557.5l23.1 9.7"/><path class="kbl" d="M462.9 557.1l23.1 9.7"/><path class="kbm" d="M486.3 564.4l-3.1 7.4"/><path class="kcj" d="M833.2 509.7l15.1 -15.1"/><path class="kcs" d="M832.5 509l15.1 -15.1"/><path class="kcl" d="M832.1 508.6l15.1 -15.1"/><path class="kh" d="M845.1 492.2l5.7 5.6"/><path class="ky" d="M729 792.4l0 11.8"/><path class="kz" d="M727 792.4l0 11.8"/><path class="kaa" d="M726.2 792.4l0 11.8"/><path class="kab" d="M736 803.6l-14 0"/><path class="ku" d="M828.7 555.1l0 11.8"/><path class="kv" d="M826.7 555.1l0 11.8"/><path class="kw" d="M825.9 555.1l0 11.8"/><path class="kx" d="M835.7 566.3l-14 0"/><path class="kea" d="M682 777.8l23.1 9.7"/><path class="keb" d="M682.4 776.7l23.1 9.7"/><path class="kec" d="M682.6 776.3l23.1 9.7"/><path class="ked" d="M706 783.6l-3.1 7.4"/><path class="kcz" d="M660.8 562.2l15.3 -15.4"/><path class="kda" d="M660 561.4l15.3 -15.4"/><path class="kdb" d="M659.7 561.1l15.3 -15.4"/><path class="kh" d="M673 544.5l5.4 5.4"/><path class="kbr" d="M464.6 567.3l24.5 10.3"/><path class="kbs" d="M465 566.3l24.5 10.3"/><path class="kbt" d="M465.2 565.9l24.5 10.3"/><path class="kbu" d="M490 573.9l-3 7"/><path class="ke" d="M605.7 666.5l0 11.8"/><path class="kn" d="M603.7 666.5l0 11.8"/><path class="ko" d="M602.9 666.5l0 11.8"/><path class="kh" d="M612.7 677.7l-14 0"/><path class="kbj" d="M528.2 621.3l23.1 9.7"/><path class="kbk" d="M528.6 620.2l23.1 9.7"/><path class="kbl" d="M528.8 619.8l23.1 9.7"/><path class="kbm" d="M552.2 627.1l-3.1 7.4"/><path class="kcj" d="M804.8 573.2l15.1 -15.1"/><path class="kcs" d="M804 572.4l15.1 -15.1"/><path class="kcl" d="M803.6 572.1l15.1 -15.1"/><path class="kh" d="M816.6 555.7l5.7 5.6"/><path class="ky" d="M482.3 540.6l0 11.8"/><path class="kz" d="M480.4 540.6l0 11.8"/><path class="kaa" d="M479.5 540.6l0 11.8"/><path class="kab" d="M489.3 551.8l-14 0"/><path class="kan" d="M692.1 575.7l0 15.2"/><path class="kao" d="M690.7 575.7l0 15.2"/><path class="kap" d="M690.1 575.7l0 15.2"/><path class="kd" d="M697.3 590.3l-10.4 0"/><path class="kdk" d="M779.8 494.4l23.4 9.9"/><path class="kdl" d="M780.2 493.5l23.4 9.9"/><path class="kdm" d="M780.4 493l23.4 9.9"/><path class="kbi" d="M804.1 500.6l-3 7"/><path class="kbv" d="M715 787.9l5.3 -3.1"/><path class="kbw" d="M714.4 786.9l5.3 -3.1"/><path class="kbx" d="M714.2 786.5l5.3 -3.1"/><path class="kbi" d="M717.7 781.6l4.1 6.9"/><path class="kcw" d="M631.8 626.1l15.3 -15.4"/><path class="kcx" d="M631.1 625.3l15.3 -15.4"/><path class="kcy" d="M630.8 625l15.3 -15.4"/><path class="kt" d="M644 608.5l5.4 5.4"/><path class="kbj" d="M418.3 505.1l23.1 9.7"/><path class="kbk" d="M418.7 504.1l23.1 9.7"/><path class="kbl" d="M418.9 503.7l23.1 9.7"/><path class="kbm" d="M442.4 511l-3.1 7.4"/><path class="kcj" d="M776.3 636.7l15.1 -15.1"/><path class="kcs" d="M775.5 635.9l15.1 -15.1"/><path class="kcl" d="M775.2 635.6l15.1 -15.1"/><path class="kh" d="M788.1 619.2l5.7 5.6"/><path class="kbr" d="M534.6 631.7l24.5 10.3"/><path class="kbs" d="M535.1 630.8l24.5 10.3"/><path class="kbt" d="M535.2 630.3l24.5 10.3"/><path class="kbu" d="M560 638.3l-3 7"/><path class="kbv" d="M703.9 787.1l6.6 1.4"/><path class="kbw" d="M704.1 786l6.6 1.4"/><path class="kbx" d="M704.2 785.6l6.6 1.4"/><path class="kbi" d="M710.7 784.5l-1.6 7.8"/><path class="kbv" d="M709.3 788.5l6.8 -1"/><path class="kbw" d="M709.2 787.4l6.8 -1"/><path class="kbx" d="M709.1 786.9l6.8 -1"/><path class="kbi" d="M714.9 783.6l1.1 7.9"/><path class="ky" d="M729 781.9l0 11.8"/><path class="kz" d="M727 781.9l0 11.8"/><path class="kaa" d="M726.2 781.9l0 11.8"/><path class="kab" d="M736 793l-14 0"/><path class="ku" d="M828.7 544.6l0 11.8"/><path class="kv" d="M826.7 544.6l0 11.8"/><path class="kw" d="M825.9 544.6l0 11.8"/><path class="kx" d="M835.7 555.7l-14 0"/><path class="kbj" d="M484.2 567.8l23.1 9.7"/><path class="kbk" d="M484.7 566.8l23.1 9.7"/><path class="kbl" d="M484.8 566.4l23.1 9.7"/><path class="kbm" d="M508.3 573.6l-3.1 7.4"/><path class="km" d="M605.7 656l0 11.8"/><path class="kz" d="M603.7 656l0 11.8"/><path class="kaf" d="M602.9 656l0 11.8"/><path class="kab" d="M612.7 667.1l-14 0"/><path class="kcw" d="M475.6 511l15.3 -15.4"/><path class="kcx" d="M474.8 510.3l15.3 -15.4"/><path class="kcy" d="M474.5 509.9l15.3 -15.4"/><path class="kt" d="M487.8 493.4l5.4 5.4"/><path class="ka" d="M482.3 530l0 11.8"/><path class="kb" d="M480.4 530l0 11.8"/><path class="kc" d="M479.5 530l0 11.8"/><path class="kd" d="M489.3 541.2l-14 0"/><path class="kbj" d="M550.1 630.5l23.1 9.7"/><path class="kbk" d="M550.6 629.5l23.1 9.7"/><path class="kbl" d="M550.8 629.1l23.1 9.7"/><path class="kbm" d="M574.2 636.3l-3.1 7.4"/><path class="kbr" d="M487.9 577.1l24.5 10.3"/><path class="kbs" d="M488.3 576.2l24.5 10.3"/><path class="kbt" d="M488.5 575.7l24.5 10.3"/><path class="kbu" d="M513.3 583.7l-3 7"/><path class="kcz" d="M675.2 512.7l15.3 -15.4"/><path class="kda" d="M674.5 512l15.3 -15.4"/><path class="kdb" d="M674.1 511.7l15.3 -15.4"/><path class="kh" d="M687.4 495.1l5.4 5.4"/><path class="kdk" d="M802.1 503.8l23.4 9.9"/><path class="kdl" d="M802.5 502.9l23.4 9.9"/><path class="kdm" d="M802.7 502.4l23.4 9.9"/><path class="kbi" d="M826.5 510l-3 7"/><path class="kan" d="M692.1 561.7l0 15.2"/><path class="kao" d="M690.7 561.7l0 15.2"/><path class="kap" d="M690.1 561.7l0 15.2"/><path class="kd" d="M697.3 576.3l-10.4 0"/><path class="kcj" d="M819 524l15.1 -15.1"/><path class="kcs" d="M818.2 523.2l15.1 -15.1"/><path class="kcl" d="M817.9 522.9l15.1 -15.1"/><path class="kh" d="M830.8 506.5l5.7 5.6"/><path class="kbj" d="M440.3 514.4l23.1 9.7"/><path class="kbk" d="M440.7 513.4l23.1 9.7"/><path class="kbl" d="M440.9 512.9l23.1 9.7"/><path class="kbm" d="M464.4 520.2l-3.1 7.4"/><path class="ky" d="M729 771.3l0 11.8"/><path class="kz" d="M727 771.3l0 11.8"/><path class="kaa" d="M726.2 771.3l0 11.8"/><path class="kab" d="M736 782.5l-14 0"/><path class="ku" d="M828.7 534l0 11.8"/><path class="kv" d="M826.7 534l0 11.8"/><path class="kw" d="M825.9 534l0 11.8"/><path class="kx" d="M835.7 545.2l-14 0"/><path class="kcz" d="M646.3 576.7l15.3 -15.4"/><path class="kda" d="M645.5 575.9l15.3 -15.4"/><path class="kdb" d="M645.2 575.6l15.3 -15.4"/><path class="kh" d="M658.5 559.1l5.4 5.4"/><path class="kbr" d="M558 641.6l24.5 10.3"/><path class="kbs" d="M558.4 640.6l24.5 10.3"/><path class="kbt" d="M558.6 640.2l24.5 10.3"/><path class="kbu" d="M583.4 648.2l-3 7"/><path class="km" d="M605.7 645.4l0 11.8"/><path class="kz" d="M603.7 645.4l0 11.8"/><path class="kaf" d="M602.9 645.4l0 11.8"/><path class="kab" d="M612.7 656.6l-14 0"/><path class="kcj" d="M790.5 587.5l15.1 -15.1"/><path class="kcs" d="M789.7 586.7l15.1 -15.1"/><path class="kcl" d="M789.4 586.4l15.1 -15.1"/><path class="kh" d="M802.4 570l5.7 5.6"/><path class="kbj" d="M506.2 577.1l23.1 9.7"/><path class="kbk" d="M506.6 576.1l23.1 9.7"/><path class="kbl" d="M506.8 575.6l23.1 9.7"/><path class="kbm" d="M530.3 582.9l-3.1 7.4"/><path class="ka" d="M482.3 519.5l0 11.8"/><path class="kb" d="M480.4 519.5l0 11.8"/><path class="kc" d="M479.5 519.5l0 11.8"/><path class="kd" d="M489.3 530.6l-14 0"/><path class="kbv" d="M465.4 533.2l-3.1 -6.9"/><path class="kbw" d="M466.4 532.7l-3.1 -6.9"/><path class="kbx" d="M466.8 532.5l-3.1 -6.9"/><path class="kbi" d="M458.9 528.5l7.3 -3.2"/><path class="kcw" d="M617.4 640.6l15.3 -15.4"/><path class="kcx" d="M616.6 639.9l15.3 -15.4"/><path class="kcy" d="M616.3 639.5l15.3 -15.4"/><path class="kt" d="M629.6 623l5.4 5.4"/><path class="kcj" d="M762.1 651l15.1 -15.1"/><path class="kcs" d="M761.3 650.2l15.1 -15.1"/><path class="kcl" d="M760.9 649.9l15.1 -15.1"/><path class="kh" d="M773.9 633.4l5.7 5.6"/><path class="kbj" d="M572.1 639.8l23.1 9.7"/><path class="kbk" d="M572.5 638.8l23.1 9.7"/><path class="kbl" d="M572.7 638.3l23.1 9.7"/><path class="kbm" d="M596.2 645.6l-3.1 7.4"/><path class="kbr" d="M511.3 587l24.5 10.3"/><path class="kbs" d="M511.7 586l24.5 10.3"/><path class="kbt" d="M511.9 585.6l24.5 10.3"/><path class="kbu" d="M536.7 593.6l-3 7"/><path class="kdq" d="M824.4 513.3l23.4 9.9"/><path class="kdr" d="M824.8 512.3l23.4 9.9"/><path class="kds" d="M825 511.9l23.4 9.9"/><path class="kam" d="M848.8 519.4l-3 7"/><path class="kan" d="M692.1 547.6l0 15.2"/><path class="kao" d="M690.7 547.6l0 15.2"/><path class="kap" d="M690.1 547.6l0 15.2"/><path class="kd" d="M697.3 562.3l-10.4 0"/><path class="ky" d="M729 760.8l0 11.8"/><path class="kz" d="M727 760.8l0 11.8"/><path class="kaa" d="M726.2 760.8l0 11.8"/><path class="kab" d="M736 771.9l-14 0"/><path class="ka" d="M828.7 523.5l0 11.8"/><path class="kb" d="M826.7 523.5l0 11.8"/><path class="kc" d="M825.9 523.5l0 11.8"/><path class="kd" d="M835.7 534.6l-14 0"/><path class="kct" d="M461.1 525.5l15.3 -15.4"/><path class="kcu" d="M460.4 524.8l15.3 -15.4"/><path class="kcv" d="M460 524.5l15.3 -15.4"/><path class="kd" d="M473.3 507.9l5.4 5.4"/><path class="kbj" d="M462.3 523.7l23.1 9.7"/><path class="kbk" d="M462.7 522.6l23.1 9.7"/><path class="kbl" d="M462.9 522.2l23.1 9.7"/><path class="kbm" d="M486.3 529.5l-3.1 7.4"/><path class="km" d="M605.7 634.8l0 11.8"/><path class="kz" d="M603.7 634.8l0 11.8"/><path class="kaf" d="M602.9 634.8l0 11.8"/><path class="kab" d="M612.7 646l-14 0"/><ellipse cx="482.3" cy="520.1" rx="7.0" ry="4.5" fill="#3636d8"/><path class="kbr" d="M581.3 651.4l24.5 10.3"/><path class="kbs" d="M581.8 650.5l24.5 10.3"/><path class="kbt" d="M581.9 650l24.5 10.3"/><path class="kbu" d="M606.7 658l-3 7"/><path class="kcz" d="M660.8 527.3l15.3 -15.4"/><path class="kda" d="M660 526.5l15.3 -15.4"/><path class="kdb" d="M659.7 526.2l15.3 -15.4"/><path class="kh" d="M673 509.6l5.4 5.4"/><path class="kbr" d="M464.6 532.4l24.5 10.3"/><path class="kbs" d="M465 531.4l24.5 10.3"/><path class="kbt" d="M465.2 531l24.5 10.3"/><path class="kbu" d="M490 539l-3 7"/><path class="kbj" d="M528.2 586.4l23.1 9.7"/><path class="kbk" d="M528.6 585.3l23.1 9.7"/><path class="kbl" d="M528.8 584.9l23.1 9.7"/><path class="kbm" d="M552.2 592.2l-3.1 7.4"/><path class="kcj" d="M804.8 538.3l15.1 -15.1"/><path class="kcs" d="M804 537.5l15.1 -15.1"/><path class="kcl" d="M803.6 537.2l15.1 -15.1"/><path class="kh" d="M816.6 520.8l5.7 5.6"/><path class="kbj" d="M594.1 649.1l23.1 9.7"/><path class="kbk" d="M594.5 648l23.1 9.7"/><path class="kbl" d="M594.7 647.6l23.1 9.7"/><path class="kbm" d="M618.2 654.9l-3.1 7.4"/><path class="kcw" d="M631.8 591.2l15.3 -15.4"/><path class="kcx" d="M631.1 590.4l15.3 -15.4"/><path class="kcy" d="M630.8 590.1l15.3 -15.4"/><path class="kt" d="M644 573.6l5.4 5.4"/><path class="kbv" d="M604.7 661.6l10.4 -0.9"/><path class="kbw" d="M604.6 660.4l10.4 -0.9"/><path class="kbx" d="M604.5 660l10.4 -0.9"/><path class="kbi" d="M614.1 656.7l0.7 8"/><ellipse cx="828.7" cy="524.1" rx="7.0" ry="4.5" fill="#3636d8"/><path class="ky" d="M729 750.2l0 11.8"/><path class="kz" d="M727 750.2l0 11.8"/><path class="kaa" d="M726.2 750.2l0 11.8"/><path class="kab" d="M736 761.4l-14 0"/><path class="kcj" d="M776.3 601.8l15.1 -15.1"/><path class="kcs" d="M775.5 601l15.1 -15.1"/><path class="kcl" d="M775.2 600.7l15.1 -15.1"/><path class="kh" d="M788.1 584.3l5.7 5.6"/><path class="kbr" d="M534.6 596.8l24.5 10.3"/><path class="kbs" d="M535.1 595.9l24.5 10.3"/><path class="kbt" d="M535.2 595.4l24.5 10.3"/><path class="kbu" d="M560 603.4l-3 7"/><path class="km" d="M605.7 624.3l0 11.8"/><path class="kz" d="M603.7 624.3l0 11.8"/><path class="kaf" d="M602.9 624.3l0 11.8"/><path class="kab" d="M612.7 635.4l-14 0"/><path class="kan" d="M692.1 533.6l0 15.2"/><path class="kao" d="M690.7 533.6l0 15.2"/><path class="kap" d="M690.1 533.6l0 15.2"/><path class="kd" d="M697.3 548.2l-10.4 0"/><path class="kbj" d="M484.2 532.9l23.1 9.7"/><path class="kbk" d="M484.7 531.9l23.1 9.7"/><path class="kbl" d="M484.8 531.5l23.1 9.7"/><path class="kbm" d="M508.3 538.7l-3.1 7.4"/><path class="kct" d="M602.9 655.1l15.3 -15.4"/><path class="kcu" d="M602.2 654.4l15.3 -15.4"/><path class="kcv" d="M601.8 654l15.3 -15.4"/><path class="kd" d="M615.1 637.5l5.4 5.4"/><path class="kcj" d="M747.8 665.3l15.1 -15.1"/><path class="kcs" d="M747 664.5l15.1 -15.1"/><path class="kcl" d="M746.7 664.1l15.1 -15.1"/><path class="kh" d="M759.7 647.7l5.7 5.6"/><path class="kbj" d="M550.1 595.6l23.1 9.7"/><path class="kbk" d="M550.6 594.6l23.1 9.7"/><path class="kbl" d="M550.8 594.2l23.1 9.7"/><path class="kbm" d="M574.2 601.4l-3.1 7.4"/><path class="kbr" d="M487.9 542.2l24.5 10.3"/><path class="kbs" d="M488.3 541.3l24.5 10.3"/><path class="kbt" d="M488.5 540.8l24.5 10.3"/><path class="kbu" d="M513.3 548.8l-3 7"/><path class="ky" d="M729 739.6l0 11.8"/><path class="kz" d="M727 739.6l0 11.8"/><path class="kaa" d="M726.2 739.6l0 11.8"/><path class="kab" d="M736 750.8l-14 0"/><path class="kbj" d="M616 658.3l23.1 9.7"/><path class="kbk" d="M616.5 657.3l23.1 9.7"/><path class="kbl" d="M616.7 656.8l23.1 9.7"/><path class="kbm" d="M640.1 664.1l-3.1 7.4"/><path class="km" d="M605.7 613.7l0 11.8"/><path class="kz" d="M603.7 613.7l0 11.8"/><path class="kaf" d="M602.9 613.7l0 11.8"/><path class="kab" d="M612.7 624.9l-14 0"/><path class="kcz" d="M646.3 541.8l15.3 -15.4"/><path class="kda" d="M645.5 541l15.3 -15.4"/><path class="kdb" d="M645.2 540.7l15.3 -15.4"/><path class="kh" d="M658.5 524.2l5.4 5.4"/><path class="kbr" d="M558 606.7l24.5 10.3"/><path class="kbs" d="M558.4 605.7l24.5 10.3"/><path class="kbt" d="M558.6 605.3l24.5 10.3"/><path class="kbu" d="M583.4 613.3l-3 7"/><path class="kcj" d="M790.5 552.6l15.1 -15.1"/><path class="kcs" d="M789.7 551.8l15.1 -15.1"/><path class="kcl" d="M789.4 551.5l15.1 -15.1"/><path class="kh" d="M802.4 535.1l5.7 5.6"/><path class="kbj" d="M506.2 542.2l23.1 9.7"/><path class="kbk" d="M506.6 541.2l23.1 9.7"/><path class="kbl" d="M506.8 540.7l23.1 9.7"/><path class="kbm" d="M530.3 548l-3.1 7.4"/><path class="kan" d="M692.1 519.6l0 15.2"/><path class="kao" d="M690.7 519.6l0 15.2"/><path class="kap" d="M690.1 519.6l0 15.2"/><path class="kd" d="M697.3 534.2l-10.4 0"/><path class="kcw" d="M617.4 605.7l15.3 -15.4"/><path class="kcx" d="M616.6 605l15.3 -15.4"/><path class="kcy" d="M616.3 604.6l15.3 -15.4"/><path class="kt" d="M629.6 588.1l5.4 5.4"/><path class="kcj" d="M762.1 616.1l15.1 -15.1"/><path class="kcs" d="M761.3 615.3l15.1 -15.1"/><path class="kcl" d="M760.9 614.9l15.1 -15.1"/><path class="kh" d="M773.9 598.5l5.7 5.6"/><path class="kbj" d="M572.1 604.9l23.1 9.7"/><path class="kbk" d="M572.5 603.9l23.1 9.7"/><path class="kbl" d="M572.7 603.4l23.1 9.7"/><path class="kbm" d="M596.2 610.7l-3.1 7.4"/><path class="ki" d="M729 729.1l0 11.8"/><path class="kj" d="M727 729.1l0 11.8"/><path class="kk" d="M726.2 729.1l0 11.8"/><path class="kl" d="M736 740.2l-14 0"/><path class="kbr" d="M511.3 552.1l24.5 10.3"/><path class="kbs" d="M511.7 551.1l24.5 10.3"/><path class="kbt" d="M511.9 550.7l24.5 10.3"/><path class="kbu" d="M536.7 558.7l-3 7"/><path class="km" d="M605.7 603.2l0 11.8"/><path class="kz" d="M603.7 603.2l0 11.8"/><path class="kaf" d="M602.9 603.2l0 11.8"/><path class="kab" d="M612.7 614.3l-14 0"/><path class="kcp" d="M733.6 679.6l15.1 -15.1"/><path class="kcq" d="M732.8 678.8l15.1 -15.1"/><path class="kcr" d="M732.5 678.4l15.1 -15.1"/><path class="kt" d="M745.4 662l5.7 5.6"/><path class="kbf" d="M638 667.6l23.1 9.7"/><path class="kbg" d="M638.5 666.6l23.1 9.7"/><path class="kbh" d="M638.6 666.1l23.1 9.7"/><path class="kbi" d="M662.1 673.4l-3.1 7.4"/><path class="kbr" d="M581.3 616.5l24.5 10.3"/><path class="kbs" d="M581.8 615.5l24.5 10.3"/><path class="kbt" d="M581.9 615.1l24.5 10.3"/><path class="kbu" d="M606.7 623.1l-3 7"/><path class="kbj" d="M528.2 551.5l23.1 9.7"/><path class="kbk" d="M528.6 550.4l23.1 9.7"/><path class="kbl" d="M528.8 550l23.1 9.7"/><path class="kbm" d="M552.2 557.3l-3.1 7.4"/><path class="kan" d="M692.1 505.5l0 15.2"/><path class="kao" d="M690.7 505.5l0 15.2"/><path class="kap" d="M690.1 505.5l0 15.2"/><path class="kd" d="M697.3 520.2l-10.4 0"/><path class="ki" d="M729 718.5l0 11.8"/><path class="kj" d="M727 718.5l0 11.8"/><path class="kk" d="M726.2 718.5l0 11.8"/><path class="kl" d="M736 729.7l-14 0"/><path class="kbj" d="M594.1 614.2l23.1 9.7"/><path class="kbk" d="M594.5 613.1l23.1 9.7"/><path class="kbl" d="M594.7 612.7l23.1 9.7"/><path class="kbm" d="M618.2 620l-3.1 7.4"/><path class="km" d="M605.7 592.6l0 11.8"/><path class="kz" d="M603.7 592.6l0 11.8"/><path class="kaf" d="M602.9 592.6l0 11.8"/><path class="kab" d="M612.7 603.8l-14 0"/><path class="kcw" d="M631.8 556.3l15.3 -15.4"/><path class="kcx" d="M631.1 555.5l15.3 -15.4"/><path class="kcy" d="M630.8 555.2l15.3 -15.4"/><path class="kt" d="M644 538.7l5.4 5.4"/><path class="kbv" d="M604.7 626.7l10.4 -0.9"/><path class="kbw" d="M604.6 625.5l10.4 -0.9"/><path class="kbx" d="M604.5 625.1l10.4 -0.9"/><path class="kbi" d="M614.1 621.8l0.7 8"/><path class="kcj" d="M776.3 566.9l15.1 -15.1"/><path class="kcs" d="M775.5 566.1l15.1 -15.1"/><path class="kcl" d="M775.2 565.8l15.1 -15.1"/><path class="kh" d="M788.1 549.4l5.7 5.6"/><path class="kbr" d="M534.6 561.9l24.5 10.3"/><path class="kbs" d="M535.1 561l24.5 10.3"/><path class="kbt" d="M535.2 560.5l24.5 10.3"/><path class="kbu" d="M560 568.5l-3 7"/><path class="kbf" d="M660 676.8l23.1 9.7"/><path class="kbg" d="M660.4 675.8l23.1 9.7"/><path class="kbh" d="M660.6 675.4l23.1 9.7"/><path class="kbi" d="M684.1 682.7l-3.1 7.4"/><path class="kct" d="M602.9 620.2l15.3 -15.4"/><path class="kcu" d="M602.2 619.5l15.3 -15.4"/><path class="kcv" d="M601.8 619.1l15.3 -15.4"/><path class="kd" d="M615.1 602.6l5.4 5.4"/><path class="kcj" d="M747.8 630.4l15.1 -15.1"/><path class="kcs" d="M747 629.6l15.1 -15.1"/><path class="kcl" d="M746.7 629.2l15.1 -15.1"/><path class="kh" d="M759.7 612.8l5.7 5.6"/><path class="ki" d="M729 708l0 11.8"/><path class="kj" d="M727 708l0 11.8"/><path class="kk" d="M726.2 708l0 11.8"/><path class="kl" d="M736 719.1l-14 0"/><path class="kbj" d="M550.1 560.7l23.1 9.7"/><path class="kbk" d="M550.6 559.7l23.1 9.7"/><path class="kbl" d="M550.8 559.2l23.1 9.7"/><path class="kbm" d="M574.2 566.5l-3.1 7.4"/><ellipse cx="692.1" cy="506.1" rx="5.2" ry="3.3" fill="#3636d8"/><path class="kcm" d="M719.3 693.8l15.1 -15.1"/><path class="kcn" d="M718.6 693.1l15.1 -15.1"/><path class="kco" d="M718.2 692.7l15.1 -15.1"/><path class="kh" d="M731.2 676.3l5.7 5.6"/><path class="ka" d="M605.7 582l0 11.8"/><path class="kb" d="M603.7 582l0 11.8"/><path class="kc" d="M602.9 582l0 11.8"/><path class="kd" d="M612.7 593.2l-14 0"/><path class="kbj" d="M616 623.4l23.1 9.7"/><path class="kbk" d="M616.5 622.4l23.1 9.7"/><path class="kbl" d="M616.7 621.9l23.1 9.7"/><path class="kbm" d="M640.1 629.2l-3.1 7.4"/><path class="kbr" d="M558 571.8l24.5 10.3"/><path class="kbs" d="M558.4 570.8l24.5 10.3"/><path class="kbt" d="M558.6 570.4l24.5 10.3"/><path class="kbu" d="M583.4 578.4l-3 7"/><path class="kbn" d="M682 686.1l23.1 9.7"/><path class="kbo" d="M682.4 685.1l23.1 9.7"/><path class="kbp" d="M682.6 684.6l23.1 9.7"/><path class="kbq" d="M706 691.9l-3.1 7.4"/><path class="ki" d="M729 697.4l0 11.8"/><path class="kj" d="M727 697.4l0 11.8"/><path class="kk" d="M726.2 697.4l0 11.8"/><path class="kl" d="M736 708.6l-14 0"/><path class="kcw" d="M617.4 570.8l15.3 -15.4"/><path class="kcx" d="M616.6 570l15.3 -15.4"/><path class="kcy" d="M616.3 569.7l15.3 -15.4"/><path class="kt" d="M629.6 553.2l5.4 5.4"/><path class="ka" d="M605.7 571.5l0 11.8"/><path class="kb" d="M603.7 571.5l0 11.8"/><path class="kc" d="M602.9 571.5l0 11.8"/><path class="kd" d="M612.7 582.6l-14 0"/><path class="kcj" d="M762.1 581.2l15.1 -15.1"/><path class="kcs" d="M761.3 580.4l15.1 -15.1"/><path class="kcl" d="M760.9 580l15.1 -15.1"/><path class="kh" d="M773.9 563.6l5.7 5.6"/><path class="kbv" d="M715 696.2l5.3 -3.1"/><path class="kbw" d="M714.4 695.3l5.3 -3.1"/><path class="kbx" d="M714.2 694.9l5.3 -3.1"/><path class="kbi" d="M717.7 690l4.1 6.9"/><path class="kbj" d="M572.1 570l23.1 9.7"/><path class="kbk" d="M572.5 569l23.1 9.7"/><path class="kbl" d="M572.7 568.5l23.1 9.7"/><path class="kbm" d="M596.2 575.8l-3.1 7.4"/><path class="kbv" d="M703.9 695.5l6.6 1.4"/><path class="kbw" d="M704.1 694.4l6.6 1.4"/><path class="kbx" d="M704.2 693.9l6.6 1.4"/><path class="kbi" d="M710.7 692.8l-1.6 7.8"/><path class="kbv" d="M709.3 696.8l6.8 -1"/><path class="kbw" d="M709.2 695.7l6.8 -1"/><path class="kbx" d="M709.1 695.2l6.8 -1"/><path class="kbi" d="M714.9 692l1.1 7.9"/><path class="kcp" d="M733.6 644.7l15.1 -15.1"/><path class="kcq" d="M732.8 643.9l15.1 -15.1"/><path class="kcr" d="M732.5 643.5l15.1 -15.1"/><path class="kt" d="M745.4 627.1l5.7 5.6"/><path class="kbf" d="M638 632.7l23.1 9.7"/><path class="kbg" d="M638.5 631.6l23.1 9.7"/><path class="kbh" d="M638.6 631.2l23.1 9.7"/><path class="kbi" d="M662.1 638.5l-3.1 7.4"/><path class="kbr" d="M581.3 581.6l24.5 10.3"/><path class="kbs" d="M581.8 580.6l24.5 10.3"/><path class="kbt" d="M581.9 580.2l24.5 10.3"/><path class="kbu" d="M606.7 588.2l-3 7"/><path class="ki" d="M729 686.8l0 11.8"/><path class="kj" d="M727 686.8l0 11.8"/><path class="kk" d="M726.2 686.8l0 11.8"/><path class="kl" d="M736 698l-14 0"/><ellipse cx="605.7" cy="572.1" rx="7.0" ry="4.5" fill="#3636d8"/><path class="kbj" d="M594.1 579.2l23.1 9.7"/><path class="kbk" d="M594.5 578.2l23.1 9.7"/><path class="kbl" d="M594.7 577.8l23.1 9.7"/><path class="kbm" d="M618.2 585.1l-3.1 7.4"/><path class="kbv" d="M604.7 591.8l10.4 -0.9"/><path class="kbw" d="M604.6 590.6l10.4 -0.9"/><path class="kbx" d="M604.5 590.2l10.4 -0.9"/><path class="kbi" d="M614.1 586.9l0.7 8"/><path class="kbf" d="M660 641.9l23.1 9.7"/><path class="kbg" d="M660.4 640.9l23.1 9.7"/><path class="kbh" d="M660.6 640.5l23.1 9.7"/><path class="kbi" d="M684.1 647.8l-3.1 7.4"/><path class="kct" d="M602.9 585.3l15.3 -15.4"/><path class="kcu" d="M602.2 584.6l15.3 -15.4"/><path class="kcv" d="M601.8 584.2l15.3 -15.4"/><path class="kd" d="M615.1 567.7l5.4 5.4"/><path class="ki" d="M729 676.3l0 11.8"/><path class="kj" d="M727 676.3l0 11.8"/><path class="kk" d="M726.2 676.3l0 11.8"/><path class="kl" d="M736 687.4l-14 0"/><path class="kcj" d="M747.8 595.5l15.1 -15.1"/><path class="kcs" d="M747 594.7l15.1 -15.1"/><path class="kcl" d="M746.7 594.3l15.1 -15.1"/><path class="kh" d="M759.7 577.9l5.7 5.6"/><path class="kcm" d="M719.3 658.9l15.1 -15.1"/><path class="kcn" d="M718.6 658.1l15.1 -15.1"/><path class="kco" d="M718.2 657.8l15.1 -15.1"/><path class="kh" d="M731.2 641.4l5.7 5.6"/><path class="kbj" d="M616 588.5l23.1 9.7"/><path class="kbk" d="M616.5 587.5l23.1 9.7"/><path class="kbl" d="M616.7 587l23.1 9.7"/><path class="kbm" d="M640.1 594.3l-3.1 7.4"/><path class="ki" d="M729 665.7l0 11.8"/><path class="kj" d="M727 665.7l0 11.8"/><path class="kk" d="M726.2 665.7l0 11.8"/><path class="kl" d="M736 676.9l-14 0"/><path class="kbn" d="M682 651.2l23.1 9.7"/><path class="kbo" d="M682.4 650.2l23.1 9.7"/><path class="kbp" d="M682.6 649.7l23.1 9.7"/><path class="kbq" d="M706 657l-3.1 7.4"/><path class="kbv" d="M715 661.3l5.3 -3.1"/><path class="kbw" d="M714.4 660.4l5.3 -3.1"/><path class="kbx" d="M714.2 660l5.3 -3.1"/><path class="kbi" d="M717.7 655.1l4.1 6.9"/><path class="kbv" d="M703.9 660.6l6.6 1.4"/><path class="kbw" d="M704.1 659.5l6.6 1.4"/><path class="kbx" d="M704.2 659l6.6 1.4"/><path class="kbi" d="M710.7 657.9l-1.6 7.8"/><path class="kbv" d="M709.3 661.9l6.8 -1"/><path class="kbw" d="M709.2 660.8l6.8 -1"/><path class="kbx" d="M709.1 660.3l6.8 -1"/><path class="kbi" d="M714.9 657.1l1.1 7.9"/><path class="kcp" d="M733.6 609.7l15.1 -15.1"/><path class="kcq" d="M732.8 609l15.1 -15.1"/><path class="kcr" d="M732.5 608.6l15.1 -15.1"/><path class="kt" d="M745.4 592.2l5.7 5.6"/><path class="kbf" d="M638 597.8l23.1 9.7"/><path class="kbg" d="M638.5 596.7l23.1 9.7"/><path class="kbh" d="M638.6 596.3l23.1 9.7"/><path class="kbi" d="M662.1 603.6l-3.1 7.4"/><path class="ki" d="M729 655.1l0 11.8"/><path class="kj" d="M727 655.1l0 11.8"/><path class="kk" d="M726.2 655.1l0 11.8"/><path class="kl" d="M736 666.3l-14 0"/><path class="ki" d="M729 644.6l0 11.8"/><path class="kj" d="M727 644.6l0 11.8"/><path class="kk" d="M726.2 644.6l0 11.8"/><path class="kl" d="M736 655.7l-14 0"/><path class="kbf" d="M660 607l23.1 9.7"/><path class="kbg" d="M660.4 606l23.1 9.7"/><path class="kbh" d="M660.6 605.6l23.1 9.7"/><path class="kbi" d="M684.1 612.8l-3.1 7.4"/><path class="kcm" d="M719.3 624l15.1 -15.1"/><path class="kcn" d="M718.6 623.2l15.1 -15.1"/><path class="kco" d="M718.2 622.9l15.1 -15.1"/><path class="kh" d="M731.2 606.5l5.7 5.6"/><path class="ka" d="M729 634l0 11.8"/><path class="kb" d="M727 634l0 11.8"/><path class="kc" d="M726.2 634l0 11.8"/><path class="kd" d="M736 645.2l-14 0"/><path class="kbn" d="M682 616.3l23.1 9.7"/><path class="kbo" d="M682.4 615.3l23.1 9.7"/><path class="kbp" d="M682.6 614.8l23.1 9.7"/><path class="kbq" d="M706 622.1l-3.1 7.4"/><path class="kbv" d="M715 626.4l5.3 -3.1"/><path class="kbw" d="M714.4 625.5l5.3 -3.1"/><path class="kbx" d="M714.2 625.1l5.3 -3.1"/><path class="kbi" d="M717.7 620.2l4.1 6.9"/><path class="ka" d="M729 623.5l0 11.8"/><path class="kb" d="M727 623.5l0 11.8"/><path class="kc" d="M726.2 623.5l0 11.8"/><path class="kd" d="M736 634.6l-14 0"/><path class="kbv" d="M703.9 625.7l6.6 1.4"/><path class="kbw" d="M704.1 624.6l6.6 1.4"/><path class="kbx" d="M704.2 624.1l6.6 1.4"/><path class="kbi" d="M710.7 623l-1.6 7.8"/><path class="kbv" d="M709.3 627l6.8 -1"/><path class="kbw" d="M709.2 625.9l6.8 -1"/><path class="kbx" d="M709.1 625.4l6.8 -1"/><path class="kbi" d="M714.9 622.2l1.1 7.9"/><ellipse cx="729.0" cy="624.1" rx="7.0" ry="4.5" fill="#3636d8"/></g><path d="M607.5 303.5L590.0 320.0" stroke="#222" stroke-width="0.9"/><rect x="607.5" y="289.5" width="27" height="15" fill="#fff" stroke="#333" stroke-width="0.9"/><text x="621.0" y="301.2" font-family="Liberation Sans,sans-serif" font-size="11.5" fill="#333" text-anchor="middle">99.9</text><path d="M607.5 416.0L588.0 437.0" stroke="#222" stroke-width="0.9"/><rect x="607.5" y="402.0" width="27" height="15" fill="#fff" stroke="#333" stroke-width="0.9"/><text x="621.0" y="413.7" font-family="Liberation Sans,sans-serif" font-size="11.5" fill="#333" text-anchor="middle">21.1</text><path d="M807.0 388.0L793.0 404.0" stroke="#222" stroke-width="0.9"/><rect x="807.0" y="374.0" width="27" height="15" fill="#fff" stroke="#333" stroke-width="0.9"/><text x="820.5" y="385.7" font-family="Liberation Sans,sans-serif" font-size="11.5" fill="#333" text-anchor="middle">99.9</text><path d="M553.0 598.0L533.0 617.0" stroke="#222" stroke-width="0.9"/><rect x="553.0" y="584.0" width="21" height="15" fill="#fff" stroke="#333" stroke-width="0.9"/><text x="563.5" y="595.7" font-family="Liberation Sans,sans-serif" font-size="11.5" fill="#333" text-anchor="middle">0.0</text></svg>
<div class="abs" style="left:1332px;top:230px;width:577px;height:22px;background:#e6e6e6"></div>
<svg style="left:0;top:0" width="1920" height="1032" viewBox="0 0 1920 1032"><defs><clipPath id="tclip"><rect x="1182" y="263" width="720" height="280.6"/></clipPath></defs><path d="M1896.5 238.500h7l-3.500 4.500z" fill="#111"/><rect x="1182.6" y="263.3" width="717.2" height="33.0" fill="#f0f0f0"/><rect x="1183.6" y="264.3" width="110.9" height="31.5" fill="#b5643c"/><rect x="1182.6" y="296.3" width="717.2" height="29.4" fill="#ebebeb"/><path d="M1182.6 263.3H1899.8" stroke="#b8b8b8" stroke-width="1.3"/><path d="M1182.6 296.3H1899.8" stroke="#b8b8b8" stroke-width="1.3"/><path d="M1182.6 325.7H1899.8" stroke="#b8b8b8" stroke-width="1.3"/><path d="M1182.6 354.7H1899.8" stroke="#b8b8b8" stroke-width="1.3"/><path d="M1182.6 384.0H1899.8" stroke="#b8b8b8" stroke-width="1.3"/><path d="M1182.6 413.5H1899.8" stroke="#b8b8b8" stroke-width="1.3"/><path d="M1182.6 442.9H1899.8" stroke="#b8b8b8" stroke-width="1.3"/><path d="M1182.6 472.3H1899.8" stroke="#b8b8b8" stroke-width="1.3"/><path d="M1182.6 501.7H1899.8" stroke="#b8b8b8" stroke-width="1.3"/><path d="M1182.6 531.0H1899.8" stroke="#b8b8b8" stroke-width="1.3"/><rect x="1900.600" y="263.300" width="8" height="280.300" fill="#f0f0f0"/><path d="M1182.6 263.3V543.6" stroke="#b8b8b8" stroke-width="1.3"/><path d="M1295.0 263.3V543.6" stroke="#b8b8b8" stroke-width="1.3"/><path d="M1344.7 263.3V543.6" stroke="#b8b8b8" stroke-width="1.3"/><path d="M1394.8 263.3V543.6" stroke="#b8b8b8" stroke-width="1.3"/><path d="M1444.5 263.3V543.6" stroke="#b8b8b8" stroke-width="1.3"/><path d="M1498.5 263.3V543.6" stroke="#b8b8b8" stroke-width="1.3"/><path d="M1552.5 263.3V543.6" stroke="#b8b8b8" stroke-width="1.3"/><path d="M1620.9 263.3V543.6" stroke="#b8b8b8" stroke-width="1.3"/><path d="M1714.2 263.3V543.6" stroke="#b8b8b8" stroke-width="1.3"/><path d="M1783.0 263.3V543.6" stroke="#b8b8b8" stroke-width="1.3"/><path d="M1856.5 263.3V543.6" stroke="#b8b8b8" stroke-width="1.3"/><rect x="1184.1" y="297.6" width="109.4" height="26.6" fill="none" stroke="#f26f21" stroke-width="1.6"/><path d="M1182.6 263.3V560.5H1908.5V263.3" stroke="#c8c8c8" stroke-width="1" fill="none"/><rect x="1901.4" y="264" width="6.4" height="36" fill="#cfcfcf"/><rect x="1183.5" y="547.4" width="707.5" height="9.8" fill="#d6d6d6"/><rect x="1183.2" y="544.2" width="716" height="3" fill="#fff"/><path d="M1279.800 283.500h8l-4-5.500z" fill="#fff"/><circle cx="1881.9" cy="311.0" r="7" fill="#56c943"/><circle cx="1881.9" cy="311.0" r="6.5" fill="none" stroke="#8fe07f" stroke-width="1"/><path d="M1878.8 311.4l2.1 2.3l4.2 -4.8" stroke="#fff" stroke-width="2" fill="none" stroke-linecap="round" stroke-linejoin="round"/><circle cx="1881.9" cy="340.2" r="7" fill="#56c943"/><circle cx="1881.9" cy="340.2" r="6.5" fill="none" stroke="#8fe07f" stroke-width="1"/><path d="M1878.8 340.6l2.1 2.3l4.2 -4.8" stroke="#fff" stroke-width="2" fill="none" stroke-linecap="round" stroke-linejoin="round"/><circle cx="1881.9" cy="369.35" r="7" fill="#56c943"/><circle cx="1881.9" cy="369.35" r="6.5" fill="none" stroke="#8fe07f" stroke-width="1"/><path d="M1878.8 369.7l2.1 2.3l4.2 -4.8" stroke="#fff" stroke-width="2" fill="none" stroke-linecap="round" stroke-linejoin="round"/><circle cx="1881.9" cy="398.75" r="7" fill="#56c943"/><circle cx="1881.9" cy="398.75" r="6.5" fill="none" stroke="#8fe07f" stroke-width="1"/><path d="M1878.8 399.1l2.1 2.3l4.2 -4.8" stroke="#fff" stroke-width="2" fill="none" stroke-linecap="round" stroke-linejoin="round"/><circle cx="1881.9" cy="428.2" r="7" fill="#56c943"/><circle cx="1881.9" cy="428.2" r="6.5" fill="none" stroke="#8fe07f" stroke-width="1"/><path d="M1878.8 428.6l2.1 2.3l4.2 -4.8" stroke="#fff" stroke-width="2" fill="none" stroke-linecap="round" stroke-linejoin="round"/><circle cx="1881.9" cy="457.6" r="7" fill="#56c943"/><circle cx="1881.9" cy="457.6" r="6.5" fill="none" stroke="#8fe07f" stroke-width="1"/><path d="M1878.8 458.0l2.1 2.3l4.2 -4.8" stroke="#fff" stroke-width="2" fill="none" stroke-linecap="round" stroke-linejoin="round"/><circle cx="1881.9" cy="487.0" r="7" fill="#56c943"/><circle cx="1881.9" cy="487.0" r="6.5" fill="none" stroke="#8fe07f" stroke-width="1"/><path d="M1878.8 487.4l2.1 2.3l4.2 -4.8" stroke="#fff" stroke-width="2" fill="none" stroke-linecap="round" stroke-linejoin="round"/><circle cx="1881.9" cy="516.35" r="7" fill="#56c943"/><circle cx="1881.9" cy="516.35" r="6.5" fill="none" stroke="#8fe07f" stroke-width="1"/><path d="M1878.8 516.7l2.1 2.3l4.2 -4.8" stroke="#fff" stroke-width="2" fill="none" stroke-linecap="round" stroke-linejoin="round"/><circle cx="1881.9" cy="545.7" r="7" fill="#56c943" clip-path="url(#tclip)"/><path d="M1184.300 581H1333.700M1764.400 581H1907" stroke="#dadada" stroke-width="1.2"/></svg>
<div class="abs" style="left:1172px;top:164px;width:747px;height:29px;background:#f26f21"></div>
<div class="abs" style="left:1178px;top:169px;width:101px;height:24px;background:#f1f1f1"></div>
<div class="t" style="left:1191.00px;top:175.50px;font-size:12.00px;color:#f26f21;letter-spacing:-0.195px;">Reinforcement</div>
<div class="t" style="left:1182.20px;top:207.10px;font-size:12.00px;color:#222;letter-spacing:-0.118px;font-weight:bold;">Extreme Strength: LE1 (D100.0%)</div>
<div class="t" style="left:1182.20px;top:235.60px;font-size:12.00px;color:#333;letter-spacing:-0.122px;">Load increment</div>
<div class="t" style="left:1338.40px;top:235.70px;font-size:12.00px;color:#222;letter-spacing:-0.363px;">D100.0%, L100.0%</div>
<div class="t" style="left:1187.80px;top:275.90px;font-size:12.00px;color:#fff;letter-spacing:-0.047px;font-weight:bold;">Reinforcement</div>
<div class="t" style="left:1299.90px;top:275.90px;font-size:12.00px;color:#2a2a2a;letter-spacing:0.213px;font-weight:bold;">X [ft]</div>
<div class="t" style="left:1349.60px;top:275.90px;font-size:12.00px;color:#2a2a2a;letter-spacing:0.249px;font-weight:bold;">Y [ft]</div>
<div class="t" style="left:1399.70px;top:275.90px;font-size:12.00px;color:#2a2a2a;letter-spacing:0.326px;font-weight:bold;">Z [ft]</div>
<div class="t" style="left:1449.40px;top:275.90px;font-size:12.00px;color:#2a2a2a;letter-spacing:0.089px;font-weight:bold;">τb [ksi]</div>
<div class="t" style="left:1503.40px;top:275.90px;font-size:12.00px;color:#2a2a2a;letter-spacing:-0.208px;font-weight:bold;">Fa [kip]</div>
<div class="t" style="left:1557.40px;top:275.90px;font-size:12.00px;color:#2a2a2a;letter-spacing:0.087px;font-weight:bold;">F tot [kip]</div>
<div class="t" style="left:1625.80px;top:275.90px;font-size:12.00px;color:#2a2a2a;letter-spacing:0.092px;font-weight:bold;">F tot/F lim [%]</div>
<div class="t" style="left:1719.10px;top:275.90px;font-size:12.00px;color:#2a2a2a;letter-spacing:-0.060px;font-weight:bold;">F lim [kip]</div>
<div class="t" style="left:1787.90px;top:275.90px;font-size:12.00px;color:#2a2a2a;letter-spacing:0.413px;font-weight:bold;transform:scaleX(1.0068);transform-origin:0 0;">τb/fbu [%]</div>
<div class="abs" style="left:0;top:0;width:1920px;height:543.6px;overflow:hidden"><div class="t" style="left:1187.80px;top:306.40px;font-size:12.00px;color:#3a3a3a;letter-spacing:-0.450px;transform:scaleX(0.9758);transform-origin:0 0;">AN1</div><div class="t" style="left:1299.90px;top:306.40px;font-size:12.00px;color:#5a5a5a;letter-spacing:-0.228px;">-0.50</div><div class="t" style="left:1349.60px;top:306.40px;font-size:12.00px;color:#5a5a5a;letter-spacing:-0.450px;transform:scaleX(0.9730);transform-origin:0 0;">0.50</div><div class="t" style="left:1399.70px;top:306.40px;font-size:12.00px;color:#5a5a5a;letter-spacing:-0.450px;transform:scaleX(0.9730);transform-origin:0 0;">0.77</div><div class="t" style="left:1449.40px;top:306.40px;font-size:12.00px;color:#222;letter-spacing:-0.027px;font-weight:bold;">0.7</div><div class="t" style="left:1503.40px;top:306.40px;font-size:12.00px;color:#5a5a5a;letter-spacing:-0.450px;transform:scaleX(0.9730);transform-origin:0 0;">0.00</div><div class="t" style="left:1557.40px;top:306.40px;font-size:12.00px;color:#5a5a5a;letter-spacing:-0.450px;transform:scaleX(0.9730);transform-origin:0 0;">2.32</div><div class="t" style="left:1625.80px;top:306.40px;font-size:12.00px;color:#5a5a5a;letter-spacing:-0.450px;transform:scaleX(0.9730);transform-origin:0 0;">13.6</div><div class="t" style="left:1719.10px;top:306.40px;font-size:12.00px;color:#5a5a5a;letter-spacing:-0.429px;transform:scaleX(0.9848);transform-origin:0 0;">17.09</div><div class="t" style="left:1787.90px;top:306.40px;font-size:12.00px;color:#222;letter-spacing:0.062px;font-weight:bold;">99.9</div><div class="t" style="left:1187.80px;top:335.60px;font-size:12.00px;color:#3a3a3a;letter-spacing:-0.450px;transform:scaleX(0.9758);transform-origin:0 0;">AN1</div><div class="t" style="left:1299.90px;top:335.60px;font-size:12.00px;color:#5a5a5a;letter-spacing:-0.228px;">-0.50</div><div class="t" style="left:1349.60px;top:335.60px;font-size:12.00px;color:#5a5a5a;letter-spacing:-0.450px;transform:scaleX(0.9730);transform-origin:0 0;">0.50</div><div class="t" style="left:1399.70px;top:335.60px;font-size:12.00px;color:#5a5a5a;letter-spacing:-0.450px;transform:scaleX(0.9730);transform-origin:0 0;">0.35</div><div class="t" style="left:1449.40px;top:335.60px;font-size:12.00px;color:#5a5a5a;letter-spacing:-0.450px;transform:scaleX(0.9468);transform-origin:0 0;">0.6</div><div class="t" style="left:1503.40px;top:335.60px;font-size:12.00px;color:#5a5a5a;letter-spacing:-0.450px;transform:scaleX(0.9730);transform-origin:0 0;">0.00</div><div class="t" style="left:1557.40px;top:335.60px;font-size:12.00px;color:#222;letter-spacing:0.062px;font-weight:bold;">4.37</div><div class="t" style="left:1625.80px;top:335.60px;font-size:12.00px;color:#222;letter-spacing:0.062px;font-weight:bold;">34.1</div><div class="t" style="left:1719.10px;top:335.60px;font-size:12.00px;color:#5a5a5a;letter-spacing:-0.429px;transform:scaleX(0.9848);transform-origin:0 0;">12.81</div><div class="t" style="left:1787.90px;top:335.60px;font-size:12.00px;color:#5a5a5a;letter-spacing:-0.450px;transform:scaleX(0.9730);transform-origin:0 0;">82.3</div><div class="t" style="left:1187.80px;top:364.75px;font-size:12.00px;color:#3a3a3a;letter-spacing:-0.450px;transform:scaleX(0.9758);transform-origin:0 0;">AN1</div><div class="t" style="left:1299.90px;top:364.75px;font-size:12.00px;color:#5a5a5a;letter-spacing:-0.228px;">-0.50</div><div class="t" style="left:1349.60px;top:364.75px;font-size:12.00px;color:#5a5a5a;letter-spacing:-0.450px;transform:scaleX(0.9730);transform-origin:0 0;">0.50</div><div class="t" style="left:1399.70px;top:364.75px;font-size:12.00px;color:#5a5a5a;letter-spacing:-0.228px;">-0.06</div><div class="t" style="left:1449.40px;top:364.75px;font-size:12.00px;color:#5a5a5a;letter-spacing:-0.450px;transform:scaleX(0.9468);transform-origin:0 0;">0.2</div><div class="t" style="left:1503.40px;top:364.75px;font-size:12.00px;color:#5a5a5a;letter-spacing:-0.450px;transform:scaleX(0.9730);transform-origin:0 0;">0.00</div><div class="t" style="left:1557.40px;top:364.75px;font-size:12.00px;color:#222;letter-spacing:0.062px;font-weight:bold;">0.53</div><div class="t" style="left:1625.80px;top:364.75px;font-size:12.00px;color:#5a5a5a;letter-spacing:-0.450px;transform:scaleX(0.9730);transform-origin:0 0;">12.5</div><div class="t" style="left:1719.10px;top:364.75px;font-size:12.00px;color:#5a5a5a;letter-spacing:-0.450px;transform:scaleX(0.9730);transform-origin:0 0;">4.27</div><div class="t" style="left:1787.90px;top:364.75px;font-size:12.00px;color:#5a5a5a;letter-spacing:-0.450px;transform:scaleX(0.9730);transform-origin:0 0;">21.1</div><div class="t" style="left:1187.80px;top:394.15px;font-size:12.00px;color:#3a3a3a;letter-spacing:-0.450px;transform:scaleX(0.9758);transform-origin:0 0;">AN1</div><div class="t" style="left:1299.90px;top:394.15px;font-size:12.00px;color:#5a5a5a;letter-spacing:-0.228px;">-0.50</div><div class="t" style="left:1349.60px;top:394.15px;font-size:12.00px;color:#5a5a5a;letter-spacing:-0.450px;transform:scaleX(0.9730);transform-origin:0 0;">0.50</div><div class="t" style="left:1399.70px;top:394.15px;font-size:12.00px;color:#5a5a5a;letter-spacing:-0.450px;transform:scaleX(0.9730);transform-origin:0 0;">0.56</div><div class="t" style="left:1449.40px;top:394.15px;font-size:12.00px;color:#5a5a5a;letter-spacing:-0.450px;transform:scaleX(0.9468);transform-origin:0 0;">0.4</div><div class="t" style="left:1503.40px;top:394.15px;font-size:12.00px;color:#5a5a5a;letter-spacing:-0.450px;transform:scaleX(0.9730);transform-origin:0 0;">0.00</div><div class="t" style="left:1557.40px;top:394.15px;font-size:12.00px;color:#5a5a5a;letter-spacing:-0.450px;transform:scaleX(0.9730);transform-origin:0 0;">2.32</div><div class="t" style="left:1625.80px;top:394.15px;font-size:12.00px;color:#5a5a5a;letter-spacing:-0.450px;transform:scaleX(0.9730);transform-origin:0 0;">13.6</div><div class="t" style="left:1719.10px;top:394.15px;font-size:12.00px;color:#222;letter-spacing:0.115px;font-weight:bold;">17.09</div><div class="t" style="left:1787.90px;top:394.15px;font-size:12.00px;color:#5a5a5a;letter-spacing:-0.450px;transform:scaleX(0.9730);transform-origin:0 0;">56.6</div><div class="t" style="left:1187.80px;top:423.60px;font-size:12.00px;color:#3a3a3a;letter-spacing:-0.450px;transform:scaleX(0.9758);transform-origin:0 0;">AN2</div><div class="t" style="left:1299.90px;top:423.60px;font-size:12.00px;color:#5a5a5a;letter-spacing:-0.228px;">-0.50</div><div class="t" style="left:1349.60px;top:423.60px;font-size:12.00px;color:#5a5a5a;letter-spacing:-0.228px;">-0.50</div><div class="t" style="left:1399.70px;top:423.60px;font-size:12.00px;color:#5a5a5a;letter-spacing:-0.450px;transform:scaleX(0.9730);transform-origin:0 0;">0.77</div><div class="t" style="left:1449.40px;top:423.60px;font-size:12.00px;color:#222;letter-spacing:-0.027px;font-weight:bold;">0.7</div><div class="t" style="left:1503.40px;top:423.60px;font-size:12.00px;color:#5a5a5a;letter-spacing:-0.450px;transform:scaleX(0.9730);transform-origin:0 0;">0.00</div><div class="t" style="left:1557.40px;top:423.60px;font-size:12.00px;color:#5a5a5a;letter-spacing:-0.450px;transform:scaleX(0.9730);transform-origin:0 0;">2.33</div><div class="t" style="left:1625.80px;top:423.60px;font-size:12.00px;color:#5a5a5a;letter-spacing:-0.450px;transform:scaleX(0.9730);transform-origin:0 0;">13.7</div><div class="t" style="left:1719.10px;top:423.60px;font-size:12.00px;color:#5a5a5a;letter-spacing:-0.429px;transform:scaleX(0.9848);transform-origin:0 0;">17.09</div><div class="t" style="left:1787.90px;top:423.60px;font-size:12.00px;color:#222;letter-spacing:0.062px;font-weight:bold;">99.9</div><div class="t" style="left:1187.80px;top:453.00px;font-size:12.00px;color:#3a3a3a;letter-spacing:-0.450px;transform:scaleX(0.9758);transform-origin:0 0;">AN2</div><div class="t" style="left:1299.90px;top:453.00px;font-size:12.00px;color:#5a5a5a;letter-spacing:-0.228px;">-0.50</div><div class="t" style="left:1349.60px;top:453.00px;font-size:12.00px;color:#5a5a5a;letter-spacing:-0.228px;">-0.50</div><div class="t" style="left:1399.70px;top:453.00px;font-size:12.00px;color:#5a5a5a;letter-spacing:-0.450px;transform:scaleX(0.9730);transform-origin:0 0;">0.35</div><div class="t" style="left:1449.40px;top:453.00px;font-size:12.00px;color:#5a5a5a;letter-spacing:-0.450px;transform:scaleX(0.9468);transform-origin:0 0;">0.6</div><div class="t" style="left:1503.40px;top:453.00px;font-size:12.00px;color:#5a5a5a;letter-spacing:-0.450px;transform:scaleX(0.9730);transform-origin:0 0;">0.00</div><div class="t" style="left:1557.40px;top:453.00px;font-size:12.00px;color:#222;letter-spacing:0.062px;font-weight:bold;">4.48</div><div class="t" style="left:1625.80px;top:453.00px;font-size:12.00px;color:#222;letter-spacing:0.062px;font-weight:bold;">35.0</div><div class="t" style="left:1719.10px;top:453.00px;font-size:12.00px;color:#5a5a5a;letter-spacing:-0.429px;transform:scaleX(0.9848);transform-origin:0 0;">12.81</div><div class="t" style="left:1787.90px;top:453.00px;font-size:12.00px;color:#5a5a5a;letter-spacing:-0.450px;transform:scaleX(0.9730);transform-origin:0 0;">80.9</div><div class="t" style="left:1187.80px;top:482.40px;font-size:12.00px;color:#3a3a3a;letter-spacing:-0.450px;transform:scaleX(0.9758);transform-origin:0 0;">AN2</div><div class="t" style="left:1299.90px;top:482.40px;font-size:12.00px;color:#5a5a5a;letter-spacing:-0.228px;">-0.50</div><div class="t" style="left:1349.60px;top:482.40px;font-size:12.00px;color:#5a5a5a;letter-spacing:-0.228px;">-0.50</div><div class="t" style="left:1399.70px;top:482.40px;font-size:12.00px;color:#5a5a5a;letter-spacing:-0.228px;">-0.06</div><div class="t" style="left:1449.40px;top:482.40px;font-size:12.00px;color:#5a5a5a;letter-spacing:-0.450px;transform:scaleX(0.9468);transform-origin:0 0;">0.2</div><div class="t" style="left:1503.40px;top:482.40px;font-size:12.00px;color:#5a5a5a;letter-spacing:-0.450px;transform:scaleX(0.9730);transform-origin:0 0;">0.00</div><div class="t" style="left:1557.40px;top:482.40px;font-size:12.00px;color:#222;letter-spacing:0.062px;font-weight:bold;">0.57</div><div class="t" style="left:1625.80px;top:482.40px;font-size:12.00px;color:#5a5a5a;letter-spacing:-0.450px;transform:scaleX(0.9730);transform-origin:0 0;">13.4</div><div class="t" style="left:1719.10px;top:482.40px;font-size:12.00px;color:#5a5a5a;letter-spacing:-0.450px;transform:scaleX(0.9730);transform-origin:0 0;">4.27</div><div class="t" style="left:1787.90px;top:482.40px;font-size:12.00px;color:#5a5a5a;letter-spacing:-0.450px;transform:scaleX(0.9730);transform-origin:0 0;">21.7</div><div class="t" style="left:1187.80px;top:511.75px;font-size:12.00px;color:#3a3a3a;letter-spacing:-0.450px;transform:scaleX(0.9758);transform-origin:0 0;">AN2</div><div class="t" style="left:1299.90px;top:511.75px;font-size:12.00px;color:#5a5a5a;letter-spacing:-0.228px;">-0.50</div><div class="t" style="left:1349.60px;top:511.75px;font-size:12.00px;color:#5a5a5a;letter-spacing:-0.228px;">-0.50</div><div class="t" style="left:1399.70px;top:511.75px;font-size:12.00px;color:#5a5a5a;letter-spacing:-0.450px;transform:scaleX(0.9730);transform-origin:0 0;">0.56</div><div class="t" style="left:1449.40px;top:511.75px;font-size:12.00px;color:#5a5a5a;letter-spacing:-0.450px;transform:scaleX(0.9468);transform-origin:0 0;">0.4</div><div class="t" style="left:1503.40px;top:511.75px;font-size:12.00px;color:#5a5a5a;letter-spacing:-0.450px;transform:scaleX(0.9730);transform-origin:0 0;">0.00</div><div class="t" style="left:1557.40px;top:511.75px;font-size:12.00px;color:#5a5a5a;letter-spacing:-0.450px;transform:scaleX(0.9730);transform-origin:0 0;">2.33</div><div class="t" style="left:1625.80px;top:511.75px;font-size:12.00px;color:#5a5a5a;letter-spacing:-0.450px;transform:scaleX(0.9730);transform-origin:0 0;">13.7</div><div class="t" style="left:1719.10px;top:511.75px;font-size:12.00px;color:#222;letter-spacing:0.115px;font-weight:bold;">17.09</div><div class="t" style="left:1787.90px;top:511.75px;font-size:12.00px;color:#5a5a5a;letter-spacing:-0.450px;transform:scaleX(0.9730);transform-origin:0 0;">61.0</div><div class="t" style="left:1187.80px;top:541.10px;font-size:12.00px;color:#3a3a3a;letter-spacing:-0.450px;transform:scaleX(0.9758);transform-origin:0 0;">AN3</div><div class="t" style="left:1299.90px;top:541.10px;font-size:12.00px;color:#5a5a5a;letter-spacing:-0.450px;transform:scaleX(0.9730);transform-origin:0 0;">0.25</div><div class="t" style="left:1349.60px;top:541.10px;font-size:12.00px;color:#5a5a5a;letter-spacing:-0.228px;">-0.50</div><div class="t" style="left:1399.70px;top:541.10px;font-size:12.00px;color:#5a5a5a;letter-spacing:-0.450px;transform:scaleX(0.9730);transform-origin:0 0;">0.77</div><div class="t" style="left:1449.40px;top:541.10px;font-size:12.00px;color:#222;letter-spacing:-0.027px;font-weight:bold;">0.7</div><div class="t" style="left:1503.40px;top:541.10px;font-size:12.00px;color:#5a5a5a;letter-spacing:-0.450px;transform:scaleX(0.9730);transform-origin:0 0;">0.00</div><div class="t" style="left:1557.40px;top:541.10px;font-size:12.00px;color:#5a5a5a;letter-spacing:-0.450px;transform:scaleX(0.9730);transform-origin:0 0;">2.34</div><div class="t" style="left:1625.80px;top:541.10px;font-size:12.00px;color:#5a5a5a;letter-spacing:-0.450px;transform:scaleX(0.9730);transform-origin:0 0;">13.7</div><div class="t" style="left:1719.10px;top:541.10px;font-size:12.00px;color:#5a5a5a;letter-spacing:-0.429px;transform:scaleX(0.9848);transform-origin:0 0;">17.09</div><div class="t" style="left:1787.90px;top:541.10px;font-size:12.00px;color:#222;letter-spacing:0.062px;font-weight:bold;">99.9</div></div><svg style="left:0;top:0" width="1920" height="1000" viewBox="0 0 1920 1000"><defs><linearGradient id="gv" x1="0" x2="1" y1="0" y2="0"><stop offset="0" stop-color="#b4b4cc"/><stop offset="0.35" stop-color="#c6c6da"/><stop offset="0.75" stop-color="#9a9ab0"/><stop offset="1" stop-color="#66667c"/></linearGradient><linearGradient id="gvb" x1="0" x2="1" y1="0" y2="0"><stop offset="0" stop-color="#8a8ad6"/><stop offset="0.4" stop-color="#9696dc"/><stop offset="1" stop-color="#5c5ca8"/></linearGradient><linearGradient id="gh" x1="0" x2="0" y1="0" y2="1"><stop offset="0" stop-color="#c6c6dc"/><stop offset="0.4" stop-color="#b4b4cc"/><stop offset="1" stop-color="#6c6c84"/></linearGradient><linearGradient id="ghb" x1="0" x2="0" y1="0" y2="1"><stop offset="0" stop-color="#a0a0e4"/><stop offset="0.4" stop-color="#8888d8"/><stop offset="1" stop-color="#5858a0"/></linearGradient><linearGradient id="gab" x1="0" x2="1" y1="0" y2="0"><stop offset="0" stop-color="#2a2ad8"/><stop offset="0.5" stop-color="#2222cc"/><stop offset="1" stop-color="#1a1aa8"/></linearGradient><linearGradient id="gam" x1="0" x2="1" y1="0" y2="0"><stop offset="0" stop-color="#7070d4"/><stop offset="0.5" stop-color="#6464c8"/><stop offset="1" stop-color="#4a4aa0"/></linearGradient><linearGradient id="gal" x1="0" x2="1" y1="0" y2="0"><stop offset="0" stop-color="#a4a4dc"/><stop offset="0.5" stop-color="#9494d0"/><stop offset="1" stop-color="#6c6ca8"/></linearGradient></defs><rect x="1356.9" y="606.2" width="381.0" height="316.0" fill="#e4e4e4" stroke="#d6d6d6" stroke-width="1"/><rect x="1457.9" y="606.2" width="8.1" height="13.6" fill="url(#gab)"/><rect x="1457.9" y="619.8" width="8.1" height="26.2" fill="url(#gam)"/><rect x="1457.9" y="646.0" width="8.1" height="26.0" fill="url(#gab)"/><rect x="1457.9" y="672.0" width="8.1" height="39.5" fill="url(#gal)"/><rect x="1628.8" y="606.2" width="8.1" height="105.3" fill="url(#gab)"/><rect x="1387.1" y="633.3" width="10.8" height="288.4" fill="url(#gv)"/><rect x="1387.1" y="638.0" width="10.8" height="9.0" fill="url(#gvb)"/><path d="M1387.1 647.0h10.8M1387.1 661.6h10.8M1387.1 676.2h10.8M1387.1 690.8h10.8M1387.1 705.4h10.8M1387.1 720.0h10.8M1387.1 734.6h10.8M1387.1 749.2h10.8M1387.1 763.8h10.8M1387.1 778.4h10.8M1387.1 793.0h10.8M1387.1 807.6h10.8M1387.1 822.2h10.8M1387.1 836.8h10.8M1387.1 851.4h10.8M1387.1 866.0h10.8M1387.1 880.6h10.8M1387.1 895.2h10.8M1387.1 909.8h10.8" stroke="#d8d8ec" stroke-width="0.7" opacity="0.8"/><rect x="1492.1" y="633.3" width="10.8" height="288.4" fill="url(#gv)"/><rect x="1492.1" y="638.0" width="10.8" height="9.0" fill="url(#gvb)"/><path d="M1492.1 647.0h10.8M1492.1 661.6h10.8M1492.1 676.2h10.8M1492.1 690.8h10.8M1492.1 705.4h10.8M1492.1 720.0h10.8M1492.1 734.6h10.8M1492.1 749.2h10.8M1492.1 763.8h10.8M1492.1 778.4h10.8M1492.1 793.0h10.8M1492.1 807.6h10.8M1492.1 822.2h10.8M1492.1 836.8h10.8M1492.1 851.4h10.8M1492.1 866.0h10.8M1492.1 880.6h10.8M1492.1 895.2h10.8M1492.1 909.8h10.8" stroke="#d8d8ec" stroke-width="0.7" opacity="0.8"/><rect x="1597.3" y="633.3" width="10.8" height="288.4" fill="url(#gv)"/><rect x="1597.3" y="638.0" width="10.8" height="9.0" fill="url(#gvb)"/><path d="M1597.3 647.0h10.8M1597.3 661.6h10.8M1597.3 676.2h10.8M1597.3 690.8h10.8M1597.3 705.4h10.8M1597.3 720.0h10.8M1597.3 734.6h10.8M1597.3 749.2h10.8M1597.3 763.8h10.8M1597.3 778.4h10.8M1597.3 793.0h10.8M1597.3 807.6h10.8M1597.3 822.2h10.8M1597.3 836.8h10.8M1597.3 851.4h10.8M1597.3 866.0h10.8M1597.3 880.6h10.8M1597.3 895.2h10.8M1597.3 909.8h10.8" stroke="#d8d8ec" stroke-width="0.7" opacity="0.8"/><rect x="1702.5" y="633.3" width="10.8" height="288.4" fill="url(#gv)"/><rect x="1702.5" y="638.0" width="10.8" height="9.0" fill="url(#gvb)"/><path d="M1702.5 647.0h10.8M1702.5 661.6h10.8M1702.5 676.2h10.8M1702.5 690.8h10.8M1702.5 705.4h10.8M1702.5 720.0h10.8M1702.5 734.6h10.8M1702.5 749.2h10.8M1702.5 763.8h10.8M1702.5 778.4h10.8M1702.5 793.0h10.8M1702.5 807.6h10.8M1702.5 822.2h10.8M1702.5 836.8h10.8M1702.5 851.4h10.8M1702.5 866.0h10.8M1702.5 880.6h10.8M1702.5 895.2h10.8M1702.5 909.8h10.8" stroke="#d8d8ec" stroke-width="0.7" opacity="0.8"/><rect x="1387.1" y="675.0" width="10.8" height="30.0" fill="url(#gvb)"/><rect x="1702.5" y="633.3" width="10.8" height="45.0" fill="url(#gvb)"/><rect x="1702.5" y="908.0" width="10.8" height="13.5" fill="url(#gvb)"/><rect x="1377.7" y="632.9" width="339.4" height="5.2" fill="url(#gh)"/><rect x="1377.7" y="632.9" width="36.0" height="5.2" fill="url(#ghb)"/><rect x="1681.0" y="632.9" width="36.0" height="5.2" fill="url(#ghb)"/><path d="M1400.0 632.9v5.2M1412.2 632.9v5.2M1424.4 632.9v5.2M1436.6 632.9v5.2M1448.8 632.9v5.2M1461.0 632.9v5.2M1473.2 632.9v5.2M1485.4 632.9v5.2M1497.6 632.9v5.2M1509.8 632.9v5.2M1522.0 632.9v5.2M1534.2 632.9v5.2M1546.4 632.9v5.2M1558.6 632.9v5.2M1570.8 632.9v5.2M1583.0 632.9v5.2M1595.2 632.9v5.2M1607.4 632.9v5.2M1619.6 632.9v5.2M1631.8 632.9v5.2M1644.0 632.9v5.2M1656.2 632.9v5.2M1668.4 632.9v5.2M1680.6 632.9v5.2M1692.8 632.9v5.2M1705.0 632.9v5.2" stroke="#d8d8ec" stroke-width="0.7" opacity="0.7"/><rect x="1377.7" y="664.5" width="339.4" height="5.2" fill="url(#gh)"/><rect x="1377.7" y="664.5" width="36.0" height="5.2" fill="url(#ghb)"/><rect x="1681.0" y="664.5" width="36.0" height="5.2" fill="url(#ghb)"/><path d="M1400.0 664.5v5.2M1412.2 664.5v5.2M1424.4 664.5v5.2M1436.6 664.5v5.2M1448.8 664.5v5.2M1461.0 664.5v5.2M1473.2 664.5v5.2M1485.4 664.5v5.2M1497.6 664.5v5.2M1509.8 664.5v5.2M1522.0 664.5v5.2M1534.2 664.5v5.2M1546.4 664.5v5.2M1558.6 664.5v5.2M1570.8 664.5v5.2M1583.0 664.5v5.2M1595.2 664.5v5.2M1607.4 664.5v5.2M1619.6 664.5v5.2M1631.8 664.5v5.2M1644.0 664.5v5.2M1656.2 664.5v5.2M1668.4 664.5v5.2M1680.6 664.5v5.2M1692.8 664.5v5.2M1705.0 664.5v5.2" stroke="#d8d8ec" stroke-width="0.7" opacity="0.7"/><rect x="1377.7" y="695.7" width="339.4" height="5.2" fill="url(#gh)"/><rect x="1377.7" y="695.7" width="36.0" height="5.2" fill="url(#ghb)"/><rect x="1681.0" y="695.7" width="36.0" height="5.2" fill="url(#ghb)"/><path d="M1400.0 695.7v5.2M1412.2 695.7v5.2M1424.4 695.7v5.2M1436.6 695.7v5.2M1448.8 695.7v5.2M1461.0 695.7v5.2M1473.2 695.7v5.2M1485.4 695.7v5.2M1497.6 695.7v5.2M1509.8 695.7v5.2M1522.0 695.7v5.2M1534.2 695.7v5.2M1546.4 695.7v5.2M1558.6 695.7v5.2M1570.8 695.7v5.2M1583.0 695.7v5.2M1595.2 695.7v5.2M1607.4 695.7v5.2M1619.6 695.7v5.2M1631.8 695.7v5.2M1644.0 695.7v5.2M1656.2 695.7v5.2M1668.4 695.7v5.2M1680.6 695.7v5.2M1692.8 695.7v5.2M1705.0 695.7v5.2" stroke="#d8d8ec" stroke-width="0.7" opacity="0.7"/><rect x="1377.7" y="780.1" width="339.4" height="5.2" fill="url(#gh)"/><rect x="1377.7" y="780.1" width="36.0" height="5.2" fill="url(#ghb)"/><rect x="1681.0" y="780.1" width="36.0" height="5.2" fill="url(#ghb)"/><path d="M1400.0 780.1v5.2M1412.2 780.1v5.2M1424.4 780.1v5.2M1436.6 780.1v5.2M1448.8 780.1v5.2M1461.0 780.1v5.2M1473.2 780.1v5.2M1485.4 780.1v5.2M1497.6 780.1v5.2M1509.8 780.1v5.2M1522.0 780.1v5.2M1534.2 780.1v5.2M1546.4 780.1v5.2M1558.6 780.1v5.2M1570.8 780.1v5.2M1583.0 780.1v5.2M1595.2 780.1v5.2M1607.4 780.1v5.2M1619.6 780.1v5.2M1631.8 780.1v5.2M1644.0 780.1v5.2M1656.2 780.1v5.2M1668.4 780.1v5.2M1680.6 780.1v5.2M1692.8 780.1v5.2M1705.0 780.1v5.2" stroke="#d8d8ec" stroke-width="0.7" opacity="0.7"/><rect x="1377.7" y="864.6" width="339.4" height="5.2" fill="url(#gh)"/><rect x="1377.7" y="864.6" width="36.0" height="5.2" fill="url(#ghb)"/><rect x="1681.0" y="864.6" width="36.0" height="5.2" fill="url(#ghb)"/><path d="M1400.0 864.6v5.2M1412.2 864.6v5.2M1424.4 864.6v5.2M1436.6 864.6v5.2M1448.8 864.6v5.2M1461.0 864.6v5.2M1473.2 864.6v5.2M1485.4 864.6v5.2M1497.6 864.6v5.2M1509.8 864.6v5.2M1522.0 864.6v5.2M1534.2 864.6v5.2M1546.4 864.6v5.2M1558.6 864.6v5.2M1570.8 864.6v5.2M1583.0 864.6v5.2M1595.2 864.6v5.2M1607.4 864.6v5.2M1619.6 864.6v5.2M1631.8 864.6v5.2M1644.0 864.6v5.2M1656.2 864.6v5.2M1668.4 864.6v5.2M1680.6 864.6v5.2M1692.8 864.6v5.2M1705.0 864.6v5.2" stroke="#d8d8ec" stroke-width="0.7" opacity="0.7"/><rect x="1472.0" y="632.9" width="26.0" height="5.2" fill="url(#ghb)"/><rect x="1584.0" y="664.5" width="20.0" height="5.2" fill="url(#ghb)"/><rect x="1497.0" y="695.7" width="16.0" height="5.2" fill="url(#ghb)"/></svg>
<div id="status"></div>
<div class="t" style="left:9.40px;top:1011.30px;font-size:12.00px;color:#e8e8e8;letter-spacing:-0.209px;">Design Code:</div><div class="t" style="left:81.90px;top:1011.30px;font-size:12.00px;color:#fff;letter-spacing:-0.450px;font-weight:bold;transform:scaleX(0.9258);transform-origin:0 0;">ACI</div>
<div class="t" style="left:116.70px;top:1011.30px;font-size:12.00px;color:#e8e8e8;letter-spacing:-0.112px;">Rounding:</div><div class="t" style="left:172.50px;top:1011.30px;font-size:12.00px;color:#fff;letter-spacing:-0.152px;font-weight:bold;">Imperial</div>
<div class="t" style="left:234.00px;top:1011.30px;font-size:12.00px;color:#e8e8e8;letter-spacing:-0.194px;">Presentation Units:</div><div class="t" style="left:334.00px;top:1011.30px;font-size:12.00px;color:#fff;letter-spacing:-0.152px;font-weight:bold;">Imperial</div>
<div class="abs" style="left:0;top:63px;width:1px;height:937px;background:#000"></div>
<div class="abs" style="left:1919px;top:164px;width:1px;height:836px;background:#333"></div>
</body></html>
